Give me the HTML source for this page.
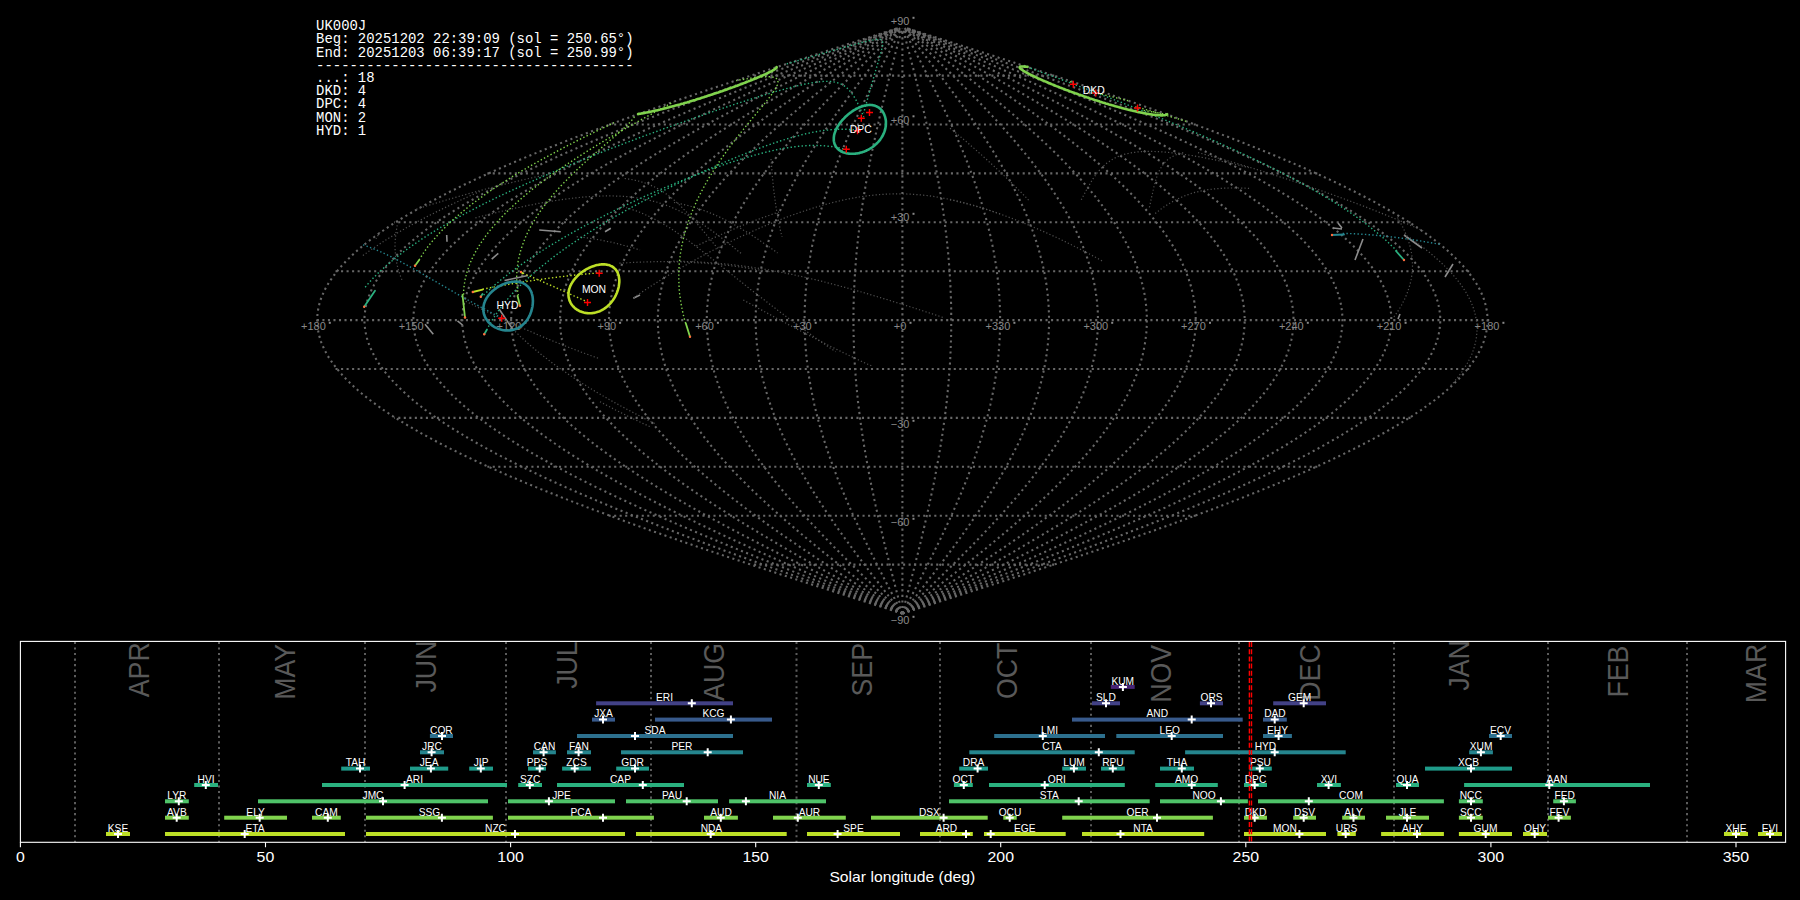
<!DOCTYPE html><html><head><meta charset="utf-8"><style>html,body{margin:0;padding:0;background:#000;overflow:hidden}svg{display:block}</style></head><body><svg width="1800" height="900" viewBox="0 0 1800 900"><g fill="none" stroke="#676767" stroke-width="2.08" stroke-dasharray="2.08 3.44"><path d="M902.4 613.5 L907 611.9 L911.7 610.2 L916.4 608.6 L921.1 607 L925.8 605.4 L930.5 603.7 L935.2 602.1 L939.9 600.5 L944.6 598.8 L949.2 597.2 L953.9 595.6 L958.6 593.9 L963.2 592.3 L967.9 590.7 L972.6 589 L977.2 587.4 L981.9 585.8 L986.5 584.2 L991.1 582.5 L995.8 580.9 L1000.4 579.3 L1005 577.6 L1009.6 576 L1014.2 574.4 L1018.8 572.8 L1023.4 571.1 L1027.9 569.5 L1032.5 567.9 L1037 566.2 L1041.6 564.6 L1046.1 563 L1050.6 561.3 L1055.1 559.7 L1059.6 558.1 L1064.1 556.5 L1068.6 554.8 L1073 553.2 L1077.5 551.6 L1081.9 549.9 L1086.3 548.3 L1090.7 546.7 L1095.1 545 L1099.5 543.4 L1103.9 541.8 L1108.2 540.1 L1112.5 538.5 L1116.8 536.9 L1121.1 535.3 L1125.4 533.6 L1129.7 532 L1133.9 530.4 L1138.1 528.7 L1142.4 527.1 L1146.6 525.5 L1150.7 523.9 L1154.9 522.2 L1159 520.6 L1163.1 519 L1167.2 517.3 L1171.3 515.7 L1175.4 514.1 L1179.4 512.4 L1183.4 510.8 L1187.4 509.2 L1191.4 507.6 L1195.3 505.9 L1199.2 504.3 L1203.1 502.7 L1207 501 L1210.9 499.4 L1214.7 497.8 L1218.5 496.1 L1222.3 494.5 L1226.1 492.9 L1229.8 491.2 L1233.5 489.6 L1237.2 488 L1240.9 486.4 L1244.5 484.7 L1248.1 483.1 L1251.7 481.5 L1255.2 479.8 L1258.8 478.2 L1262.3 476.6 L1265.7 475 L1269.2 473.3 L1272.6 471.7 L1276 470.1 L1279.4 468.4 L1282.7 466.8 L1286 465.2 L1289.3 463.5 L1292.5 461.9 L1295.7 460.3 L1298.9 458.6 L1302.1 457 L1305.2 455.4 L1308.3 453.8 L1311.4 452.1 L1314.4 450.5 L1317.4 448.9 L1320.4 447.2 L1323.3 445.6 L1326.2 444 L1329.1 442.4 L1331.9 440.7 L1334.7 439.1 L1337.5 437.5 L1340.3 435.8 L1343 434.2 L1345.6 432.6 L1348.3 430.9 L1350.9 429.3 L1353.5 427.7 L1356 426.1 L1358.5 424.4 L1361 422.8 L1363.4 421.2 L1365.8 419.5 L1368.2 417.9 L1370.5 416.3 L1372.8 414.6 L1375.1 413 L1377.3 411.4 L1379.5 409.8 L1381.6 408.1 L1383.7 406.5 L1385.8 404.9 L1387.9 403.2 L1389.9 401.6 L1391.8 400 L1393.7 398.3 L1395.6 396.7 L1397.5 395.1 L1399.3 393.5 L1401.1 391.8 L1402.8 390.2 L1404.5 388.6 L1406.2 386.9 L1407.8 385.3 L1409.4 383.7 L1410.9 382 L1412.5 380.4 L1413.9 378.8 L1415.4 377.2 L1416.7 375.5 L1418.1 373.9 L1419.4 372.3 L1420.7 370.6 L1421.9 369 L1423.1 367.4 L1424.3 365.7 L1425.4 364.1 L1426.5 362.5 L1427.5 360.9 L1428.5 359.2 L1429.5 357.6 L1430.4 356 L1431.2 354.3 L1432.1 352.7 L1432.9 351.1 L1433.6 349.4 L1434.3 347.8 L1435 346.2 L1435.6 344.6 L1436.2 342.9 L1436.8 341.3 L1437.3 339.7 L1437.8 338 L1438.2 336.4 L1438.6 334.8 L1438.9 333.1 L1439.2 331.5 L1439.5 329.9 L1439.7 328.2 L1439.9 326.6 L1440.1 325 L1440.2 323.4 L1440.2 321.7 L1440.2 320.1 L1440.2 318.5 L1440.2 316.8 L1440.1 315.2 L1439.9 313.6 L1439.7 312 L1439.5 310.3 L1439.2 308.7 L1438.9 307.1 L1438.6 305.4 L1438.2 303.8 L1437.8 302.2 L1437.3 300.5 L1436.8 298.9 L1436.2 297.3 L1435.6 295.7 L1435 294 L1434.3 292.4 L1433.6 290.8 L1432.9 289.1 L1432.1 287.5 L1431.2 285.9 L1430.4 284.2 L1429.5 282.6 L1428.5 281 L1427.5 279.4 L1426.5 277.7 L1425.4 276.1 L1424.3 274.5 L1423.1 272.8 L1421.9 271.2 L1420.7 269.6 L1419.4 267.9 L1418.1 266.3 L1416.7 264.7 L1415.4 263.1 L1413.9 261.4 L1412.5 259.8 L1410.9 258.2 L1409.4 256.5 L1407.8 254.9 L1406.2 253.3 L1404.5 251.6 L1402.8 250 L1401.1 248.4 L1399.3 246.8 L1397.5 245.1 L1395.6 243.5 L1393.7 241.9 L1391.8 240.2 L1389.9 238.6 L1387.9 237 L1385.8 235.3 L1383.7 233.7 L1381.6 232.1 L1379.5 230.5 L1377.3 228.8 L1375.1 227.2 L1372.8 225.6 L1370.5 223.9 L1368.2 222.3 L1365.8 220.7 L1363.4 219 L1361 217.4 L1358.5 215.8 L1356 214.2 L1353.5 212.5 L1350.9 210.9 L1348.3 209.3 L1345.6 207.6 L1343 206 L1340.3 204.4 L1337.5 202.7 L1334.7 201.1 L1331.9 199.5 L1329.1 197.9 L1326.2 196.2 L1323.3 194.6 L1320.4 193 L1317.4 191.3 L1314.4 189.7 L1311.4 188.1 L1308.3 186.4 L1305.2 184.8 L1302.1 183.2 L1298.9 181.6 L1295.7 179.9 L1292.5 178.3 L1289.3 176.7 L1286 175 L1282.7 173.4 L1279.4 171.8 L1276 170.1 L1272.6 168.5 L1269.2 166.9 L1265.7 165.3 L1262.3 163.6 L1258.8 162 L1255.2 160.4 L1251.7 158.7 L1248.1 157.1 L1244.5 155.5 L1240.9 153.8 L1237.2 152.2 L1233.5 150.6 L1229.8 149 L1226.1 147.3 L1222.3 145.7 L1218.5 144.1 L1214.7 142.4 L1210.9 140.8 L1207 139.2 L1203.1 137.5 L1199.2 135.9 L1195.3 134.3 L1191.4 132.7 L1187.4 131 L1183.4 129.4 L1179.4 127.8 L1175.4 126.1 L1171.3 124.5 L1167.2 122.9 L1163.1 121.2 L1159 119.6 L1154.9 118 L1150.7 116.4 L1146.6 114.7 L1142.4 113.1 L1138.1 111.5 L1133.9 109.8 L1129.7 108.2 L1125.4 106.6 L1121.1 104.9 L1116.8 103.3 L1112.5 101.7 L1108.2 100.1 L1103.9 98.4 L1099.5 96.8 L1095.1 95.2 L1090.7 93.5 L1086.3 91.9 L1081.9 90.3 L1077.5 88.6 L1073 87 L1068.6 85.4 L1064.1 83.8 L1059.6 82.1 L1055.1 80.5 L1050.6 78.9 L1046.1 77.2 L1041.6 75.6 L1037 74 L1032.5 72.3 L1027.9 70.7 L1023.4 69.1 L1018.8 67.5 L1014.2 65.8 L1009.6 64.2 L1005 62.6 L1000.4 60.9 L995.8 59.3 L991.1 57.7 L986.5 56 L981.9 54.4 L977.2 52.8 L972.6 51.2 L967.9 49.5 L963.2 47.9 L958.6 46.3 L953.9 44.6 L949.2 43 L944.6 41.4 L939.9 39.7 L935.2 38.1 L930.5 36.5 L925.8 34.9 L921.1 33.2 L916.4 31.6 L911.7 30 L907 28.3"/><path d="M902.4 613.5 L906.6 611.9 L910.9 610.2 L915.2 608.6 L919.4 607 L923.7 605.4 L927.9 603.7 L932.2 602.1 L936.5 600.5 L940.7 598.8 L945 597.2 L949.2 595.6 L953.5 593.9 L957.7 592.3 L961.9 590.7 L966.2 589 L970.4 587.4 L974.6 585.8 L978.8 584.2 L983.1 582.5 L987.3 580.9 L991.5 579.3 L995.7 577.6 L999.8 576 L1004 574.4 L1008.2 572.8 L1012.4 571.1 L1016.5 569.5 L1020.6 567.9 L1024.8 566.2 L1028.9 564.6 L1033 563 L1037.1 561.3 L1041.2 559.7 L1045.3 558.1 L1049.4 556.5 L1053.5 554.8 L1057.5 553.2 L1061.6 551.6 L1065.6 549.9 L1069.6 548.3 L1073.6 546.7 L1077.6 545 L1081.6 543.4 L1085.5 541.8 L1089.5 540.1 L1093.4 538.5 L1097.3 536.9 L1101.2 535.3 L1105.1 533.6 L1109 532 L1112.9 530.4 L1116.7 528.7 L1120.5 527.1 L1124.4 525.5 L1128.1 523.9 L1131.9 522.2 L1135.7 520.6 L1139.4 519 L1143.1 517.3 L1146.9 515.7 L1150.5 514.1 L1154.2 512.4 L1157.9 510.8 L1161.5 509.2 L1165.1 507.6 L1168.7 505.9 L1172.2 504.3 L1175.8 502.7 L1179.3 501 L1182.8 499.4 L1186.3 497.8 L1189.8 496.1 L1193.2 494.5 L1196.6 492.9 L1200 491.2 L1203.4 489.6 L1206.8 488 L1210.1 486.4 L1213.4 484.7 L1216.7 483.1 L1219.9 481.5 L1223.2 479.8 L1226.4 478.2 L1229.6 476.6 L1232.7 475 L1235.8 473.3 L1239 471.7 L1242 470.1 L1245.1 468.4 L1248.1 466.8 L1251.1 465.2 L1254.1 463.5 L1257.1 461.9 L1260 460.3 L1262.9 458.6 L1265.7 457 L1268.6 455.4 L1271.4 453.8 L1274.2 452.1 L1276.9 450.5 L1279.7 448.9 L1282.4 447.2 L1285 445.6 L1287.7 444 L1290.3 442.4 L1292.9 440.7 L1295.4 439.1 L1298 437.5 L1300.5 435.8 L1302.9 434.2 L1305.3 432.6 L1307.7 430.9 L1310.1 429.3 L1312.5 427.7 L1314.8 426.1 L1317 424.4 L1319.3 422.8 L1321.5 421.2 L1323.7 419.5 L1325.8 417.9 L1328 416.3 L1330 414.6 L1332.1 413 L1334.1 411.4 L1336.1 409.8 L1338.1 408.1 L1340 406.5 L1341.9 404.9 L1343.7 403.2 L1345.5 401.6 L1347.3 400 L1349.1 398.3 L1350.8 396.7 L1352.5 395.1 L1354.1 393.5 L1355.7 391.8 L1357.3 390.2 L1358.9 388.6 L1360.4 386.9 L1361.9 385.3 L1363.3 383.7 L1364.7 382 L1366.1 380.4 L1367.4 378.8 L1368.7 377.2 L1370 375.5 L1371.2 373.9 L1372.4 372.3 L1373.6 370.6 L1374.7 369 L1375.8 367.4 L1376.8 365.7 L1377.8 364.1 L1378.8 362.5 L1379.8 360.9 L1380.7 359.2 L1381.5 357.6 L1382.4 356 L1383.2 354.3 L1383.9 352.7 L1384.6 351.1 L1385.3 349.4 L1386 347.8 L1386.6 346.2 L1387.2 344.6 L1387.7 342.9 L1388.2 341.3 L1388.7 339.7 L1389.1 338 L1389.5 336.4 L1389.8 334.8 L1390.2 333.1 L1390.4 331.5 L1390.7 329.9 L1390.9 328.2 L1391.1 326.6 L1391.2 325 L1391.3 323.4 L1391.3 321.7 L1391.3 320.1 L1391.3 318.5 L1391.3 316.8 L1391.2 315.2 L1391.1 313.6 L1390.9 312 L1390.7 310.3 L1390.4 308.7 L1390.2 307.1 L1389.8 305.4 L1389.5 303.8 L1389.1 302.2 L1388.7 300.5 L1388.2 298.9 L1387.7 297.3 L1387.2 295.7 L1386.6 294 L1386 292.4 L1385.3 290.8 L1384.6 289.1 L1383.9 287.5 L1383.2 285.9 L1382.4 284.2 L1381.5 282.6 L1380.7 281 L1379.8 279.4 L1378.8 277.7 L1377.8 276.1 L1376.8 274.5 L1375.8 272.8 L1374.7 271.2 L1373.6 269.6 L1372.4 267.9 L1371.2 266.3 L1370 264.7 L1368.7 263.1 L1367.4 261.4 L1366.1 259.8 L1364.7 258.2 L1363.3 256.5 L1361.9 254.9 L1360.4 253.3 L1358.9 251.6 L1357.3 250 L1355.7 248.4 L1354.1 246.8 L1352.5 245.1 L1350.8 243.5 L1349.1 241.9 L1347.3 240.2 L1345.5 238.6 L1343.7 237 L1341.9 235.3 L1340 233.7 L1338.1 232.1 L1336.1 230.5 L1334.1 228.8 L1332.1 227.2 L1330 225.6 L1328 223.9 L1325.8 222.3 L1323.7 220.7 L1321.5 219 L1319.3 217.4 L1317 215.8 L1314.8 214.2 L1312.5 212.5 L1310.1 210.9 L1307.7 209.3 L1305.3 207.6 L1302.9 206 L1300.5 204.4 L1298 202.7 L1295.4 201.1 L1292.9 199.5 L1290.3 197.9 L1287.7 196.2 L1285 194.6 L1282.4 193 L1279.7 191.3 L1276.9 189.7 L1274.2 188.1 L1271.4 186.4 L1268.6 184.8 L1265.7 183.2 L1262.9 181.6 L1260 179.9 L1257.1 178.3 L1254.1 176.7 L1251.1 175 L1248.1 173.4 L1245.1 171.8 L1242 170.1 L1239 168.5 L1235.8 166.9 L1232.7 165.3 L1229.6 163.6 L1226.4 162 L1223.2 160.4 L1219.9 158.7 L1216.7 157.1 L1213.4 155.5 L1210.1 153.8 L1206.8 152.2 L1203.4 150.6 L1200 149 L1196.6 147.3 L1193.2 145.7 L1189.8 144.1 L1186.3 142.4 L1182.8 140.8 L1179.3 139.2 L1175.8 137.5 L1172.2 135.9 L1168.7 134.3 L1165.1 132.7 L1161.5 131 L1157.9 129.4 L1154.2 127.8 L1150.5 126.1 L1146.9 124.5 L1143.1 122.9 L1139.4 121.2 L1135.7 119.6 L1131.9 118 L1128.1 116.4 L1124.4 114.7 L1120.5 113.1 L1116.7 111.5 L1112.9 109.8 L1109 108.2 L1105.1 106.6 L1101.2 104.9 L1097.3 103.3 L1093.4 101.7 L1089.5 100.1 L1085.5 98.4 L1081.6 96.8 L1077.6 95.2 L1073.6 93.5 L1069.6 91.9 L1065.6 90.3 L1061.6 88.6 L1057.5 87 L1053.5 85.4 L1049.4 83.8 L1045.3 82.1 L1041.2 80.5 L1037.1 78.9 L1033 77.2 L1028.9 75.6 L1024.8 74 L1020.6 72.3 L1016.5 70.7 L1012.4 69.1 L1008.2 67.5 L1004 65.8 L999.8 64.2 L995.7 62.6 L991.5 60.9 L987.3 59.3 L983.1 57.7 L978.8 56 L974.6 54.4 L970.4 52.8 L966.2 51.2 L961.9 49.5 L957.7 47.9 L953.5 46.3 L949.2 44.6 L945 43 L940.7 41.4 L936.5 39.7 L932.2 38.1 L927.9 36.5 L923.7 34.9 L919.4 33.2 L915.2 31.6 L910.9 30 L906.6 28.3"/><path d="M902.4 613.5 L906.2 611.9 L910 610.2 L913.9 608.6 L917.7 607 L921.5 605.4 L925.4 603.7 L929.2 602.1 L933 600.5 L936.9 598.8 L940.7 597.2 L944.5 595.6 L948.4 593.9 L952.2 592.3 L956 590.7 L959.8 589 L963.6 587.4 L967.4 585.8 L971.2 584.2 L975 582.5 L978.8 580.9 L982.6 579.3 L986.3 577.6 L990.1 576 L993.9 574.4 L997.6 572.8 L1001.4 571.1 L1005.1 569.5 L1008.8 567.9 L1012.5 566.2 L1016.3 564.6 L1020 563 L1023.7 561.3 L1027.3 559.7 L1031 558.1 L1034.7 556.5 L1038.3 554.8 L1042 553.2 L1045.6 551.6 L1049.3 549.9 L1052.9 548.3 L1056.5 546.7 L1060.1 545 L1063.6 543.4 L1067.2 541.8 L1070.8 540.1 L1074.3 538.5 L1077.8 536.9 L1081.4 535.3 L1084.9 533.6 L1088.3 532 L1091.8 530.4 L1095.3 528.7 L1098.7 527.1 L1102.2 525.5 L1105.6 523.9 L1109 522.2 L1112.3 520.6 L1115.7 519 L1119.1 517.3 L1122.4 515.7 L1125.7 514.1 L1129 512.4 L1132.3 510.8 L1135.6 509.2 L1138.8 507.6 L1142 505.9 L1145.3 504.3 L1148.5 502.7 L1151.6 501 L1154.8 499.4 L1157.9 497.8 L1161 496.1 L1164.1 494.5 L1167.2 492.9 L1170.3 491.2 L1173.3 489.6 L1176.3 488 L1179.3 486.4 L1182.3 484.7 L1185.2 483.1 L1188.2 481.5 L1191.1 479.8 L1194 478.2 L1196.8 476.6 L1199.7 475 L1202.5 473.3 L1205.3 471.7 L1208.1 470.1 L1210.8 468.4 L1213.5 466.8 L1216.3 465.2 L1218.9 463.5 L1221.6 461.9 L1224.2 460.3 L1226.8 458.6 L1229.4 457 L1232 455.4 L1234.5 453.8 L1237 452.1 L1239.5 450.5 L1241.9 448.9 L1244.4 447.2 L1246.8 445.6 L1249.2 444 L1251.5 442.4 L1253.8 440.7 L1256.1 439.1 L1258.4 437.5 L1260.6 435.8 L1262.9 434.2 L1265 432.6 L1267.2 430.9 L1269.3 429.3 L1271.4 427.7 L1273.5 426.1 L1275.6 424.4 L1277.6 422.8 L1279.6 421.2 L1281.6 419.5 L1283.5 417.9 L1285.4 416.3 L1287.3 414.6 L1289.1 413 L1290.9 411.4 L1292.7 409.8 L1294.5 408.1 L1296.2 406.5 L1297.9 404.9 L1299.6 403.2 L1301.2 401.6 L1302.8 400 L1304.4 398.3 L1305.9 396.7 L1307.5 395.1 L1308.9 393.5 L1310.4 391.8 L1311.8 390.2 L1313.2 388.6 L1314.6 386.9 L1315.9 385.3 L1317.2 383.7 L1318.5 382 L1319.7 380.4 L1320.9 378.8 L1322.1 377.2 L1323.2 375.5 L1324.3 373.9 L1325.4 372.3 L1326.4 370.6 L1327.5 369 L1328.4 367.4 L1329.4 365.7 L1330.3 364.1 L1331.2 362.5 L1332 360.9 L1332.8 359.2 L1333.6 357.6 L1334.4 356 L1335.1 354.3 L1335.8 352.7 L1336.4 351.1 L1337 349.4 L1337.6 347.8 L1338.2 346.2 L1338.7 344.6 L1339.2 342.9 L1339.6 341.3 L1340 339.7 L1340.4 338 L1340.8 336.4 L1341.1 334.8 L1341.4 333.1 L1341.6 331.5 L1341.8 329.9 L1342 328.2 L1342.2 326.6 L1342.3 325 L1342.4 323.4 L1342.4 321.7 L1342.5 320.1 L1342.4 318.5 L1342.4 316.8 L1342.3 315.2 L1342.2 313.6 L1342 312 L1341.8 310.3 L1341.6 308.7 L1341.4 307.1 L1341.1 305.4 L1340.8 303.8 L1340.4 302.2 L1340 300.5 L1339.6 298.9 L1339.2 297.3 L1338.7 295.7 L1338.2 294 L1337.6 292.4 L1337 290.8 L1336.4 289.1 L1335.8 287.5 L1335.1 285.9 L1334.4 284.2 L1333.6 282.6 L1332.8 281 L1332 279.4 L1331.2 277.7 L1330.3 276.1 L1329.4 274.5 L1328.4 272.8 L1327.5 271.2 L1326.4 269.6 L1325.4 267.9 L1324.3 266.3 L1323.2 264.7 L1322.1 263.1 L1320.9 261.4 L1319.7 259.8 L1318.5 258.2 L1317.2 256.5 L1315.9 254.9 L1314.6 253.3 L1313.2 251.6 L1311.8 250 L1310.4 248.4 L1308.9 246.8 L1307.5 245.1 L1305.9 243.5 L1304.4 241.9 L1302.8 240.2 L1301.2 238.6 L1299.6 237 L1297.9 235.3 L1296.2 233.7 L1294.5 232.1 L1292.7 230.5 L1290.9 228.8 L1289.1 227.2 L1287.3 225.6 L1285.4 223.9 L1283.5 222.3 L1281.6 220.7 L1279.6 219 L1277.6 217.4 L1275.6 215.8 L1273.5 214.2 L1271.4 212.5 L1269.3 210.9 L1267.2 209.3 L1265 207.6 L1262.9 206 L1260.6 204.4 L1258.4 202.7 L1256.1 201.1 L1253.8 199.5 L1251.5 197.9 L1249.2 196.2 L1246.8 194.6 L1244.4 193 L1241.9 191.3 L1239.5 189.7 L1237 188.1 L1234.5 186.4 L1232 184.8 L1229.4 183.2 L1226.8 181.6 L1224.2 179.9 L1221.6 178.3 L1218.9 176.7 L1216.3 175 L1213.5 173.4 L1210.8 171.8 L1208.1 170.1 L1205.3 168.5 L1202.5 166.9 L1199.7 165.3 L1196.8 163.6 L1194 162 L1191.1 160.4 L1188.2 158.7 L1185.2 157.1 L1182.3 155.5 L1179.3 153.8 L1176.3 152.2 L1173.3 150.6 L1170.3 149 L1167.2 147.3 L1164.1 145.7 L1161 144.1 L1157.9 142.4 L1154.8 140.8 L1151.6 139.2 L1148.5 137.5 L1145.3 135.9 L1142 134.3 L1138.8 132.7 L1135.6 131 L1132.3 129.4 L1129 127.8 L1125.7 126.1 L1122.4 124.5 L1119.1 122.9 L1115.7 121.2 L1112.3 119.6 L1109 118 L1105.6 116.4 L1102.2 114.7 L1098.7 113.1 L1095.3 111.5 L1091.8 109.8 L1088.3 108.2 L1084.9 106.6 L1081.4 104.9 L1077.8 103.3 L1074.3 101.7 L1070.8 100.1 L1067.2 98.4 L1063.6 96.8 L1060.1 95.2 L1056.5 93.5 L1052.9 91.9 L1049.3 90.3 L1045.6 88.6 L1042 87 L1038.3 85.4 L1034.7 83.8 L1031 82.1 L1027.3 80.5 L1023.7 78.9 L1020 77.2 L1016.3 75.6 L1012.5 74 L1008.8 72.3 L1005.1 70.7 L1001.4 69.1 L997.6 67.5 L993.9 65.8 L990.1 64.2 L986.3 62.6 L982.6 60.9 L978.8 59.3 L975 57.7 L971.2 56 L967.4 54.4 L963.6 52.8 L959.8 51.2 L956 49.5 L952.2 47.9 L948.4 46.3 L944.5 44.6 L940.7 43 L936.9 41.4 L933 39.7 L929.2 38.1 L925.4 36.5 L921.5 34.9 L917.7 33.2 L913.9 31.6 L910 30 L906.2 28.3"/><path d="M902.4 613.5 L905.8 611.9 L909.2 610.2 L912.6 608.6 L916 607 L919.4 605.4 L922.8 603.7 L926.2 602.1 L929.6 600.5 L933 598.8 L936.4 597.2 L939.8 595.6 L943.2 593.9 L946.6 592.3 L950 590.7 L953.4 589 L956.8 587.4 L960.2 585.8 L963.5 584.2 L966.9 582.5 L970.3 580.9 L973.6 579.3 L977 577.6 L980.3 576 L983.7 574.4 L987 572.8 L990.4 571.1 L993.7 569.5 L997 567.9 L1000.3 566.2 L1003.6 564.6 L1006.9 563 L1010.2 561.3 L1013.5 559.7 L1016.7 558.1 L1020 556.5 L1023.2 554.8 L1026.5 553.2 L1029.7 551.6 L1032.9 549.9 L1036.1 548.3 L1039.4 546.7 L1042.5 545 L1045.7 543.4 L1048.9 541.8 L1052.1 540.1 L1055.2 538.5 L1058.3 536.9 L1061.5 535.3 L1064.6 533.6 L1067.7 532 L1070.8 530.4 L1073.8 528.7 L1076.9 527.1 L1080 525.5 L1083 523.9 L1086 522.2 L1089 520.6 L1092 519 L1095 517.3 L1098 515.7 L1100.9 514.1 L1103.8 512.4 L1106.8 510.8 L1109.7 509.2 L1112.5 507.6 L1115.4 505.9 L1118.3 504.3 L1121.1 502.7 L1123.9 501 L1126.7 499.4 L1129.5 497.8 L1132.3 496.1 L1135 494.5 L1137.8 492.9 L1140.5 491.2 L1143.2 489.6 L1145.9 488 L1148.5 486.4 L1151.2 484.7 L1153.8 483.1 L1156.4 481.5 L1159 479.8 L1161.6 478.2 L1164.1 476.6 L1166.6 475 L1169.1 473.3 L1171.6 471.7 L1174.1 470.1 L1176.5 468.4 L1179 466.8 L1181.4 465.2 L1183.8 463.5 L1186.1 461.9 L1188.5 460.3 L1190.8 458.6 L1193.1 457 L1195.3 455.4 L1197.6 453.8 L1199.8 452.1 L1202 450.5 L1204.2 448.9 L1206.4 447.2 L1208.5 445.6 L1210.6 444 L1212.7 442.4 L1214.8 440.7 L1216.8 439.1 L1218.8 437.5 L1220.8 435.8 L1222.8 434.2 L1224.7 432.6 L1226.7 430.9 L1228.6 429.3 L1230.4 427.7 L1232.3 426.1 L1234.1 424.4 L1235.9 422.8 L1237.7 421.2 L1239.4 419.5 L1241.1 417.9 L1242.8 416.3 L1244.5 414.6 L1246.1 413 L1247.8 411.4 L1249.3 409.8 L1250.9 408.1 L1252.4 406.5 L1254 404.9 L1255.4 403.2 L1256.9 401.6 L1258.3 400 L1259.7 398.3 L1261.1 396.7 L1262.5 395.1 L1263.8 393.5 L1265.1 391.8 L1266.3 390.2 L1267.6 388.6 L1268.8 386.9 L1270 385.3 L1271.1 383.7 L1272.2 382 L1273.3 380.4 L1274.4 378.8 L1275.4 377.2 L1276.5 375.5 L1277.4 373.9 L1278.4 372.3 L1279.3 370.6 L1280.2 369 L1281.1 367.4 L1281.9 365.7 L1282.7 364.1 L1283.5 362.5 L1284.3 360.9 L1285 359.2 L1285.7 357.6 L1286.4 356 L1287 354.3 L1287.6 352.7 L1288.2 351.1 L1288.7 349.4 L1289.3 347.8 L1289.7 346.2 L1290.2 344.6 L1290.6 342.9 L1291 341.3 L1291.4 339.7 L1291.7 338 L1292.1 336.4 L1292.3 334.8 L1292.6 333.1 L1292.8 331.5 L1293 329.9 L1293.2 328.2 L1293.3 326.6 L1293.4 325 L1293.5 323.4 L1293.5 321.7 L1293.5 320.1 L1293.5 318.5 L1293.5 316.8 L1293.4 315.2 L1293.3 313.6 L1293.2 312 L1293 310.3 L1292.8 308.7 L1292.6 307.1 L1292.3 305.4 L1292.1 303.8 L1291.7 302.2 L1291.4 300.5 L1291 298.9 L1290.6 297.3 L1290.2 295.7 L1289.7 294 L1289.3 292.4 L1288.7 290.8 L1288.2 289.1 L1287.6 287.5 L1287 285.9 L1286.4 284.2 L1285.7 282.6 L1285 281 L1284.3 279.4 L1283.5 277.7 L1282.7 276.1 L1281.9 274.5 L1281.1 272.8 L1280.2 271.2 L1279.3 269.6 L1278.4 267.9 L1277.4 266.3 L1276.5 264.7 L1275.4 263.1 L1274.4 261.4 L1273.3 259.8 L1272.2 258.2 L1271.1 256.5 L1270 254.9 L1268.8 253.3 L1267.6 251.6 L1266.3 250 L1265.1 248.4 L1263.8 246.8 L1262.5 245.1 L1261.1 243.5 L1259.7 241.9 L1258.3 240.2 L1256.9 238.6 L1255.4 237 L1254 235.3 L1252.4 233.7 L1250.9 232.1 L1249.3 230.5 L1247.8 228.8 L1246.1 227.2 L1244.5 225.6 L1242.8 223.9 L1241.1 222.3 L1239.4 220.7 L1237.7 219 L1235.9 217.4 L1234.1 215.8 L1232.3 214.2 L1230.4 212.5 L1228.6 210.9 L1226.7 209.3 L1224.7 207.6 L1222.8 206 L1220.8 204.4 L1218.8 202.7 L1216.8 201.1 L1214.8 199.5 L1212.7 197.9 L1210.6 196.2 L1208.5 194.6 L1206.4 193 L1204.2 191.3 L1202 189.7 L1199.8 188.1 L1197.6 186.4 L1195.3 184.8 L1193.1 183.2 L1190.8 181.6 L1188.5 179.9 L1186.1 178.3 L1183.8 176.7 L1181.4 175 L1179 173.4 L1176.5 171.8 L1174.1 170.1 L1171.6 168.5 L1169.1 166.9 L1166.6 165.3 L1164.1 163.6 L1161.6 162 L1159 160.4 L1156.4 158.7 L1153.8 157.1 L1151.2 155.5 L1148.5 153.8 L1145.9 152.2 L1143.2 150.6 L1140.5 149 L1137.8 147.3 L1135 145.7 L1132.3 144.1 L1129.5 142.4 L1126.7 140.8 L1123.9 139.2 L1121.1 137.5 L1118.3 135.9 L1115.4 134.3 L1112.5 132.7 L1109.7 131 L1106.8 129.4 L1103.8 127.8 L1100.9 126.1 L1098 124.5 L1095 122.9 L1092 121.2 L1089 119.6 L1086 118 L1083 116.4 L1080 114.7 L1076.9 113.1 L1073.8 111.5 L1070.8 109.8 L1067.7 108.2 L1064.6 106.6 L1061.5 104.9 L1058.3 103.3 L1055.2 101.7 L1052.1 100.1 L1048.9 98.4 L1045.7 96.8 L1042.5 95.2 L1039.4 93.5 L1036.1 91.9 L1032.9 90.3 L1029.7 88.6 L1026.5 87 L1023.2 85.4 L1020 83.8 L1016.7 82.1 L1013.5 80.5 L1010.2 78.9 L1006.9 77.2 L1003.6 75.6 L1000.3 74 L997 72.3 L993.7 70.7 L990.4 69.1 L987 67.5 L983.7 65.8 L980.3 64.2 L977 62.6 L973.6 60.9 L970.3 59.3 L966.9 57.7 L963.5 56 L960.2 54.4 L956.8 52.8 L953.4 51.2 L950 49.5 L946.6 47.9 L943.2 46.3 L939.8 44.6 L936.4 43 L933 41.4 L929.6 39.7 L926.2 38.1 L922.8 36.5 L919.4 34.9 L916 33.2 L912.6 31.6 L909.2 30 L905.8 28.3"/><path d="M902.4 613.5 L905.3 611.9 L908.3 610.2 L911.3 608.6 L914.3 607 L917.3 605.4 L920.3 603.7 L923.2 602.1 L926.2 600.5 L929.2 598.8 L932.2 597.2 L935.2 595.6 L938.1 593.9 L941.1 592.3 L944.1 590.7 L947 589 L950 587.4 L952.9 585.8 L955.9 584.2 L958.8 582.5 L961.8 580.9 L964.7 579.3 L967.7 577.6 L970.6 576 L973.5 574.4 L976.4 572.8 L979.4 571.1 L982.3 569.5 L985.2 567.9 L988.1 566.2 L990.9 564.6 L993.8 563 L996.7 561.3 L999.6 559.7 L1002.4 558.1 L1005.3 556.5 L1008.1 554.8 L1011 553.2 L1013.8 551.6 L1016.6 549.9 L1019.4 548.3 L1022.2 546.7 L1025 545 L1027.8 543.4 L1030.6 541.8 L1033.3 540.1 L1036.1 538.5 L1038.8 536.9 L1041.6 535.3 L1044.3 533.6 L1047 532 L1049.7 530.4 L1052.4 528.7 L1055.1 527.1 L1057.8 525.5 L1060.4 523.9 L1063.1 522.2 L1065.7 520.6 L1068.3 519 L1070.9 517.3 L1073.5 515.7 L1076.1 514.1 L1078.6 512.4 L1081.2 510.8 L1083.7 509.2 L1086.3 507.6 L1088.8 505.9 L1091.3 504.3 L1093.8 502.7 L1096.2 501 L1098.7 499.4 L1101.1 497.8 L1103.5 496.1 L1106 494.5 L1108.4 492.9 L1110.7 491.2 L1113.1 489.6 L1115.4 488 L1117.8 486.4 L1120.1 484.7 L1122.4 483.1 L1124.7 481.5 L1126.9 479.8 L1129.2 478.2 L1131.4 476.6 L1133.6 475 L1135.8 473.3 L1138 471.7 L1140.1 470.1 L1142.3 468.4 L1144.4 466.8 L1146.5 465.2 L1148.6 463.5 L1150.6 461.9 L1152.7 460.3 L1154.7 458.6 L1156.7 457 L1158.7 455.4 L1160.7 453.8 L1162.6 452.1 L1164.6 450.5 L1166.5 448.9 L1168.4 447.2 L1170.2 445.6 L1172.1 444 L1173.9 442.4 L1175.7 440.7 L1177.5 439.1 L1179.3 437.5 L1181 435.8 L1182.7 434.2 L1184.4 432.6 L1186.1 430.9 L1187.8 429.3 L1189.4 427.7 L1191 426.1 L1192.6 424.4 L1194.2 422.8 L1195.8 421.2 L1197.3 419.5 L1198.8 417.9 L1200.3 416.3 L1201.7 414.6 L1203.2 413 L1204.6 411.4 L1206 409.8 L1207.3 408.1 L1208.7 406.5 L1210 404.9 L1211.3 403.2 L1212.6 401.6 L1213.8 400 L1215.1 398.3 L1216.3 396.7 L1217.4 395.1 L1218.6 393.5 L1219.7 391.8 L1220.8 390.2 L1221.9 388.6 L1223 386.9 L1224 385.3 L1225 383.7 L1226 382 L1227 380.4 L1227.9 378.8 L1228.8 377.2 L1229.7 375.5 L1230.6 373.9 L1231.4 372.3 L1232.2 370.6 L1233 369 L1233.7 367.4 L1234.5 365.7 L1235.2 364.1 L1235.9 362.5 L1236.5 360.9 L1237.2 359.2 L1237.8 357.6 L1238.4 356 L1238.9 354.3 L1239.4 352.7 L1240 351.1 L1240.4 349.4 L1240.9 347.8 L1241.3 346.2 L1241.7 344.6 L1242.1 342.9 L1242.4 341.3 L1242.8 339.7 L1243.1 338 L1243.3 336.4 L1243.6 334.8 L1243.8 333.1 L1244 331.5 L1244.2 329.9 L1244.3 328.2 L1244.4 326.6 L1244.5 325 L1244.6 323.4 L1244.6 321.7 L1244.7 320.1 L1244.6 318.5 L1244.6 316.8 L1244.5 315.2 L1244.4 313.6 L1244.3 312 L1244.2 310.3 L1244 308.7 L1243.8 307.1 L1243.6 305.4 L1243.3 303.8 L1243.1 302.2 L1242.8 300.5 L1242.4 298.9 L1242.1 297.3 L1241.7 295.7 L1241.3 294 L1240.9 292.4 L1240.4 290.8 L1240 289.1 L1239.4 287.5 L1238.9 285.9 L1238.4 284.2 L1237.8 282.6 L1237.2 281 L1236.5 279.4 L1235.9 277.7 L1235.2 276.1 L1234.5 274.5 L1233.7 272.8 L1233 271.2 L1232.2 269.6 L1231.4 267.9 L1230.6 266.3 L1229.7 264.7 L1228.8 263.1 L1227.9 261.4 L1227 259.8 L1226 258.2 L1225 256.5 L1224 254.9 L1223 253.3 L1221.9 251.6 L1220.8 250 L1219.7 248.4 L1218.6 246.8 L1217.4 245.1 L1216.3 243.5 L1215.1 241.9 L1213.8 240.2 L1212.6 238.6 L1211.3 237 L1210 235.3 L1208.7 233.7 L1207.3 232.1 L1206 230.5 L1204.6 228.8 L1203.2 227.2 L1201.7 225.6 L1200.3 223.9 L1198.8 222.3 L1197.3 220.7 L1195.8 219 L1194.2 217.4 L1192.6 215.8 L1191 214.2 L1189.4 212.5 L1187.8 210.9 L1186.1 209.3 L1184.4 207.6 L1182.7 206 L1181 204.4 L1179.3 202.7 L1177.5 201.1 L1175.7 199.5 L1173.9 197.9 L1172.1 196.2 L1170.2 194.6 L1168.4 193 L1166.5 191.3 L1164.6 189.7 L1162.6 188.1 L1160.7 186.4 L1158.7 184.8 L1156.7 183.2 L1154.7 181.6 L1152.7 179.9 L1150.6 178.3 L1148.6 176.7 L1146.5 175 L1144.4 173.4 L1142.3 171.8 L1140.1 170.1 L1138 168.5 L1135.8 166.9 L1133.6 165.3 L1131.4 163.6 L1129.2 162 L1126.9 160.4 L1124.7 158.7 L1122.4 157.1 L1120.1 155.5 L1117.8 153.8 L1115.4 152.2 L1113.1 150.6 L1110.7 149 L1108.4 147.3 L1106 145.7 L1103.5 144.1 L1101.1 142.4 L1098.7 140.8 L1096.2 139.2 L1093.8 137.5 L1091.3 135.9 L1088.8 134.3 L1086.3 132.7 L1083.7 131 L1081.2 129.4 L1078.6 127.8 L1076.1 126.1 L1073.5 124.5 L1070.9 122.9 L1068.3 121.2 L1065.7 119.6 L1063.1 118 L1060.4 116.4 L1057.8 114.7 L1055.1 113.1 L1052.4 111.5 L1049.7 109.8 L1047 108.2 L1044.3 106.6 L1041.6 104.9 L1038.8 103.3 L1036.1 101.7 L1033.3 100.1 L1030.6 98.4 L1027.8 96.8 L1025 95.2 L1022.2 93.5 L1019.4 91.9 L1016.6 90.3 L1013.8 88.6 L1011 87 L1008.1 85.4 L1005.3 83.8 L1002.4 82.1 L999.6 80.5 L996.7 78.9 L993.8 77.2 L990.9 75.6 L988.1 74 L985.2 72.3 L982.3 70.7 L979.4 69.1 L976.4 67.5 L973.5 65.8 L970.6 64.2 L967.7 62.6 L964.7 60.9 L961.8 59.3 L958.8 57.7 L955.9 56 L952.9 54.4 L950 52.8 L947 51.2 L944.1 49.5 L941.1 47.9 L938.1 46.3 L935.2 44.6 L932.2 43 L929.2 41.4 L926.2 39.7 L923.2 38.1 L920.3 36.5 L917.3 34.9 L914.3 33.2 L911.3 31.6 L908.3 30 L905.3 28.3"/><path d="M902.4 613.5 L904.9 611.9 L907.5 610.2 L910 608.6 L912.6 607 L915.1 605.4 L917.7 603.7 L920.3 602.1 L922.8 600.5 L925.4 598.8 L927.9 597.2 L930.5 595.6 L933 593.9 L935.6 592.3 L938.1 590.7 L940.6 589 L943.2 587.4 L945.7 585.8 L948.2 584.2 L950.8 582.5 L953.3 580.9 L955.8 579.3 L958.3 577.6 L960.8 576 L963.4 574.4 L965.9 572.8 L968.4 571.1 L970.8 569.5 L973.3 567.9 L975.8 566.2 L978.3 564.6 L980.8 563 L983.2 561.3 L985.7 559.7 L988.1 558.1 L990.6 556.5 L993 554.8 L995.4 553.2 L997.9 551.6 L1000.3 549.9 L1002.7 548.3 L1005.1 546.7 L1007.5 545 L1009.9 543.4 L1012.3 541.8 L1014.6 540.1 L1017 538.5 L1019.3 536.9 L1021.7 535.3 L1024 533.6 L1026.3 532 L1028.7 530.4 L1031 528.7 L1033.3 527.1 L1035.6 525.5 L1037.8 523.9 L1040.1 522.2 L1042.3 520.6 L1044.6 519 L1046.8 517.3 L1049 515.7 L1051.3 514.1 L1053.5 512.4 L1055.7 510.8 L1057.8 509.2 L1060 507.6 L1062.1 505.9 L1064.3 504.3 L1066.4 502.7 L1068.5 501 L1070.6 499.4 L1072.7 497.8 L1074.8 496.1 L1076.9 494.5 L1078.9 492.9 L1081 491.2 L1083 489.6 L1085 488 L1087 486.4 L1089 484.7 L1090.9 483.1 L1092.9 481.5 L1094.8 479.8 L1096.8 478.2 L1098.7 476.6 L1100.6 475 L1102.4 473.3 L1104.3 471.7 L1106.2 470.1 L1108 468.4 L1109.8 466.8 L1111.6 465.2 L1113.4 463.5 L1115.2 461.9 L1116.9 460.3 L1118.7 458.6 L1120.4 457 L1122.1 455.4 L1123.8 453.8 L1125.5 452.1 L1127.1 450.5 L1128.7 448.9 L1130.4 447.2 L1132 445.6 L1133.6 444 L1135.1 442.4 L1136.7 440.7 L1138.2 439.1 L1139.7 437.5 L1141.2 435.8 L1142.7 434.2 L1144.1 432.6 L1145.6 430.9 L1147 429.3 L1148.4 427.7 L1149.8 426.1 L1151.2 424.4 L1152.5 422.8 L1153.8 421.2 L1155.2 419.5 L1156.4 417.9 L1157.7 416.3 L1159 414.6 L1160.2 413 L1161.4 411.4 L1162.6 409.8 L1163.8 408.1 L1164.9 406.5 L1166.1 404.9 L1167.2 403.2 L1168.3 401.6 L1169.3 400 L1170.4 398.3 L1171.4 396.7 L1172.4 395.1 L1173.4 393.5 L1174.4 391.8 L1175.3 390.2 L1176.3 388.6 L1177.2 386.9 L1178.1 385.3 L1178.9 383.7 L1179.8 382 L1180.6 380.4 L1181.4 378.8 L1182.2 377.2 L1182.9 375.5 L1183.7 373.9 L1184.4 372.3 L1185.1 370.6 L1185.8 369 L1186.4 367.4 L1187 365.7 L1187.6 364.1 L1188.2 362.5 L1188.8 360.9 L1189.3 359.2 L1189.9 357.6 L1190.4 356 L1190.8 354.3 L1191.3 352.7 L1191.7 351.1 L1192.1 349.4 L1192.5 347.8 L1192.9 346.2 L1193.2 344.6 L1193.6 342.9 L1193.9 341.3 L1194.1 339.7 L1194.4 338 L1194.6 336.4 L1194.8 334.8 L1195 333.1 L1195.2 331.5 L1195.3 329.9 L1195.5 328.2 L1195.6 326.6 L1195.6 325 L1195.7 323.4 L1195.7 321.7 L1195.8 320.1 L1195.7 318.5 L1195.7 316.8 L1195.6 315.2 L1195.6 313.6 L1195.5 312 L1195.3 310.3 L1195.2 308.7 L1195 307.1 L1194.8 305.4 L1194.6 303.8 L1194.4 302.2 L1194.1 300.5 L1193.9 298.9 L1193.6 297.3 L1193.2 295.7 L1192.9 294 L1192.5 292.4 L1192.1 290.8 L1191.7 289.1 L1191.3 287.5 L1190.8 285.9 L1190.4 284.2 L1189.9 282.6 L1189.3 281 L1188.8 279.4 L1188.2 277.7 L1187.6 276.1 L1187 274.5 L1186.4 272.8 L1185.8 271.2 L1185.1 269.6 L1184.4 267.9 L1183.7 266.3 L1182.9 264.7 L1182.2 263.1 L1181.4 261.4 L1180.6 259.8 L1179.8 258.2 L1178.9 256.5 L1178.1 254.9 L1177.2 253.3 L1176.3 251.6 L1175.3 250 L1174.4 248.4 L1173.4 246.8 L1172.4 245.1 L1171.4 243.5 L1170.4 241.9 L1169.3 240.2 L1168.3 238.6 L1167.2 237 L1166.1 235.3 L1164.9 233.7 L1163.8 232.1 L1162.6 230.5 L1161.4 228.8 L1160.2 227.2 L1159 225.6 L1157.7 223.9 L1156.4 222.3 L1155.2 220.7 L1153.8 219 L1152.5 217.4 L1151.2 215.8 L1149.8 214.2 L1148.4 212.5 L1147 210.9 L1145.6 209.3 L1144.1 207.6 L1142.7 206 L1141.2 204.4 L1139.7 202.7 L1138.2 201.1 L1136.7 199.5 L1135.1 197.9 L1133.6 196.2 L1132 194.6 L1130.4 193 L1128.7 191.3 L1127.1 189.7 L1125.5 188.1 L1123.8 186.4 L1122.1 184.8 L1120.4 183.2 L1118.7 181.6 L1116.9 179.9 L1115.2 178.3 L1113.4 176.7 L1111.6 175 L1109.8 173.4 L1108 171.8 L1106.2 170.1 L1104.3 168.5 L1102.4 166.9 L1100.6 165.3 L1098.7 163.6 L1096.8 162 L1094.8 160.4 L1092.9 158.7 L1090.9 157.1 L1089 155.5 L1087 153.8 L1085 152.2 L1083 150.6 L1081 149 L1078.9 147.3 L1076.9 145.7 L1074.8 144.1 L1072.7 142.4 L1070.6 140.8 L1068.5 139.2 L1066.4 137.5 L1064.3 135.9 L1062.1 134.3 L1060 132.7 L1057.8 131 L1055.7 129.4 L1053.5 127.8 L1051.3 126.1 L1049 124.5 L1046.8 122.9 L1044.6 121.2 L1042.3 119.6 L1040.1 118 L1037.8 116.4 L1035.6 114.7 L1033.3 113.1 L1031 111.5 L1028.7 109.8 L1026.3 108.2 L1024 106.6 L1021.7 104.9 L1019.3 103.3 L1017 101.7 L1014.6 100.1 L1012.3 98.4 L1009.9 96.8 L1007.5 95.2 L1005.1 93.5 L1002.7 91.9 L1000.3 90.3 L997.9 88.6 L995.4 87 L993 85.4 L990.6 83.8 L988.1 82.1 L985.7 80.5 L983.2 78.9 L980.8 77.2 L978.3 75.6 L975.8 74 L973.3 72.3 L970.8 70.7 L968.4 69.1 L965.9 67.5 L963.4 65.8 L960.8 64.2 L958.3 62.6 L955.8 60.9 L953.3 59.3 L950.8 57.7 L948.2 56 L945.7 54.4 L943.2 52.8 L940.6 51.2 L938.1 49.5 L935.6 47.9 L933 46.3 L930.5 44.6 L927.9 43 L925.4 41.4 L922.8 39.7 L920.3 38.1 L917.7 36.5 L915.1 34.9 L912.6 33.2 L910 31.6 L907.5 30 L904.9 28.3"/><path d="M902.4 613.5 L904.5 611.9 L906.6 610.2 L908.8 608.6 L910.9 607 L913 605.4 L915.1 603.7 L917.3 602.1 L919.4 600.5 L921.5 598.8 L923.7 597.2 L925.8 595.6 L927.9 593.9 L930 592.3 L932.1 590.7 L934.3 589 L936.4 587.4 L938.5 585.8 L940.6 584.2 L942.7 582.5 L944.8 580.9 L946.9 579.3 L949 577.6 L951.1 576 L953.2 574.4 L955.3 572.8 L957.4 571.1 L959.4 569.5 L961.5 567.9 L963.6 566.2 L965.6 564.6 L967.7 563 L969.7 561.3 L971.8 559.7 L973.8 558.1 L975.9 556.5 L977.9 554.8 L979.9 553.2 L982 551.6 L984 549.9 L986 548.3 L988 546.7 L990 545 L992 543.4 L993.9 541.8 L995.9 540.1 L997.9 538.5 L999.8 536.9 L1001.8 535.3 L1003.7 533.6 L1005.7 532 L1007.6 530.4 L1009.5 528.7 L1011.4 527.1 L1013.4 525.5 L1015.2 523.9 L1017.1 522.2 L1019 520.6 L1020.9 519 L1022.7 517.3 L1024.6 515.7 L1026.4 514.1 L1028.3 512.4 L1030.1 510.8 L1031.9 509.2 L1033.7 507.6 L1035.5 505.9 L1037.3 504.3 L1039.1 502.7 L1040.8 501 L1042.6 499.4 L1044.3 497.8 L1046.1 496.1 L1047.8 494.5 L1049.5 492.9 L1051.2 491.2 L1052.9 489.6 L1054.6 488 L1056.2 486.4 L1057.9 484.7 L1059.5 483.1 L1061.1 481.5 L1062.8 479.8 L1064.4 478.2 L1066 476.6 L1067.5 475 L1069.1 473.3 L1070.7 471.7 L1072.2 470.1 L1073.7 468.4 L1075.2 466.8 L1076.7 465.2 L1078.2 463.5 L1079.7 461.9 L1081.2 460.3 L1082.6 458.6 L1084 457 L1085.5 455.4 L1086.9 453.8 L1088.3 452.1 L1089.6 450.5 L1091 448.9 L1092.4 447.2 L1093.7 445.6 L1095 444 L1096.3 442.4 L1097.6 440.7 L1098.9 439.1 L1100.2 437.5 L1101.4 435.8 L1102.6 434.2 L1103.8 432.6 L1105 430.9 L1106.2 429.3 L1107.4 427.7 L1108.6 426.1 L1109.7 424.4 L1110.8 422.8 L1111.9 421.2 L1113 419.5 L1114.1 417.9 L1115.2 416.3 L1116.2 414.6 L1117.2 413 L1118.2 411.4 L1119.2 409.8 L1120.2 408.1 L1121.2 406.5 L1122.1 404.9 L1123 403.2 L1123.9 401.6 L1124.8 400 L1125.7 398.3 L1126.6 396.7 L1127.4 395.1 L1128.2 393.5 L1129 391.8 L1129.8 390.2 L1130.6 388.6 L1131.4 386.9 L1132.1 385.3 L1132.8 383.7 L1133.5 382 L1134.2 380.4 L1134.9 378.8 L1135.5 377.2 L1136.2 375.5 L1136.8 373.9 L1137.4 372.3 L1138 370.6 L1138.5 369 L1139.1 367.4 L1139.6 365.7 L1140.1 364.1 L1140.6 362.5 L1141.1 360.9 L1141.5 359.2 L1141.9 357.6 L1142.4 356 L1142.8 354.3 L1143.1 352.7 L1143.5 351.1 L1143.8 349.4 L1144.2 347.8 L1144.5 346.2 L1144.8 344.6 L1145 342.9 L1145.3 341.3 L1145.5 339.7 L1145.7 338 L1145.9 336.4 L1146.1 334.8 L1146.3 333.1 L1146.4 331.5 L1146.5 329.9 L1146.6 328.2 L1146.7 326.6 L1146.8 325 L1146.8 323.4 L1146.8 321.7 L1146.8 320.1 L1146.8 318.5 L1146.8 316.8 L1146.8 315.2 L1146.7 313.6 L1146.6 312 L1146.5 310.3 L1146.4 308.7 L1146.3 307.1 L1146.1 305.4 L1145.9 303.8 L1145.7 302.2 L1145.5 300.5 L1145.3 298.9 L1145 297.3 L1144.8 295.7 L1144.5 294 L1144.2 292.4 L1143.8 290.8 L1143.5 289.1 L1143.1 287.5 L1142.8 285.9 L1142.4 284.2 L1141.9 282.6 L1141.5 281 L1141.1 279.4 L1140.6 277.7 L1140.1 276.1 L1139.6 274.5 L1139.1 272.8 L1138.5 271.2 L1138 269.6 L1137.4 267.9 L1136.8 266.3 L1136.2 264.7 L1135.5 263.1 L1134.9 261.4 L1134.2 259.8 L1133.5 258.2 L1132.8 256.5 L1132.1 254.9 L1131.4 253.3 L1130.6 251.6 L1129.8 250 L1129 248.4 L1128.2 246.8 L1127.4 245.1 L1126.6 243.5 L1125.7 241.9 L1124.8 240.2 L1123.9 238.6 L1123 237 L1122.1 235.3 L1121.2 233.7 L1120.2 232.1 L1119.2 230.5 L1118.2 228.8 L1117.2 227.2 L1116.2 225.6 L1115.2 223.9 L1114.1 222.3 L1113 220.7 L1111.9 219 L1110.8 217.4 L1109.7 215.8 L1108.6 214.2 L1107.4 212.5 L1106.2 210.9 L1105 209.3 L1103.8 207.6 L1102.6 206 L1101.4 204.4 L1100.2 202.7 L1098.9 201.1 L1097.6 199.5 L1096.3 197.9 L1095 196.2 L1093.7 194.6 L1092.4 193 L1091 191.3 L1089.6 189.7 L1088.3 188.1 L1086.9 186.4 L1085.5 184.8 L1084 183.2 L1082.6 181.6 L1081.2 179.9 L1079.7 178.3 L1078.2 176.7 L1076.7 175 L1075.2 173.4 L1073.7 171.8 L1072.2 170.1 L1070.7 168.5 L1069.1 166.9 L1067.5 165.3 L1066 163.6 L1064.4 162 L1062.8 160.4 L1061.1 158.7 L1059.5 157.1 L1057.9 155.5 L1056.2 153.8 L1054.6 152.2 L1052.9 150.6 L1051.2 149 L1049.5 147.3 L1047.8 145.7 L1046.1 144.1 L1044.3 142.4 L1042.6 140.8 L1040.8 139.2 L1039.1 137.5 L1037.3 135.9 L1035.5 134.3 L1033.7 132.7 L1031.9 131 L1030.1 129.4 L1028.3 127.8 L1026.4 126.1 L1024.6 124.5 L1022.7 122.9 L1020.9 121.2 L1019 119.6 L1017.1 118 L1015.2 116.4 L1013.4 114.7 L1011.4 113.1 L1009.5 111.5 L1007.6 109.8 L1005.7 108.2 L1003.7 106.6 L1001.8 104.9 L999.8 103.3 L997.9 101.7 L995.9 100.1 L993.9 98.4 L992 96.8 L990 95.2 L988 93.5 L986 91.9 L984 90.3 L982 88.6 L979.9 87 L977.9 85.4 L975.9 83.8 L973.8 82.1 L971.8 80.5 L969.7 78.9 L967.7 77.2 L965.6 75.6 L963.6 74 L961.5 72.3 L959.4 70.7 L957.4 69.1 L955.3 67.5 L953.2 65.8 L951.1 64.2 L949 62.6 L946.9 60.9 L944.8 59.3 L942.7 57.7 L940.6 56 L938.5 54.4 L936.4 52.8 L934.3 51.2 L932.1 49.5 L930 47.9 L927.9 46.3 L925.8 44.6 L923.7 43 L921.5 41.4 L919.4 39.7 L917.3 38.1 L915.1 36.5 L913 34.9 L910.9 33.2 L908.8 31.6 L906.6 30 L904.5 28.3"/><path d="M902.4 613.5 L904.1 611.9 L905.8 610.2 L907.5 608.6 L909.2 607 L910.9 605.4 L912.6 603.7 L914.3 602.1 L916 600.5 L917.7 598.8 L919.4 597.2 L921.1 595.6 L922.8 593.9 L924.5 592.3 L926.2 590.7 L927.9 589 L929.6 587.4 L931.3 585.8 L932.9 584.2 L934.6 582.5 L936.3 580.9 L938 579.3 L939.7 577.6 L941.3 576 L943 574.4 L944.7 572.8 L946.4 571.1 L948 569.5 L949.7 567.9 L951.3 566.2 L953 564.6 L954.6 563 L956.3 561.3 L957.9 559.7 L959.5 558.1 L961.2 556.5 L962.8 554.8 L964.4 553.2 L966 551.6 L967.6 549.9 L969.2 548.3 L970.9 546.7 L972.4 545 L974 543.4 L975.6 541.8 L977.2 540.1 L978.8 538.5 L980.3 536.9 L981.9 535.3 L983.5 533.6 L985 532 L986.6 530.4 L988.1 528.7 L989.6 527.1 L991.2 525.5 L992.7 523.9 L994.2 522.2 L995.7 520.6 L997.2 519 L998.7 517.3 L1000.2 515.7 L1001.6 514.1 L1003.1 512.4 L1004.6 510.8 L1006 509.2 L1007.4 507.6 L1008.9 505.9 L1010.3 504.3 L1011.7 502.7 L1013.1 501 L1014.5 499.4 L1015.9 497.8 L1017.3 496.1 L1018.7 494.5 L1020.1 492.9 L1021.4 491.2 L1022.8 489.6 L1024.1 488 L1025.4 486.4 L1026.8 484.7 L1028.1 483.1 L1029.4 481.5 L1030.7 479.8 L1032 478.2 L1033.2 476.6 L1034.5 475 L1035.7 473.3 L1037 471.7 L1038.2 470.1 L1039.4 468.4 L1040.7 466.8 L1041.9 465.2 L1043.1 463.5 L1044.2 461.9 L1045.4 460.3 L1046.6 458.6 L1047.7 457 L1048.8 455.4 L1050 453.8 L1051.1 452.1 L1052.2 450.5 L1053.3 448.9 L1054.4 447.2 L1055.4 445.6 L1056.5 444 L1057.5 442.4 L1058.6 440.7 L1059.6 439.1 L1060.6 437.5 L1061.6 435.8 L1062.6 434.2 L1063.5 432.6 L1064.5 430.9 L1065.5 429.3 L1066.4 427.7 L1067.3 426.1 L1068.2 424.4 L1069.1 422.8 L1070 421.2 L1070.9 419.5 L1071.7 417.9 L1072.6 416.3 L1073.4 414.6 L1074.2 413 L1075.1 411.4 L1075.8 409.8 L1076.6 408.1 L1077.4 406.5 L1078.2 404.9 L1078.9 403.2 L1079.6 401.6 L1080.3 400 L1081 398.3 L1081.7 396.7 L1082.4 395.1 L1083.1 393.5 L1083.7 391.8 L1084.3 390.2 L1085 388.6 L1085.6 386.9 L1086.2 385.3 L1086.7 383.7 L1087.3 382 L1087.8 380.4 L1088.4 378.8 L1088.9 377.2 L1089.4 375.5 L1089.9 373.9 L1090.4 372.3 L1090.8 370.6 L1091.3 369 L1091.7 367.4 L1092.1 365.7 L1092.5 364.1 L1092.9 362.5 L1093.3 360.9 L1093.7 359.2 L1094 357.6 L1094.4 356 L1094.7 354.3 L1095 352.7 L1095.3 351.1 L1095.5 349.4 L1095.8 347.8 L1096 346.2 L1096.3 344.6 L1096.5 342.9 L1096.7 341.3 L1096.9 339.7 L1097 338 L1097.2 336.4 L1097.3 334.8 L1097.5 333.1 L1097.6 331.5 L1097.7 329.9 L1097.8 328.2 L1097.8 326.6 L1097.9 325 L1097.9 323.4 L1097.9 321.7 L1098 320.1 L1097.9 318.5 L1097.9 316.8 L1097.9 315.2 L1097.8 313.6 L1097.8 312 L1097.7 310.3 L1097.6 308.7 L1097.5 307.1 L1097.3 305.4 L1097.2 303.8 L1097 302.2 L1096.9 300.5 L1096.7 298.9 L1096.5 297.3 L1096.3 295.7 L1096 294 L1095.8 292.4 L1095.5 290.8 L1095.3 289.1 L1095 287.5 L1094.7 285.9 L1094.4 284.2 L1094 282.6 L1093.7 281 L1093.3 279.4 L1092.9 277.7 L1092.5 276.1 L1092.1 274.5 L1091.7 272.8 L1091.3 271.2 L1090.8 269.6 L1090.4 267.9 L1089.9 266.3 L1089.4 264.7 L1088.9 263.1 L1088.4 261.4 L1087.8 259.8 L1087.3 258.2 L1086.7 256.5 L1086.2 254.9 L1085.6 253.3 L1085 251.6 L1084.3 250 L1083.7 248.4 L1083.1 246.8 L1082.4 245.1 L1081.7 243.5 L1081 241.9 L1080.3 240.2 L1079.6 238.6 L1078.9 237 L1078.2 235.3 L1077.4 233.7 L1076.6 232.1 L1075.8 230.5 L1075.1 228.8 L1074.2 227.2 L1073.4 225.6 L1072.6 223.9 L1071.7 222.3 L1070.9 220.7 L1070 219 L1069.1 217.4 L1068.2 215.8 L1067.3 214.2 L1066.4 212.5 L1065.5 210.9 L1064.5 209.3 L1063.5 207.6 L1062.6 206 L1061.6 204.4 L1060.6 202.7 L1059.6 201.1 L1058.6 199.5 L1057.5 197.9 L1056.5 196.2 L1055.4 194.6 L1054.4 193 L1053.3 191.3 L1052.2 189.7 L1051.1 188.1 L1050 186.4 L1048.8 184.8 L1047.7 183.2 L1046.6 181.6 L1045.4 179.9 L1044.2 178.3 L1043.1 176.7 L1041.9 175 L1040.7 173.4 L1039.4 171.8 L1038.2 170.1 L1037 168.5 L1035.7 166.9 L1034.5 165.3 L1033.2 163.6 L1032 162 L1030.7 160.4 L1029.4 158.7 L1028.1 157.1 L1026.8 155.5 L1025.4 153.8 L1024.1 152.2 L1022.8 150.6 L1021.4 149 L1020.1 147.3 L1018.7 145.7 L1017.3 144.1 L1015.9 142.4 L1014.5 140.8 L1013.1 139.2 L1011.7 137.5 L1010.3 135.9 L1008.9 134.3 L1007.4 132.7 L1006 131 L1004.6 129.4 L1003.1 127.8 L1001.6 126.1 L1000.2 124.5 L998.7 122.9 L997.2 121.2 L995.7 119.6 L994.2 118 L992.7 116.4 L991.2 114.7 L989.6 113.1 L988.1 111.5 L986.6 109.8 L985 108.2 L983.5 106.6 L981.9 104.9 L980.3 103.3 L978.8 101.7 L977.2 100.1 L975.6 98.4 L974 96.8 L972.4 95.2 L970.9 93.5 L969.2 91.9 L967.6 90.3 L966 88.6 L964.4 87 L962.8 85.4 L961.2 83.8 L959.5 82.1 L957.9 80.5 L956.3 78.9 L954.6 77.2 L953 75.6 L951.3 74 L949.7 72.3 L948 70.7 L946.4 69.1 L944.7 67.5 L943 65.8 L941.3 64.2 L939.7 62.6 L938 60.9 L936.3 59.3 L934.6 57.7 L932.9 56 L931.3 54.4 L929.6 52.8 L927.9 51.2 L926.2 49.5 L924.5 47.9 L922.8 46.3 L921.1 44.6 L919.4 43 L917.7 41.4 L916 39.7 L914.3 38.1 L912.6 36.5 L910.9 34.9 L909.2 33.2 L907.5 31.6 L905.8 30 L904.1 28.3"/><path d="M902.4 613.5 L903.6 611.9 L904.9 610.2 L906.2 608.6 L907.5 607 L908.7 605.4 L910 603.7 L911.3 602.1 L912.6 600.5 L913.9 598.8 L915.1 597.2 L916.4 595.6 L917.7 593.9 L919 592.3 L920.2 590.7 L921.5 589 L922.8 587.4 L924 585.8 L925.3 584.2 L926.6 582.5 L927.8 580.9 L929.1 579.3 L930.3 577.6 L931.6 576 L932.9 574.4 L934.1 572.8 L935.4 571.1 L936.6 569.5 L937.8 567.9 L939.1 566.2 L940.3 564.6 L941.6 563 L942.8 561.3 L944 559.7 L945.2 558.1 L946.5 556.5 L947.7 554.8 L948.9 553.2 L950.1 551.6 L951.3 549.9 L952.5 548.3 L953.7 546.7 L954.9 545 L956.1 543.4 L957.3 541.8 L958.5 540.1 L959.7 538.5 L960.8 536.9 L962 535.3 L963.2 533.6 L964.3 532 L965.5 530.4 L966.7 528.7 L967.8 527.1 L969 525.5 L970.1 523.9 L971.2 522.2 L972.3 520.6 L973.5 519 L974.6 517.3 L975.7 515.7 L976.8 514.1 L977.9 512.4 L979 510.8 L980.1 509.2 L981.2 507.6 L982.2 505.9 L983.3 504.3 L984.4 502.7 L985.4 501 L986.5 499.4 L987.5 497.8 L988.6 496.1 L989.6 494.5 L990.6 492.9 L991.7 491.2 L992.7 489.6 L993.7 488 L994.7 486.4 L995.7 484.7 L996.6 483.1 L997.6 481.5 L998.6 479.8 L999.6 478.2 L1000.5 476.6 L1001.5 475 L1002.4 473.3 L1003.3 471.7 L1004.3 470.1 L1005.2 468.4 L1006.1 466.8 L1007 465.2 L1007.9 463.5 L1008.8 461.9 L1009.6 460.3 L1010.5 458.6 L1011.4 457 L1012.2 455.4 L1013.1 453.8 L1013.9 452.1 L1014.7 450.5 L1015.5 448.9 L1016.4 447.2 L1017.2 445.6 L1018 444 L1018.7 442.4 L1019.5 440.7 L1020.3 439.1 L1021 437.5 L1021.8 435.8 L1022.5 434.2 L1023.2 432.6 L1024 430.9 L1024.7 429.3 L1025.4 427.7 L1026.1 426.1 L1026.8 424.4 L1027.4 422.8 L1028.1 421.2 L1028.8 419.5 L1029.4 417.9 L1030 416.3 L1030.7 414.6 L1031.3 413 L1031.9 411.4 L1032.5 409.8 L1033.1 408.1 L1033.6 406.5 L1034.2 404.9 L1034.8 403.2 L1035.3 401.6 L1035.8 400 L1036.4 398.3 L1036.9 396.7 L1037.4 395.1 L1037.9 393.5 L1038.4 391.8 L1038.8 390.2 L1039.3 388.6 L1039.8 386.9 L1040.2 385.3 L1040.6 383.7 L1041.1 382 L1041.5 380.4 L1041.9 378.8 L1042.3 377.2 L1042.6 375.5 L1043 373.9 L1043.4 372.3 L1043.7 370.6 L1044.1 369 L1044.4 367.4 L1044.7 365.7 L1045 364.1 L1045.3 362.5 L1045.6 360.9 L1045.8 359.2 L1046.1 357.6 L1046.4 356 L1046.6 354.3 L1046.8 352.7 L1047 351.1 L1047.2 349.4 L1047.4 347.8 L1047.6 346.2 L1047.8 344.6 L1048 342.9 L1048.1 341.3 L1048.2 339.7 L1048.4 338 L1048.5 336.4 L1048.6 334.8 L1048.7 333.1 L1048.8 331.5 L1048.8 329.9 L1048.9 328.2 L1049 326.6 L1049 325 L1049 323.4 L1049 321.7 L1049 320.1 L1049 318.5 L1049 316.8 L1049 315.2 L1049 313.6 L1048.9 312 L1048.8 310.3 L1048.8 308.7 L1048.7 307.1 L1048.6 305.4 L1048.5 303.8 L1048.4 302.2 L1048.2 300.5 L1048.1 298.9 L1048 297.3 L1047.8 295.7 L1047.6 294 L1047.4 292.4 L1047.2 290.8 L1047 289.1 L1046.8 287.5 L1046.6 285.9 L1046.4 284.2 L1046.1 282.6 L1045.8 281 L1045.6 279.4 L1045.3 277.7 L1045 276.1 L1044.7 274.5 L1044.4 272.8 L1044.1 271.2 L1043.7 269.6 L1043.4 267.9 L1043 266.3 L1042.6 264.7 L1042.3 263.1 L1041.9 261.4 L1041.5 259.8 L1041.1 258.2 L1040.6 256.5 L1040.2 254.9 L1039.8 253.3 L1039.3 251.6 L1038.8 250 L1038.4 248.4 L1037.9 246.8 L1037.4 245.1 L1036.9 243.5 L1036.4 241.9 L1035.8 240.2 L1035.3 238.6 L1034.8 237 L1034.2 235.3 L1033.6 233.7 L1033.1 232.1 L1032.5 230.5 L1031.9 228.8 L1031.3 227.2 L1030.7 225.6 L1030 223.9 L1029.4 222.3 L1028.8 220.7 L1028.1 219 L1027.4 217.4 L1026.8 215.8 L1026.1 214.2 L1025.4 212.5 L1024.7 210.9 L1024 209.3 L1023.2 207.6 L1022.5 206 L1021.8 204.4 L1021 202.7 L1020.3 201.1 L1019.5 199.5 L1018.7 197.9 L1018 196.2 L1017.2 194.6 L1016.4 193 L1015.5 191.3 L1014.7 189.7 L1013.9 188.1 L1013.1 186.4 L1012.2 184.8 L1011.4 183.2 L1010.5 181.6 L1009.6 179.9 L1008.8 178.3 L1007.9 176.7 L1007 175 L1006.1 173.4 L1005.2 171.8 L1004.3 170.1 L1003.3 168.5 L1002.4 166.9 L1001.5 165.3 L1000.5 163.6 L999.6 162 L998.6 160.4 L997.6 158.7 L996.6 157.1 L995.7 155.5 L994.7 153.8 L993.7 152.2 L992.7 150.6 L991.7 149 L990.6 147.3 L989.6 145.7 L988.6 144.1 L987.5 142.4 L986.5 140.8 L985.4 139.2 L984.4 137.5 L983.3 135.9 L982.2 134.3 L981.2 132.7 L980.1 131 L979 129.4 L977.9 127.8 L976.8 126.1 L975.7 124.5 L974.6 122.9 L973.5 121.2 L972.3 119.6 L971.2 118 L970.1 116.4 L969 114.7 L967.8 113.1 L966.7 111.5 L965.5 109.8 L964.3 108.2 L963.2 106.6 L962 104.9 L960.8 103.3 L959.7 101.7 L958.5 100.1 L957.3 98.4 L956.1 96.8 L954.9 95.2 L953.7 93.5 L952.5 91.9 L951.3 90.3 L950.1 88.6 L948.9 87 L947.7 85.4 L946.5 83.8 L945.2 82.1 L944 80.5 L942.8 78.9 L941.6 77.2 L940.3 75.6 L939.1 74 L937.8 72.3 L936.6 70.7 L935.4 69.1 L934.1 67.5 L932.9 65.8 L931.6 64.2 L930.3 62.6 L929.1 60.9 L927.8 59.3 L926.6 57.7 L925.3 56 L924 54.4 L922.8 52.8 L921.5 51.2 L920.2 49.5 L919 47.9 L917.7 46.3 L916.4 44.6 L915.1 43 L913.9 41.4 L912.6 39.7 L911.3 38.1 L910 36.5 L908.7 34.9 L907.5 33.2 L906.2 31.6 L904.9 30 L903.6 28.3"/><path d="M902.4 613.5 L903.2 611.9 L904.1 610.2 L904.9 608.6 L905.8 607 L906.6 605.4 L907.5 603.7 L908.3 602.1 L909.2 600.5 L910 598.8 L910.9 597.2 L911.7 595.6 L912.6 593.9 L913.4 592.3 L914.3 590.7 L915.1 589 L916 587.4 L916.8 585.8 L917.6 584.2 L918.5 582.5 L919.3 580.9 L920.2 579.3 L921 577.6 L921.8 576 L922.7 574.4 L923.5 572.8 L924.4 571.1 L925.2 569.5 L926 567.9 L926.8 566.2 L927.7 564.6 L928.5 563 L929.3 561.3 L930.1 559.7 L930.9 558.1 L931.8 556.5 L932.6 554.8 L933.4 553.2 L934.2 551.6 L935 549.9 L935.8 548.3 L936.6 546.7 L937.4 545 L938.2 543.4 L939 541.8 L939.8 540.1 L940.6 538.5 L941.3 536.9 L942.1 535.3 L942.9 533.6 L943.7 532 L944.5 530.4 L945.2 528.7 L946 527.1 L946.8 525.5 L947.5 523.9 L948.3 522.2 L949 520.6 L949.8 519 L950.5 517.3 L951.2 515.7 L952 514.1 L952.7 512.4 L953.5 510.8 L954.2 509.2 L954.9 507.6 L955.6 505.9 L956.3 504.3 L957 502.7 L957.7 501 L958.4 499.4 L959.1 497.8 L959.8 496.1 L960.5 494.5 L961.2 492.9 L961.9 491.2 L962.6 489.6 L963.2 488 L963.9 486.4 L964.6 484.7 L965.2 483.1 L965.9 481.5 L966.5 479.8 L967.2 478.2 L967.8 476.6 L968.4 475 L969 473.3 L969.7 471.7 L970.3 470.1 L970.9 468.4 L971.5 466.8 L972.1 465.2 L972.7 463.5 L973.3 461.9 L973.9 460.3 L974.5 458.6 L975 457 L975.6 455.4 L976.2 453.8 L976.7 452.1 L977.3 450.5 L977.8 448.9 L978.4 447.2 L978.9 445.6 L979.4 444 L979.9 442.4 L980.5 440.7 L981 439.1 L981.5 437.5 L982 435.8 L982.5 434.2 L982.9 432.6 L983.4 430.9 L983.9 429.3 L984.4 427.7 L984.8 426.1 L985.3 424.4 L985.7 422.8 L986.2 421.2 L986.6 419.5 L987 417.9 L987.5 416.3 L987.9 414.6 L988.3 413 L988.7 411.4 L989.1 409.8 L989.5 408.1 L989.9 406.5 L990.3 404.9 L990.6 403.2 L991 401.6 L991.3 400 L991.7 398.3 L992 396.7 L992.4 395.1 L992.7 393.5 L993 391.8 L993.3 390.2 L993.7 388.6 L994 386.9 L994.3 385.3 L994.5 383.7 L994.8 382 L995.1 380.4 L995.4 378.8 L995.6 377.2 L995.9 375.5 L996.1 373.9 L996.4 372.3 L996.6 370.6 L996.8 369 L997 367.4 L997.2 365.7 L997.4 364.1 L997.6 362.5 L997.8 360.9 L998 359.2 L998.2 357.6 L998.4 356 L998.5 354.3 L998.7 352.7 L998.8 351.1 L998.9 349.4 L999.1 347.8 L999.2 346.2 L999.3 344.6 L999.4 342.9 L999.5 341.3 L999.6 339.7 L999.7 338 L999.8 336.4 L999.8 334.8 L999.9 333.1 L1000 331.5 L1000 329.9 L1000.1 328.2 L1000.1 326.6 L1000.1 325 L1000.1 323.4 L1000.1 321.7 L1000.1 320.1 L1000.1 318.5 L1000.1 316.8 L1000.1 315.2 L1000.1 313.6 L1000.1 312 L1000 310.3 L1000 308.7 L999.9 307.1 L999.8 305.4 L999.8 303.8 L999.7 302.2 L999.6 300.5 L999.5 298.9 L999.4 297.3 L999.3 295.7 L999.2 294 L999.1 292.4 L998.9 290.8 L998.8 289.1 L998.7 287.5 L998.5 285.9 L998.4 284.2 L998.2 282.6 L998 281 L997.8 279.4 L997.6 277.7 L997.4 276.1 L997.2 274.5 L997 272.8 L996.8 271.2 L996.6 269.6 L996.4 267.9 L996.1 266.3 L995.9 264.7 L995.6 263.1 L995.4 261.4 L995.1 259.8 L994.8 258.2 L994.5 256.5 L994.3 254.9 L994 253.3 L993.7 251.6 L993.3 250 L993 248.4 L992.7 246.8 L992.4 245.1 L992 243.5 L991.7 241.9 L991.3 240.2 L991 238.6 L990.6 237 L990.3 235.3 L989.9 233.7 L989.5 232.1 L989.1 230.5 L988.7 228.8 L988.3 227.2 L987.9 225.6 L987.5 223.9 L987 222.3 L986.6 220.7 L986.2 219 L985.7 217.4 L985.3 215.8 L984.8 214.2 L984.4 212.5 L983.9 210.9 L983.4 209.3 L982.9 207.6 L982.5 206 L982 204.4 L981.5 202.7 L981 201.1 L980.5 199.5 L979.9 197.9 L979.4 196.2 L978.9 194.6 L978.4 193 L977.8 191.3 L977.3 189.7 L976.7 188.1 L976.2 186.4 L975.6 184.8 L975 183.2 L974.5 181.6 L973.9 179.9 L973.3 178.3 L972.7 176.7 L972.1 175 L971.5 173.4 L970.9 171.8 L970.3 170.1 L969.7 168.5 L969 166.9 L968.4 165.3 L967.8 163.6 L967.2 162 L966.5 160.4 L965.9 158.7 L965.2 157.1 L964.6 155.5 L963.9 153.8 L963.2 152.2 L962.6 150.6 L961.9 149 L961.2 147.3 L960.5 145.7 L959.8 144.1 L959.1 142.4 L958.4 140.8 L957.7 139.2 L957 137.5 L956.3 135.9 L955.6 134.3 L954.9 132.7 L954.2 131 L953.5 129.4 L952.7 127.8 L952 126.1 L951.2 124.5 L950.5 122.9 L949.8 121.2 L949 119.6 L948.3 118 L947.5 116.4 L946.8 114.7 L946 113.1 L945.2 111.5 L944.5 109.8 L943.7 108.2 L942.9 106.6 L942.1 104.9 L941.3 103.3 L940.6 101.7 L939.8 100.1 L939 98.4 L938.2 96.8 L937.4 95.2 L936.6 93.5 L935.8 91.9 L935 90.3 L934.2 88.6 L933.4 87 L932.6 85.4 L931.8 83.8 L930.9 82.1 L930.1 80.5 L929.3 78.9 L928.5 77.2 L927.7 75.6 L926.8 74 L926 72.3 L925.2 70.7 L924.4 69.1 L923.5 67.5 L922.7 65.8 L921.8 64.2 L921 62.6 L920.2 60.9 L919.3 59.3 L918.5 57.7 L917.6 56 L916.8 54.4 L916 52.8 L915.1 51.2 L914.3 49.5 L913.4 47.9 L912.6 46.3 L911.7 44.6 L910.9 43 L910 41.4 L909.2 39.7 L908.3 38.1 L907.5 36.5 L906.6 34.9 L905.8 33.2 L904.9 31.6 L904.1 30 L903.2 28.3"/><path d="M902.4 613.5 L902.8 611.9 L903.2 610.2 L903.6 608.6 L904.1 607 L904.5 605.4 L904.9 603.7 L905.3 602.1 L905.8 600.5 L906.2 598.8 L906.6 597.2 L907 595.6 L907.5 593.9 L907.9 592.3 L908.3 590.7 L908.7 589 L909.2 587.4 L909.6 585.8 L910 584.2 L910.4 582.5 L910.8 580.9 L911.3 579.3 L911.7 577.6 L912.1 576 L912.5 574.4 L912.9 572.8 L913.4 571.1 L913.8 569.5 L914.2 567.9 L914.6 566.2 L915 564.6 L915.4 563 L915.8 561.3 L916.2 559.7 L916.6 558.1 L917.1 556.5 L917.5 554.8 L917.9 553.2 L918.3 551.6 L918.7 549.9 L919.1 548.3 L919.5 546.7 L919.9 545 L920.3 543.4 L920.7 541.8 L921.1 540.1 L921.5 538.5 L921.8 536.9 L922.2 535.3 L922.6 533.6 L923 532 L923.4 530.4 L923.8 528.7 L924.2 527.1 L924.6 525.5 L924.9 523.9 L925.3 522.2 L925.7 520.6 L926.1 519 L926.4 517.3 L926.8 515.7 L927.2 514.1 L927.5 512.4 L927.9 510.8 L928.3 509.2 L928.6 507.6 L929 505.9 L929.3 504.3 L929.7 502.7 L930 501 L930.4 499.4 L930.7 497.8 L931.1 496.1 L931.4 494.5 L931.8 492.9 L932.1 491.2 L932.5 489.6 L932.8 488 L933.1 486.4 L933.5 484.7 L933.8 483.1 L934.1 481.5 L934.4 479.8 L934.8 478.2 L935.1 476.6 L935.4 475 L935.7 473.3 L936 471.7 L936.3 470.1 L936.6 468.4 L936.9 466.8 L937.2 465.2 L937.5 463.5 L937.8 461.9 L938.1 460.3 L938.4 458.6 L938.7 457 L939 455.4 L939.3 453.8 L939.5 452.1 L939.8 450.5 L940.1 448.9 L940.4 447.2 L940.6 445.6 L940.9 444 L941.1 442.4 L941.4 440.7 L941.7 439.1 L941.9 437.5 L942.2 435.8 L942.4 434.2 L942.6 432.6 L942.9 430.9 L943.1 429.3 L943.4 427.7 L943.6 426.1 L943.8 424.4 L944 422.8 L944.3 421.2 L944.5 419.5 L944.7 417.9 L944.9 416.3 L945.1 414.6 L945.3 413 L945.5 411.4 L945.7 409.8 L945.9 408.1 L946.1 406.5 L946.3 404.9 L946.5 403.2 L946.7 401.6 L946.8 400 L947 398.3 L947.2 396.7 L947.4 395.1 L947.5 393.5 L947.7 391.8 L947.8 390.2 L948 388.6 L948.2 386.9 L948.3 385.3 L948.4 383.7 L948.6 382 L948.7 380.4 L948.9 378.8 L949 377.2 L949.1 375.5 L949.2 373.9 L949.4 372.3 L949.5 370.6 L949.6 369 L949.7 367.4 L949.8 365.7 L949.9 364.1 L950 362.5 L950.1 360.9 L950.2 359.2 L950.3 357.6 L950.4 356 L950.4 354.3 L950.5 352.7 L950.6 351.1 L950.6 349.4 L950.7 347.8 L950.8 346.2 L950.8 344.6 L950.9 342.9 L950.9 341.3 L951 339.7 L951 338 L951.1 336.4 L951.1 334.8 L951.1 333.1 L951.2 331.5 L951.2 329.9 L951.2 328.2 L951.2 326.6 L951.2 325 L951.2 323.4 L951.2 321.7 L951.2 320.1 L951.2 318.5 L951.2 316.8 L951.2 315.2 L951.2 313.6 L951.2 312 L951.2 310.3 L951.2 308.7 L951.1 307.1 L951.1 305.4 L951.1 303.8 L951 302.2 L951 300.5 L950.9 298.9 L950.9 297.3 L950.8 295.7 L950.8 294 L950.7 292.4 L950.6 290.8 L950.6 289.1 L950.5 287.5 L950.4 285.9 L950.4 284.2 L950.3 282.6 L950.2 281 L950.1 279.4 L950 277.7 L949.9 276.1 L949.8 274.5 L949.7 272.8 L949.6 271.2 L949.5 269.6 L949.4 267.9 L949.2 266.3 L949.1 264.7 L949 263.1 L948.9 261.4 L948.7 259.8 L948.6 258.2 L948.4 256.5 L948.3 254.9 L948.2 253.3 L948 251.6 L947.8 250 L947.7 248.4 L947.5 246.8 L947.4 245.1 L947.2 243.5 L947 241.9 L946.8 240.2 L946.7 238.6 L946.5 237 L946.3 235.3 L946.1 233.7 L945.9 232.1 L945.7 230.5 L945.5 228.8 L945.3 227.2 L945.1 225.6 L944.9 223.9 L944.7 222.3 L944.5 220.7 L944.3 219 L944 217.4 L943.8 215.8 L943.6 214.2 L943.4 212.5 L943.1 210.9 L942.9 209.3 L942.6 207.6 L942.4 206 L942.2 204.4 L941.9 202.7 L941.7 201.1 L941.4 199.5 L941.1 197.9 L940.9 196.2 L940.6 194.6 L940.4 193 L940.1 191.3 L939.8 189.7 L939.5 188.1 L939.3 186.4 L939 184.8 L938.7 183.2 L938.4 181.6 L938.1 179.9 L937.8 178.3 L937.5 176.7 L937.2 175 L936.9 173.4 L936.6 171.8 L936.3 170.1 L936 168.5 L935.7 166.9 L935.4 165.3 L935.1 163.6 L934.8 162 L934.4 160.4 L934.1 158.7 L933.8 157.1 L933.5 155.5 L933.1 153.8 L932.8 152.2 L932.5 150.6 L932.1 149 L931.8 147.3 L931.4 145.7 L931.1 144.1 L930.7 142.4 L930.4 140.8 L930 139.2 L929.7 137.5 L929.3 135.9 L929 134.3 L928.6 132.7 L928.3 131 L927.9 129.4 L927.5 127.8 L927.2 126.1 L926.8 124.5 L926.4 122.9 L926.1 121.2 L925.7 119.6 L925.3 118 L924.9 116.4 L924.6 114.7 L924.2 113.1 L923.8 111.5 L923.4 109.8 L923 108.2 L922.6 106.6 L922.2 104.9 L921.8 103.3 L921.5 101.7 L921.1 100.1 L920.7 98.4 L920.3 96.8 L919.9 95.2 L919.5 93.5 L919.1 91.9 L918.7 90.3 L918.3 88.6 L917.9 87 L917.5 85.4 L917.1 83.8 L916.6 82.1 L916.2 80.5 L915.8 78.9 L915.4 77.2 L915 75.6 L914.6 74 L914.2 72.3 L913.8 70.7 L913.4 69.1 L912.9 67.5 L912.5 65.8 L912.1 64.2 L911.7 62.6 L911.3 60.9 L910.8 59.3 L910.4 57.7 L910 56 L909.6 54.4 L909.2 52.8 L908.7 51.2 L908.3 49.5 L907.9 47.9 L907.5 46.3 L907 44.6 L906.6 43 L906.2 41.4 L905.8 39.7 L905.3 38.1 L904.9 36.5 L904.5 34.9 L904.1 33.2 L903.6 31.6 L903.2 30 L902.8 28.3"/><path d="M902.4 613.5 L902.4 611.9 L902.4 610.2 L902.4 608.6 L902.4 607 L902.4 605.4 L902.4 603.7 L902.4 602.1 L902.4 600.5 L902.4 598.8 L902.4 597.2 L902.4 595.6 L902.4 593.9 L902.4 592.3 L902.4 590.7 L902.4 589 L902.4 587.4 L902.4 585.8 L902.4 584.2 L902.4 582.5 L902.4 580.9 L902.4 579.3 L902.4 577.6 L902.4 576 L902.4 574.4 L902.4 572.8 L902.4 571.1 L902.4 569.5 L902.4 567.9 L902.4 566.2 L902.4 564.6 L902.4 563 L902.4 561.3 L902.4 559.7 L902.4 558.1 L902.4 556.5 L902.4 554.8 L902.4 553.2 L902.4 551.6 L902.4 549.9 L902.4 548.3 L902.4 546.7 L902.4 545 L902.4 543.4 L902.4 541.8 L902.4 540.1 L902.4 538.5 L902.4 536.9 L902.4 535.3 L902.4 533.6 L902.4 532 L902.4 530.4 L902.4 528.7 L902.4 527.1 L902.4 525.5 L902.4 523.9 L902.4 522.2 L902.4 520.6 L902.4 519 L902.4 517.3 L902.4 515.7 L902.4 514.1 L902.4 512.4 L902.4 510.8 L902.4 509.2 L902.4 507.6 L902.4 505.9 L902.4 504.3 L902.4 502.7 L902.4 501 L902.4 499.4 L902.4 497.8 L902.4 496.1 L902.4 494.5 L902.4 492.9 L902.4 491.2 L902.4 489.6 L902.4 488 L902.4 486.4 L902.4 484.7 L902.4 483.1 L902.4 481.5 L902.4 479.8 L902.4 478.2 L902.4 476.6 L902.4 475 L902.4 473.3 L902.4 471.7 L902.4 470.1 L902.4 468.4 L902.4 466.8 L902.4 465.2 L902.4 463.5 L902.4 461.9 L902.4 460.3 L902.4 458.6 L902.4 457 L902.4 455.4 L902.4 453.8 L902.4 452.1 L902.4 450.5 L902.4 448.9 L902.4 447.2 L902.4 445.6 L902.4 444 L902.4 442.4 L902.4 440.7 L902.4 439.1 L902.4 437.5 L902.4 435.8 L902.4 434.2 L902.4 432.6 L902.4 430.9 L902.4 429.3 L902.4 427.7 L902.4 426.1 L902.4 424.4 L902.4 422.8 L902.4 421.2 L902.4 419.5 L902.4 417.9 L902.4 416.3 L902.4 414.6 L902.4 413 L902.4 411.4 L902.4 409.8 L902.4 408.1 L902.4 406.5 L902.4 404.9 L902.4 403.2 L902.4 401.6 L902.4 400 L902.4 398.3 L902.4 396.7 L902.4 395.1 L902.4 393.5 L902.4 391.8 L902.4 390.2 L902.4 388.6 L902.4 386.9 L902.4 385.3 L902.4 383.7 L902.4 382 L902.4 380.4 L902.4 378.8 L902.4 377.2 L902.4 375.5 L902.4 373.9 L902.4 372.3 L902.4 370.6 L902.4 369 L902.4 367.4 L902.4 365.7 L902.4 364.1 L902.4 362.5 L902.4 360.9 L902.4 359.2 L902.4 357.6 L902.4 356 L902.4 354.3 L902.4 352.7 L902.4 351.1 L902.4 349.4 L902.4 347.8 L902.4 346.2 L902.4 344.6 L902.4 342.9 L902.4 341.3 L902.4 339.7 L902.4 338 L902.4 336.4 L902.4 334.8 L902.4 333.1 L902.4 331.5 L902.4 329.9 L902.4 328.2 L902.4 326.6 L902.4 325 L902.4 323.4 L902.4 321.7 L902.4 320.1 L902.4 318.5 L902.4 316.8 L902.4 315.2 L902.4 313.6 L902.4 312 L902.4 310.3 L902.4 308.7 L902.4 307.1 L902.4 305.4 L902.4 303.8 L902.4 302.2 L902.4 300.5 L902.4 298.9 L902.4 297.3 L902.4 295.7 L902.4 294 L902.4 292.4 L902.4 290.8 L902.4 289.1 L902.4 287.5 L902.4 285.9 L902.4 284.2 L902.4 282.6 L902.4 281 L902.4 279.4 L902.4 277.7 L902.4 276.1 L902.4 274.5 L902.4 272.8 L902.4 271.2 L902.4 269.6 L902.4 267.9 L902.4 266.3 L902.4 264.7 L902.4 263.1 L902.4 261.4 L902.4 259.8 L902.4 258.2 L902.4 256.5 L902.4 254.9 L902.4 253.3 L902.4 251.6 L902.4 250 L902.4 248.4 L902.4 246.8 L902.4 245.1 L902.4 243.5 L902.4 241.9 L902.4 240.2 L902.4 238.6 L902.4 237 L902.4 235.3 L902.4 233.7 L902.4 232.1 L902.4 230.5 L902.4 228.8 L902.4 227.2 L902.4 225.6 L902.4 223.9 L902.4 222.3 L902.4 220.7 L902.4 219 L902.4 217.4 L902.4 215.8 L902.4 214.2 L902.4 212.5 L902.4 210.9 L902.4 209.3 L902.4 207.6 L902.4 206 L902.4 204.4 L902.4 202.7 L902.4 201.1 L902.4 199.5 L902.4 197.9 L902.4 196.2 L902.4 194.6 L902.4 193 L902.4 191.3 L902.4 189.7 L902.4 188.1 L902.4 186.4 L902.4 184.8 L902.4 183.2 L902.4 181.6 L902.4 179.9 L902.4 178.3 L902.4 176.7 L902.4 175 L902.4 173.4 L902.4 171.8 L902.4 170.1 L902.4 168.5 L902.4 166.9 L902.4 165.3 L902.4 163.6 L902.4 162 L902.4 160.4 L902.4 158.7 L902.4 157.1 L902.4 155.5 L902.4 153.8 L902.4 152.2 L902.4 150.6 L902.4 149 L902.4 147.3 L902.4 145.7 L902.4 144.1 L902.4 142.4 L902.4 140.8 L902.4 139.2 L902.4 137.5 L902.4 135.9 L902.4 134.3 L902.4 132.7 L902.4 131 L902.4 129.4 L902.4 127.8 L902.4 126.1 L902.4 124.5 L902.4 122.9 L902.4 121.2 L902.4 119.6 L902.4 118 L902.4 116.4 L902.4 114.7 L902.4 113.1 L902.4 111.5 L902.4 109.8 L902.4 108.2 L902.4 106.6 L902.4 104.9 L902.4 103.3 L902.4 101.7 L902.4 100.1 L902.4 98.4 L902.4 96.8 L902.4 95.2 L902.4 93.5 L902.4 91.9 L902.4 90.3 L902.4 88.6 L902.4 87 L902.4 85.4 L902.4 83.8 L902.4 82.1 L902.4 80.5 L902.4 78.9 L902.4 77.2 L902.4 75.6 L902.4 74 L902.4 72.3 L902.4 70.7 L902.4 69.1 L902.4 67.5 L902.4 65.8 L902.4 64.2 L902.4 62.6 L902.4 60.9 L902.4 59.3 L902.4 57.7 L902.4 56 L902.4 54.4 L902.4 52.8 L902.4 51.2 L902.4 49.5 L902.4 47.9 L902.4 46.3 L902.4 44.6 L902.4 43 L902.4 41.4 L902.4 39.7 L902.4 38.1 L902.4 36.5 L902.4 34.9 L902.4 33.2 L902.4 31.6 L902.4 30 L902.4 28.3"/><path d="M902.4 613.5 L901.9 611.9 L901.5 610.2 L901.1 608.6 L900.6 607 L900.2 605.4 L899.8 603.7 L899.4 602.1 L898.9 600.5 L898.5 598.8 L898.1 597.2 L897.7 595.6 L897.2 593.9 L896.8 592.3 L896.4 590.7 L896 589 L895.5 587.4 L895.1 585.8 L894.7 584.2 L894.3 582.5 L893.9 580.9 L893.4 579.3 L893 577.6 L892.6 576 L892.2 574.4 L891.8 572.8 L891.3 571.1 L890.9 569.5 L890.5 567.9 L890.1 566.2 L889.7 564.6 L889.3 563 L888.9 561.3 L888.5 559.7 L888.1 558.1 L887.6 556.5 L887.2 554.8 L886.8 553.2 L886.4 551.6 L886 549.9 L885.6 548.3 L885.2 546.7 L884.8 545 L884.4 543.4 L884 541.8 L883.6 540.1 L883.2 538.5 L882.9 536.9 L882.5 535.3 L882.1 533.6 L881.7 532 L881.3 530.4 L880.9 528.7 L880.5 527.1 L880.1 525.5 L879.8 523.9 L879.4 522.2 L879 520.6 L878.6 519 L878.3 517.3 L877.9 515.7 L877.5 514.1 L877.2 512.4 L876.8 510.8 L876.4 509.2 L876.1 507.6 L875.7 505.9 L875.4 504.3 L875 502.7 L874.7 501 L874.3 499.4 L874 497.8 L873.6 496.1 L873.3 494.5 L872.9 492.9 L872.6 491.2 L872.2 489.6 L871.9 488 L871.6 486.4 L871.2 484.7 L870.9 483.1 L870.6 481.5 L870.3 479.8 L869.9 478.2 L869.6 476.6 L869.3 475 L869 473.3 L868.7 471.7 L868.4 470.1 L868.1 468.4 L867.8 466.8 L867.5 465.2 L867.2 463.5 L866.9 461.9 L866.6 460.3 L866.3 458.6 L866 457 L865.7 455.4 L865.4 453.8 L865.2 452.1 L864.9 450.5 L864.6 448.9 L864.3 447.2 L864.1 445.6 L863.8 444 L863.6 442.4 L863.3 440.7 L863 439.1 L862.8 437.5 L862.5 435.8 L862.3 434.2 L862.1 432.6 L861.8 430.9 L861.6 429.3 L861.3 427.7 L861.1 426.1 L860.9 424.4 L860.7 422.8 L860.4 421.2 L860.2 419.5 L860 417.9 L859.8 416.3 L859.6 414.6 L859.4 413 L859.2 411.4 L859 409.8 L858.8 408.1 L858.6 406.5 L858.4 404.9 L858.2 403.2 L858 401.6 L857.9 400 L857.7 398.3 L857.5 396.7 L857.3 395.1 L857.2 393.5 L857 391.8 L856.9 390.2 L856.7 388.6 L856.5 386.9 L856.4 385.3 L856.3 383.7 L856.1 382 L856 380.4 L855.8 378.8 L855.7 377.2 L855.6 375.5 L855.5 373.9 L855.3 372.3 L855.2 370.6 L855.1 369 L855 367.4 L854.9 365.7 L854.8 364.1 L854.7 362.5 L854.6 360.9 L854.5 359.2 L854.4 357.6 L854.3 356 L854.3 354.3 L854.2 352.7 L854.1 351.1 L854.1 349.4 L854 347.8 L853.9 346.2 L853.9 344.6 L853.8 342.9 L853.8 341.3 L853.7 339.7 L853.7 338 L853.6 336.4 L853.6 334.8 L853.6 333.1 L853.5 331.5 L853.5 329.9 L853.5 328.2 L853.5 326.6 L853.5 325 L853.5 323.4 L853.5 321.7 L853.5 320.1 L853.5 318.5 L853.5 316.8 L853.5 315.2 L853.5 313.6 L853.5 312 L853.5 310.3 L853.5 308.7 L853.6 307.1 L853.6 305.4 L853.6 303.8 L853.7 302.2 L853.7 300.5 L853.8 298.9 L853.8 297.3 L853.9 295.7 L853.9 294 L854 292.4 L854.1 290.8 L854.1 289.1 L854.2 287.5 L854.3 285.9 L854.3 284.2 L854.4 282.6 L854.5 281 L854.6 279.4 L854.7 277.7 L854.8 276.1 L854.9 274.5 L855 272.8 L855.1 271.2 L855.2 269.6 L855.3 267.9 L855.5 266.3 L855.6 264.7 L855.7 263.1 L855.8 261.4 L856 259.8 L856.1 258.2 L856.3 256.5 L856.4 254.9 L856.5 253.3 L856.7 251.6 L856.9 250 L857 248.4 L857.2 246.8 L857.3 245.1 L857.5 243.5 L857.7 241.9 L857.9 240.2 L858 238.6 L858.2 237 L858.4 235.3 L858.6 233.7 L858.8 232.1 L859 230.5 L859.2 228.8 L859.4 227.2 L859.6 225.6 L859.8 223.9 L860 222.3 L860.2 220.7 L860.4 219 L860.7 217.4 L860.9 215.8 L861.1 214.2 L861.3 212.5 L861.6 210.9 L861.8 209.3 L862.1 207.6 L862.3 206 L862.5 204.4 L862.8 202.7 L863 201.1 L863.3 199.5 L863.6 197.9 L863.8 196.2 L864.1 194.6 L864.3 193 L864.6 191.3 L864.9 189.7 L865.2 188.1 L865.4 186.4 L865.7 184.8 L866 183.2 L866.3 181.6 L866.6 179.9 L866.9 178.3 L867.2 176.7 L867.5 175 L867.8 173.4 L868.1 171.8 L868.4 170.1 L868.7 168.5 L869 166.9 L869.3 165.3 L869.6 163.6 L869.9 162 L870.3 160.4 L870.6 158.7 L870.9 157.1 L871.2 155.5 L871.6 153.8 L871.9 152.2 L872.2 150.6 L872.6 149 L872.9 147.3 L873.3 145.7 L873.6 144.1 L874 142.4 L874.3 140.8 L874.7 139.2 L875 137.5 L875.4 135.9 L875.7 134.3 L876.1 132.7 L876.4 131 L876.8 129.4 L877.2 127.8 L877.5 126.1 L877.9 124.5 L878.3 122.9 L878.6 121.2 L879 119.6 L879.4 118 L879.8 116.4 L880.1 114.7 L880.5 113.1 L880.9 111.5 L881.3 109.8 L881.7 108.2 L882.1 106.6 L882.5 104.9 L882.9 103.3 L883.2 101.7 L883.6 100.1 L884 98.4 L884.4 96.8 L884.8 95.2 L885.2 93.5 L885.6 91.9 L886 90.3 L886.4 88.6 L886.8 87 L887.2 85.4 L887.6 83.8 L888.1 82.1 L888.5 80.5 L888.9 78.9 L889.3 77.2 L889.7 75.6 L890.1 74 L890.5 72.3 L890.9 70.7 L891.3 69.1 L891.8 67.5 L892.2 65.8 L892.6 64.2 L893 62.6 L893.4 60.9 L893.9 59.3 L894.3 57.7 L894.7 56 L895.1 54.4 L895.5 52.8 L896 51.2 L896.4 49.5 L896.8 47.9 L897.2 46.3 L897.7 44.6 L898.1 43 L898.5 41.4 L898.9 39.7 L899.4 38.1 L899.8 36.5 L900.2 34.9 L900.6 33.2 L901.1 31.6 L901.5 30 L901.9 28.3"/><path d="M902.4 613.5 L901.5 611.9 L900.6 610.2 L899.8 608.6 L898.9 607 L898.1 605.4 L897.2 603.7 L896.4 602.1 L895.5 600.5 L894.7 598.8 L893.8 597.2 L893 595.6 L892.1 593.9 L891.3 592.3 L890.4 590.7 L889.6 589 L888.7 587.4 L887.9 585.8 L887.1 584.2 L886.2 582.5 L885.4 580.9 L884.5 579.3 L883.7 577.6 L882.9 576 L882 574.4 L881.2 572.8 L880.3 571.1 L879.5 569.5 L878.7 567.9 L877.9 566.2 L877 564.6 L876.2 563 L875.4 561.3 L874.6 559.7 L873.8 558.1 L872.9 556.5 L872.1 554.8 L871.3 553.2 L870.5 551.6 L869.7 549.9 L868.9 548.3 L868.1 546.7 L867.3 545 L866.5 543.4 L865.7 541.8 L864.9 540.1 L864.1 538.5 L863.4 536.9 L862.6 535.3 L861.8 533.6 L861 532 L860.2 530.4 L859.5 528.7 L858.7 527.1 L857.9 525.5 L857.2 523.9 L856.4 522.2 L855.7 520.6 L854.9 519 L854.2 517.3 L853.5 515.7 L852.7 514.1 L852 512.4 L851.2 510.8 L850.5 509.2 L849.8 507.6 L849.1 505.9 L848.4 504.3 L847.7 502.7 L847 501 L846.3 499.4 L845.6 497.8 L844.9 496.1 L844.2 494.5 L843.5 492.9 L842.8 491.2 L842.1 489.6 L841.5 488 L840.8 486.4 L840.1 484.7 L839.5 483.1 L838.8 481.5 L838.2 479.8 L837.5 478.2 L836.9 476.6 L836.3 475 L835.7 473.3 L835 471.7 L834.4 470.1 L833.8 468.4 L833.2 466.8 L832.6 465.2 L832 463.5 L831.4 461.9 L830.8 460.3 L830.2 458.6 L829.7 457 L829.1 455.4 L828.5 453.8 L828 452.1 L827.4 450.5 L826.9 448.9 L826.3 447.2 L825.8 445.6 L825.3 444 L824.8 442.4 L824.2 440.7 L823.7 439.1 L823.2 437.5 L822.7 435.8 L822.2 434.2 L821.8 432.6 L821.3 430.9 L820.8 429.3 L820.3 427.7 L819.9 426.1 L819.4 424.4 L819 422.8 L818.5 421.2 L818.1 419.5 L817.7 417.9 L817.2 416.3 L816.8 414.6 L816.4 413 L816 411.4 L815.6 409.8 L815.2 408.1 L814.8 406.5 L814.4 404.9 L814.1 403.2 L813.7 401.6 L813.4 400 L813 398.3 L812.7 396.7 L812.3 395.1 L812 393.5 L811.7 391.8 L811.4 390.2 L811 388.6 L810.7 386.9 L810.4 385.3 L810.2 383.7 L809.9 382 L809.6 380.4 L809.3 378.8 L809.1 377.2 L808.8 375.5 L808.6 373.9 L808.3 372.3 L808.1 370.6 L807.9 369 L807.7 367.4 L807.5 365.7 L807.3 364.1 L807.1 362.5 L806.9 360.9 L806.7 359.2 L806.5 357.6 L806.3 356 L806.2 354.3 L806 352.7 L805.9 351.1 L805.8 349.4 L805.6 347.8 L805.5 346.2 L805.4 344.6 L805.3 342.9 L805.2 341.3 L805.1 339.7 L805 338 L804.9 336.4 L804.9 334.8 L804.8 333.1 L804.7 331.5 L804.7 329.9 L804.6 328.2 L804.6 326.6 L804.6 325 L804.6 323.4 L804.6 321.7 L804.6 320.1 L804.6 318.5 L804.6 316.8 L804.6 315.2 L804.6 313.6 L804.6 312 L804.7 310.3 L804.7 308.7 L804.8 307.1 L804.9 305.4 L804.9 303.8 L805 302.2 L805.1 300.5 L805.2 298.9 L805.3 297.3 L805.4 295.7 L805.5 294 L805.6 292.4 L805.8 290.8 L805.9 289.1 L806 287.5 L806.2 285.9 L806.3 284.2 L806.5 282.6 L806.7 281 L806.9 279.4 L807.1 277.7 L807.3 276.1 L807.5 274.5 L807.7 272.8 L807.9 271.2 L808.1 269.6 L808.3 267.9 L808.6 266.3 L808.8 264.7 L809.1 263.1 L809.3 261.4 L809.6 259.8 L809.9 258.2 L810.2 256.5 L810.4 254.9 L810.7 253.3 L811 251.6 L811.4 250 L811.7 248.4 L812 246.8 L812.3 245.1 L812.7 243.5 L813 241.9 L813.4 240.2 L813.7 238.6 L814.1 237 L814.4 235.3 L814.8 233.7 L815.2 232.1 L815.6 230.5 L816 228.8 L816.4 227.2 L816.8 225.6 L817.2 223.9 L817.7 222.3 L818.1 220.7 L818.5 219 L819 217.4 L819.4 215.8 L819.9 214.2 L820.3 212.5 L820.8 210.9 L821.3 209.3 L821.8 207.6 L822.2 206 L822.7 204.4 L823.2 202.7 L823.7 201.1 L824.2 199.5 L824.8 197.9 L825.3 196.2 L825.8 194.6 L826.3 193 L826.9 191.3 L827.4 189.7 L828 188.1 L828.5 186.4 L829.1 184.8 L829.7 183.2 L830.2 181.6 L830.8 179.9 L831.4 178.3 L832 176.7 L832.6 175 L833.2 173.4 L833.8 171.8 L834.4 170.1 L835 168.5 L835.7 166.9 L836.3 165.3 L836.9 163.6 L837.5 162 L838.2 160.4 L838.8 158.7 L839.5 157.1 L840.1 155.5 L840.8 153.8 L841.5 152.2 L842.1 150.6 L842.8 149 L843.5 147.3 L844.2 145.7 L844.9 144.1 L845.6 142.4 L846.3 140.8 L847 139.2 L847.7 137.5 L848.4 135.9 L849.1 134.3 L849.8 132.7 L850.5 131 L851.2 129.4 L852 127.8 L852.7 126.1 L853.5 124.5 L854.2 122.9 L854.9 121.2 L855.7 119.6 L856.4 118 L857.2 116.4 L857.9 114.7 L858.7 113.1 L859.5 111.5 L860.2 109.8 L861 108.2 L861.8 106.6 L862.6 104.9 L863.4 103.3 L864.1 101.7 L864.9 100.1 L865.7 98.4 L866.5 96.8 L867.3 95.2 L868.1 93.5 L868.9 91.9 L869.7 90.3 L870.5 88.6 L871.3 87 L872.1 85.4 L872.9 83.8 L873.8 82.1 L874.6 80.5 L875.4 78.9 L876.2 77.2 L877 75.6 L877.9 74 L878.7 72.3 L879.5 70.7 L880.3 69.1 L881.2 67.5 L882 65.8 L882.9 64.2 L883.7 62.6 L884.5 60.9 L885.4 59.3 L886.2 57.7 L887.1 56 L887.9 54.4 L888.7 52.8 L889.6 51.2 L890.4 49.5 L891.3 47.9 L892.1 46.3 L893 44.6 L893.8 43 L894.7 41.4 L895.5 39.7 L896.4 38.1 L897.2 36.5 L898.1 34.9 L898.9 33.2 L899.8 31.6 L900.6 30 L901.5 28.3"/><path d="M902.4 613.5 L901.1 611.9 L899.8 610.2 L898.5 608.6 L897.2 607 L896 605.4 L894.7 603.7 L893.4 602.1 L892.1 600.5 L890.8 598.8 L889.6 597.2 L888.3 595.6 L887 593.9 L885.7 592.3 L884.5 590.7 L883.2 589 L881.9 587.4 L880.7 585.8 L879.4 584.2 L878.1 582.5 L876.9 580.9 L875.6 579.3 L874.4 577.6 L873.1 576 L871.8 574.4 L870.6 572.8 L869.3 571.1 L868.1 569.5 L866.9 567.9 L865.6 566.2 L864.4 564.6 L863.1 563 L861.9 561.3 L860.7 559.7 L859.5 558.1 L858.2 556.5 L857 554.8 L855.8 553.2 L854.6 551.6 L853.4 549.9 L852.2 548.3 L851 546.7 L849.8 545 L848.6 543.4 L847.4 541.8 L846.2 540.1 L845 538.5 L843.9 536.9 L842.7 535.3 L841.5 533.6 L840.4 532 L839.2 530.4 L838 528.7 L836.9 527.1 L835.7 525.5 L834.6 523.9 L833.5 522.2 L832.4 520.6 L831.2 519 L830.1 517.3 L829 515.7 L827.9 514.1 L826.8 512.4 L825.7 510.8 L824.6 509.2 L823.5 507.6 L822.5 505.9 L821.4 504.3 L820.3 502.7 L819.3 501 L818.2 499.4 L817.2 497.8 L816.1 496.1 L815.1 494.5 L814.1 492.9 L813 491.2 L812 489.6 L811 488 L810 486.4 L809 484.7 L808.1 483.1 L807.1 481.5 L806.1 479.8 L805.1 478.2 L804.2 476.6 L803.2 475 L802.3 473.3 L801.4 471.7 L800.4 470.1 L799.5 468.4 L798.6 466.8 L797.7 465.2 L796.8 463.5 L795.9 461.9 L795.1 460.3 L794.2 458.6 L793.3 457 L792.5 455.4 L791.6 453.8 L790.8 452.1 L790 450.5 L789.2 448.9 L788.3 447.2 L787.5 445.6 L786.7 444 L786 442.4 L785.2 440.7 L784.4 439.1 L783.7 437.5 L782.9 435.8 L782.2 434.2 L781.5 432.6 L780.7 430.9 L780 429.3 L779.3 427.7 L778.6 426.1 L777.9 424.4 L777.3 422.8 L776.6 421.2 L775.9 419.5 L775.3 417.9 L774.7 416.3 L774 414.6 L773.4 413 L772.8 411.4 L772.2 409.8 L771.6 408.1 L771.1 406.5 L770.5 404.9 L769.9 403.2 L769.4 401.6 L768.9 400 L768.3 398.3 L767.8 396.7 L767.3 395.1 L766.8 393.5 L766.3 391.8 L765.9 390.2 L765.4 388.6 L764.9 386.9 L764.5 385.3 L764.1 383.7 L763.6 382 L763.2 380.4 L762.8 378.8 L762.4 377.2 L762.1 375.5 L761.7 373.9 L761.3 372.3 L761 370.6 L760.6 369 L760.3 367.4 L760 365.7 L759.7 364.1 L759.4 362.5 L759.1 360.9 L758.9 359.2 L758.6 357.6 L758.3 356 L758.1 354.3 L757.9 352.7 L757.7 351.1 L757.5 349.4 L757.3 347.8 L757.1 346.2 L756.9 344.6 L756.7 342.9 L756.6 341.3 L756.5 339.7 L756.3 338 L756.2 336.4 L756.1 334.8 L756 333.1 L755.9 331.5 L755.9 329.9 L755.8 328.2 L755.7 326.6 L755.7 325 L755.7 323.4 L755.7 321.7 L755.7 320.1 L755.7 318.5 L755.7 316.8 L755.7 315.2 L755.7 313.6 L755.8 312 L755.9 310.3 L755.9 308.7 L756 307.1 L756.1 305.4 L756.2 303.8 L756.3 302.2 L756.5 300.5 L756.6 298.9 L756.7 297.3 L756.9 295.7 L757.1 294 L757.3 292.4 L757.5 290.8 L757.7 289.1 L757.9 287.5 L758.1 285.9 L758.3 284.2 L758.6 282.6 L758.9 281 L759.1 279.4 L759.4 277.7 L759.7 276.1 L760 274.5 L760.3 272.8 L760.6 271.2 L761 269.6 L761.3 267.9 L761.7 266.3 L762.1 264.7 L762.4 263.1 L762.8 261.4 L763.2 259.8 L763.6 258.2 L764.1 256.5 L764.5 254.9 L764.9 253.3 L765.4 251.6 L765.9 250 L766.3 248.4 L766.8 246.8 L767.3 245.1 L767.8 243.5 L768.3 241.9 L768.9 240.2 L769.4 238.6 L769.9 237 L770.5 235.3 L771.1 233.7 L771.6 232.1 L772.2 230.5 L772.8 228.8 L773.4 227.2 L774 225.6 L774.7 223.9 L775.3 222.3 L775.9 220.7 L776.6 219 L777.3 217.4 L777.9 215.8 L778.6 214.2 L779.3 212.5 L780 210.9 L780.7 209.3 L781.5 207.6 L782.2 206 L782.9 204.4 L783.7 202.7 L784.4 201.1 L785.2 199.5 L786 197.9 L786.7 196.2 L787.5 194.6 L788.3 193 L789.2 191.3 L790 189.7 L790.8 188.1 L791.6 186.4 L792.5 184.8 L793.3 183.2 L794.2 181.6 L795.1 179.9 L795.9 178.3 L796.8 176.7 L797.7 175 L798.6 173.4 L799.5 171.8 L800.4 170.1 L801.4 168.5 L802.3 166.9 L803.2 165.3 L804.2 163.6 L805.1 162 L806.1 160.4 L807.1 158.7 L808.1 157.1 L809 155.5 L810 153.8 L811 152.2 L812 150.6 L813 149 L814.1 147.3 L815.1 145.7 L816.1 144.1 L817.2 142.4 L818.2 140.8 L819.3 139.2 L820.3 137.5 L821.4 135.9 L822.5 134.3 L823.5 132.7 L824.6 131 L825.7 129.4 L826.8 127.8 L827.9 126.1 L829 124.5 L830.1 122.9 L831.2 121.2 L832.4 119.6 L833.5 118 L834.6 116.4 L835.7 114.7 L836.9 113.1 L838 111.5 L839.2 109.8 L840.4 108.2 L841.5 106.6 L842.7 104.9 L843.9 103.3 L845 101.7 L846.2 100.1 L847.4 98.4 L848.6 96.8 L849.8 95.2 L851 93.5 L852.2 91.9 L853.4 90.3 L854.6 88.6 L855.8 87 L857 85.4 L858.2 83.8 L859.5 82.1 L860.7 80.5 L861.9 78.9 L863.1 77.2 L864.4 75.6 L865.6 74 L866.9 72.3 L868.1 70.7 L869.3 69.1 L870.6 67.5 L871.8 65.8 L873.1 64.2 L874.4 62.6 L875.6 60.9 L876.9 59.3 L878.1 57.7 L879.4 56 L880.7 54.4 L881.9 52.8 L883.2 51.2 L884.5 49.5 L885.7 47.9 L887 46.3 L888.3 44.6 L889.6 43 L890.8 41.4 L892.1 39.7 L893.4 38.1 L894.7 36.5 L896 34.9 L897.2 33.2 L898.5 31.6 L899.8 30 L901.1 28.3"/><path d="M902.4 613.5 L900.6 611.9 L898.9 610.2 L897.2 608.6 L895.5 607 L893.8 605.4 L892.1 603.7 L890.4 602.1 L888.7 600.5 L887 598.8 L885.3 597.2 L883.6 595.6 L881.9 593.9 L880.2 592.3 L878.5 590.7 L876.8 589 L875.1 587.4 L873.4 585.8 L871.8 584.2 L870.1 582.5 L868.4 580.9 L866.7 579.3 L865 577.6 L863.4 576 L861.7 574.4 L860 572.8 L858.3 571.1 L856.7 569.5 L855 567.9 L853.4 566.2 L851.7 564.6 L850.1 563 L848.4 561.3 L846.8 559.7 L845.2 558.1 L843.5 556.5 L841.9 554.8 L840.3 553.2 L838.7 551.6 L837.1 549.9 L835.5 548.3 L833.8 546.7 L832.3 545 L830.7 543.4 L829.1 541.8 L827.5 540.1 L825.9 538.5 L824.4 536.9 L822.8 535.3 L821.2 533.6 L819.7 532 L818.1 530.4 L816.6 528.7 L815.1 527.1 L813.5 525.5 L812 523.9 L810.5 522.2 L809 520.6 L807.5 519 L806 517.3 L804.5 515.7 L803.1 514.1 L801.6 512.4 L800.1 510.8 L798.7 509.2 L797.3 507.6 L795.8 505.9 L794.4 504.3 L793 502.7 L791.6 501 L790.2 499.4 L788.8 497.8 L787.4 496.1 L786 494.5 L784.6 492.9 L783.3 491.2 L781.9 489.6 L780.6 488 L779.3 486.4 L777.9 484.7 L776.6 483.1 L775.3 481.5 L774 479.8 L772.7 478.2 L771.5 476.6 L770.2 475 L769 473.3 L767.7 471.7 L766.5 470.1 L765.3 468.4 L764 466.8 L762.8 465.2 L761.6 463.5 L760.5 461.9 L759.3 460.3 L758.1 458.6 L757 457 L755.9 455.4 L754.7 453.8 L753.6 452.1 L752.5 450.5 L751.4 448.9 L750.3 447.2 L749.3 445.6 L748.2 444 L747.2 442.4 L746.1 440.7 L745.1 439.1 L744.1 437.5 L743.1 435.8 L742.1 434.2 L741.2 432.6 L740.2 430.9 L739.2 429.3 L738.3 427.7 L737.4 426.1 L736.5 424.4 L735.6 422.8 L734.7 421.2 L733.8 419.5 L733 417.9 L732.1 416.3 L731.3 414.6 L730.5 413 L729.6 411.4 L728.9 409.8 L728.1 408.1 L727.3 406.5 L726.5 404.9 L725.8 403.2 L725.1 401.6 L724.4 400 L723.7 398.3 L723 396.7 L722.3 395.1 L721.6 393.5 L721 391.8 L720.4 390.2 L719.7 388.6 L719.1 386.9 L718.5 385.3 L718 383.7 L717.4 382 L716.9 380.4 L716.3 378.8 L715.8 377.2 L715.3 375.5 L714.8 373.9 L714.3 372.3 L713.9 370.6 L713.4 369 L713 367.4 L712.6 365.7 L712.2 364.1 L711.8 362.5 L711.4 360.9 L711 359.2 L710.7 357.6 L710.3 356 L710 354.3 L709.7 352.7 L709.4 351.1 L709.2 349.4 L708.9 347.8 L708.7 346.2 L708.4 344.6 L708.2 342.9 L708 341.3 L707.8 339.7 L707.7 338 L707.5 336.4 L707.4 334.8 L707.2 333.1 L707.1 331.5 L707 329.9 L706.9 328.2 L706.9 326.6 L706.8 325 L706.8 323.4 L706.8 321.7 L706.8 320.1 L706.8 318.5 L706.8 316.8 L706.8 315.2 L706.9 313.6 L706.9 312 L707 310.3 L707.1 308.7 L707.2 307.1 L707.4 305.4 L707.5 303.8 L707.7 302.2 L707.8 300.5 L708 298.9 L708.2 297.3 L708.4 295.7 L708.7 294 L708.9 292.4 L709.2 290.8 L709.4 289.1 L709.7 287.5 L710 285.9 L710.3 284.2 L710.7 282.6 L711 281 L711.4 279.4 L711.8 277.7 L712.2 276.1 L712.6 274.5 L713 272.8 L713.4 271.2 L713.9 269.6 L714.3 267.9 L714.8 266.3 L715.3 264.7 L715.8 263.1 L716.3 261.4 L716.9 259.8 L717.4 258.2 L718 256.5 L718.5 254.9 L719.1 253.3 L719.7 251.6 L720.4 250 L721 248.4 L721.6 246.8 L722.3 245.1 L723 243.5 L723.7 241.9 L724.4 240.2 L725.1 238.6 L725.8 237 L726.5 235.3 L727.3 233.7 L728.1 232.1 L728.9 230.5 L729.6 228.8 L730.5 227.2 L731.3 225.6 L732.1 223.9 L733 222.3 L733.8 220.7 L734.7 219 L735.6 217.4 L736.5 215.8 L737.4 214.2 L738.3 212.5 L739.2 210.9 L740.2 209.3 L741.2 207.6 L742.1 206 L743.1 204.4 L744.1 202.7 L745.1 201.1 L746.1 199.5 L747.2 197.9 L748.2 196.2 L749.3 194.6 L750.3 193 L751.4 191.3 L752.5 189.7 L753.6 188.1 L754.7 186.4 L755.9 184.8 L757 183.2 L758.1 181.6 L759.3 179.9 L760.5 178.3 L761.6 176.7 L762.8 175 L764 173.4 L765.3 171.8 L766.5 170.1 L767.7 168.5 L769 166.9 L770.2 165.3 L771.5 163.6 L772.7 162 L774 160.4 L775.3 158.7 L776.6 157.1 L777.9 155.5 L779.3 153.8 L780.6 152.2 L781.9 150.6 L783.3 149 L784.6 147.3 L786 145.7 L787.4 144.1 L788.8 142.4 L790.2 140.8 L791.6 139.2 L793 137.5 L794.4 135.9 L795.8 134.3 L797.3 132.7 L798.7 131 L800.1 129.4 L801.6 127.8 L803.1 126.1 L804.5 124.5 L806 122.9 L807.5 121.2 L809 119.6 L810.5 118 L812 116.4 L813.5 114.7 L815.1 113.1 L816.6 111.5 L818.1 109.8 L819.7 108.2 L821.2 106.6 L822.8 104.9 L824.4 103.3 L825.9 101.7 L827.5 100.1 L829.1 98.4 L830.7 96.8 L832.3 95.2 L833.8 93.5 L835.5 91.9 L837.1 90.3 L838.7 88.6 L840.3 87 L841.9 85.4 L843.5 83.8 L845.2 82.1 L846.8 80.5 L848.4 78.9 L850.1 77.2 L851.7 75.6 L853.4 74 L855 72.3 L856.7 70.7 L858.3 69.1 L860 67.5 L861.7 65.8 L863.4 64.2 L865 62.6 L866.7 60.9 L868.4 59.3 L870.1 57.7 L871.8 56 L873.4 54.4 L875.1 52.8 L876.8 51.2 L878.5 49.5 L880.2 47.9 L881.9 46.3 L883.6 44.6 L885.3 43 L887 41.4 L888.7 39.7 L890.4 38.1 L892.1 36.5 L893.8 34.9 L895.5 33.2 L897.2 31.6 L898.9 30 L900.6 28.3"/><path d="M902.4 613.5 L900.2 611.9 L898.1 610.2 L895.9 608.6 L893.8 607 L891.7 605.4 L889.6 603.7 L887.4 602.1 L885.3 600.5 L883.2 598.8 L881 597.2 L878.9 595.6 L876.8 593.9 L874.7 592.3 L872.6 590.7 L870.4 589 L868.3 587.4 L866.2 585.8 L864.1 584.2 L862 582.5 L859.9 580.9 L857.8 579.3 L855.7 577.6 L853.6 576 L851.5 574.4 L849.4 572.8 L847.3 571.1 L845.3 569.5 L843.2 567.9 L841.1 566.2 L839.1 564.6 L837 563 L835 561.3 L832.9 559.7 L830.9 558.1 L828.8 556.5 L826.8 554.8 L824.8 553.2 L822.7 551.6 L820.7 549.9 L818.7 548.3 L816.7 546.7 L814.7 545 L812.7 543.4 L810.8 541.8 L808.8 540.1 L806.8 538.5 L804.9 536.9 L802.9 535.3 L801 533.6 L799 532 L797.1 530.4 L795.2 528.7 L793.3 527.1 L791.3 525.5 L789.5 523.9 L787.6 522.2 L785.7 520.6 L783.8 519 L782 517.3 L780.1 515.7 L778.3 514.1 L776.4 512.4 L774.6 510.8 L772.8 509.2 L771 507.6 L769.2 505.9 L767.4 504.3 L765.6 502.7 L763.9 501 L762.1 499.4 L760.4 497.8 L758.6 496.1 L756.9 494.5 L755.2 492.9 L753.5 491.2 L751.8 489.6 L750.1 488 L748.5 486.4 L746.8 484.7 L745.2 483.1 L743.6 481.5 L741.9 479.8 L740.3 478.2 L738.7 476.6 L737.2 475 L735.6 473.3 L734 471.7 L732.5 470.1 L731 468.4 L729.5 466.8 L728 465.2 L726.5 463.5 L725 461.9 L723.5 460.3 L722.1 458.6 L720.7 457 L719.2 455.4 L717.8 453.8 L716.4 452.1 L715.1 450.5 L713.7 448.9 L712.3 447.2 L711 445.6 L709.7 444 L708.4 442.4 L707.1 440.7 L705.8 439.1 L704.5 437.5 L703.3 435.8 L702.1 434.2 L700.9 432.6 L699.7 430.9 L698.5 429.3 L697.3 427.7 L696.1 426.1 L695 424.4 L693.9 422.8 L692.8 421.2 L691.7 419.5 L690.6 417.9 L689.5 416.3 L688.5 414.6 L687.5 413 L686.5 411.4 L685.5 409.8 L684.5 408.1 L683.5 406.5 L682.6 404.9 L681.7 403.2 L680.8 401.6 L679.9 400 L679 398.3 L678.1 396.7 L677.3 395.1 L676.5 393.5 L675.7 391.8 L674.9 390.2 L674.1 388.6 L673.3 386.9 L672.6 385.3 L671.9 383.7 L671.2 382 L670.5 380.4 L669.8 378.8 L669.2 377.2 L668.5 375.5 L667.9 373.9 L667.3 372.3 L666.7 370.6 L666.2 369 L665.6 367.4 L665.1 365.7 L664.6 364.1 L664.1 362.5 L663.6 360.9 L663.2 359.2 L662.8 357.6 L662.3 356 L661.9 354.3 L661.6 352.7 L661.2 351.1 L660.9 349.4 L660.5 347.8 L660.2 346.2 L659.9 344.6 L659.7 342.9 L659.4 341.3 L659.2 339.7 L659 338 L658.8 336.4 L658.6 334.8 L658.4 333.1 L658.3 331.5 L658.2 329.9 L658.1 328.2 L658 326.6 L657.9 325 L657.9 323.4 L657.9 321.7 L657.9 320.1 L657.9 318.5 L657.9 316.8 L657.9 315.2 L658 313.6 L658.1 312 L658.2 310.3 L658.3 308.7 L658.4 307.1 L658.6 305.4 L658.8 303.8 L659 302.2 L659.2 300.5 L659.4 298.9 L659.7 297.3 L659.9 295.7 L660.2 294 L660.5 292.4 L660.9 290.8 L661.2 289.1 L661.6 287.5 L661.9 285.9 L662.3 284.2 L662.8 282.6 L663.2 281 L663.6 279.4 L664.1 277.7 L664.6 276.1 L665.1 274.5 L665.6 272.8 L666.2 271.2 L666.7 269.6 L667.3 267.9 L667.9 266.3 L668.5 264.7 L669.2 263.1 L669.8 261.4 L670.5 259.8 L671.2 258.2 L671.9 256.5 L672.6 254.9 L673.3 253.3 L674.1 251.6 L674.9 250 L675.7 248.4 L676.5 246.8 L677.3 245.1 L678.1 243.5 L679 241.9 L679.9 240.2 L680.8 238.6 L681.7 237 L682.6 235.3 L683.5 233.7 L684.5 232.1 L685.5 230.5 L686.5 228.8 L687.5 227.2 L688.5 225.6 L689.5 223.9 L690.6 222.3 L691.7 220.7 L692.8 219 L693.9 217.4 L695 215.8 L696.1 214.2 L697.3 212.5 L698.5 210.9 L699.7 209.3 L700.9 207.6 L702.1 206 L703.3 204.4 L704.5 202.7 L705.8 201.1 L707.1 199.5 L708.4 197.9 L709.7 196.2 L711 194.6 L712.3 193 L713.7 191.3 L715.1 189.7 L716.4 188.1 L717.8 186.4 L719.2 184.8 L720.7 183.2 L722.1 181.6 L723.5 179.9 L725 178.3 L726.5 176.7 L728 175 L729.5 173.4 L731 171.8 L732.5 170.1 L734 168.5 L735.6 166.9 L737.2 165.3 L738.7 163.6 L740.3 162 L741.9 160.4 L743.6 158.7 L745.2 157.1 L746.8 155.5 L748.5 153.8 L750.1 152.2 L751.8 150.6 L753.5 149 L755.2 147.3 L756.9 145.7 L758.6 144.1 L760.4 142.4 L762.1 140.8 L763.9 139.2 L765.6 137.5 L767.4 135.9 L769.2 134.3 L771 132.7 L772.8 131 L774.6 129.4 L776.4 127.8 L778.3 126.1 L780.1 124.5 L782 122.9 L783.8 121.2 L785.7 119.6 L787.6 118 L789.5 116.4 L791.3 114.7 L793.3 113.1 L795.2 111.5 L797.1 109.8 L799 108.2 L801 106.6 L802.9 104.9 L804.9 103.3 L806.8 101.7 L808.8 100.1 L810.8 98.4 L812.7 96.8 L814.7 95.2 L816.7 93.5 L818.7 91.9 L820.7 90.3 L822.7 88.6 L824.8 87 L826.8 85.4 L828.8 83.8 L830.9 82.1 L832.9 80.5 L835 78.9 L837 77.2 L839.1 75.6 L841.1 74 L843.2 72.3 L845.3 70.7 L847.3 69.1 L849.4 67.5 L851.5 65.8 L853.6 64.2 L855.7 62.6 L857.8 60.9 L859.9 59.3 L862 57.7 L864.1 56 L866.2 54.4 L868.3 52.8 L870.4 51.2 L872.6 49.5 L874.7 47.9 L876.8 46.3 L878.9 44.6 L881 43 L883.2 41.4 L885.3 39.7 L887.4 38.1 L889.6 36.5 L891.7 34.9 L893.8 33.2 L895.9 31.6 L898.1 30 L900.2 28.3"/><path d="M902.4 613.5 L899.8 611.9 L897.2 610.2 L894.7 608.6 L892.1 607 L889.6 605.4 L887 603.7 L884.4 602.1 L881.9 600.5 L879.3 598.8 L876.8 597.2 L874.2 595.6 L871.7 593.9 L869.1 592.3 L866.6 590.7 L864.1 589 L861.5 587.4 L859 585.8 L856.5 584.2 L853.9 582.5 L851.4 580.9 L848.9 579.3 L846.4 577.6 L843.9 576 L841.3 574.4 L838.8 572.8 L836.3 571.1 L833.9 569.5 L831.4 567.9 L828.9 566.2 L826.4 564.6 L823.9 563 L821.5 561.3 L819 559.7 L816.6 558.1 L814.1 556.5 L811.7 554.8 L809.3 553.2 L806.8 551.6 L804.4 549.9 L802 548.3 L799.6 546.7 L797.2 545 L794.8 543.4 L792.4 541.8 L790.1 540.1 L787.7 538.5 L785.4 536.9 L783 535.3 L780.7 533.6 L778.4 532 L776 530.4 L773.7 528.7 L771.4 527.1 L769.1 525.5 L766.9 523.9 L764.6 522.2 L762.4 520.6 L760.1 519 L757.9 517.3 L755.6 515.7 L753.4 514.1 L751.2 512.4 L749 510.8 L746.9 509.2 L744.7 507.6 L742.6 505.9 L740.4 504.3 L738.3 502.7 L736.2 501 L734.1 499.4 L732 497.8 L729.9 496.1 L727.8 494.5 L725.8 492.9 L723.7 491.2 L721.7 489.6 L719.7 488 L717.7 486.4 L715.7 484.7 L713.8 483.1 L711.8 481.5 L709.9 479.8 L707.9 478.2 L706 476.6 L704.1 475 L702.3 473.3 L700.4 471.7 L698.5 470.1 L696.7 468.4 L694.9 466.8 L693.1 465.2 L691.3 463.5 L689.5 461.9 L687.8 460.3 L686 458.6 L684.3 457 L682.6 455.4 L680.9 453.8 L679.2 452.1 L677.6 450.5 L676 448.9 L674.3 447.2 L672.7 445.6 L671.1 444 L669.6 442.4 L668 440.7 L666.5 439.1 L665 437.5 L663.5 435.8 L662 434.2 L660.6 432.6 L659.1 430.9 L657.7 429.3 L656.3 427.7 L654.9 426.1 L653.5 424.4 L652.2 422.8 L650.9 421.2 L649.5 419.5 L648.3 417.9 L647 416.3 L645.7 414.6 L644.5 413 L643.3 411.4 L642.1 409.8 L640.9 408.1 L639.8 406.5 L638.6 404.9 L637.5 403.2 L636.4 401.6 L635.4 400 L634.3 398.3 L633.3 396.7 L632.3 395.1 L631.3 393.5 L630.3 391.8 L629.4 390.2 L628.4 388.6 L627.5 386.9 L626.6 385.3 L625.8 383.7 L624.9 382 L624.1 380.4 L623.3 378.8 L622.5 377.2 L621.8 375.5 L621 373.9 L620.3 372.3 L619.6 370.6 L618.9 369 L618.3 367.4 L617.7 365.7 L617.1 364.1 L616.5 362.5 L615.9 360.9 L615.4 359.2 L614.8 357.6 L614.3 356 L613.9 354.3 L613.4 352.7 L613 351.1 L612.6 349.4 L612.2 347.8 L611.8 346.2 L611.5 344.6 L611.1 342.9 L610.8 341.3 L610.6 339.7 L610.3 338 L610.1 336.4 L609.9 334.8 L609.7 333.1 L609.5 331.5 L609.4 329.9 L609.2 328.2 L609.1 326.6 L609.1 325 L609 323.4 L609 321.7 L609 320.1 L609 318.5 L609 316.8 L609.1 315.2 L609.1 313.6 L609.2 312 L609.4 310.3 L609.5 308.7 L609.7 307.1 L609.9 305.4 L610.1 303.8 L610.3 302.2 L610.6 300.5 L610.8 298.9 L611.1 297.3 L611.5 295.7 L611.8 294 L612.2 292.4 L612.6 290.8 L613 289.1 L613.4 287.5 L613.9 285.9 L614.3 284.2 L614.8 282.6 L615.4 281 L615.9 279.4 L616.5 277.7 L617.1 276.1 L617.7 274.5 L618.3 272.8 L618.9 271.2 L619.6 269.6 L620.3 267.9 L621 266.3 L621.8 264.7 L622.5 263.1 L623.3 261.4 L624.1 259.8 L624.9 258.2 L625.8 256.5 L626.6 254.9 L627.5 253.3 L628.4 251.6 L629.4 250 L630.3 248.4 L631.3 246.8 L632.3 245.1 L633.3 243.5 L634.3 241.9 L635.4 240.2 L636.4 238.6 L637.5 237 L638.6 235.3 L639.8 233.7 L640.9 232.1 L642.1 230.5 L643.3 228.8 L644.5 227.2 L645.7 225.6 L647 223.9 L648.3 222.3 L649.5 220.7 L650.9 219 L652.2 217.4 L653.5 215.8 L654.9 214.2 L656.3 212.5 L657.7 210.9 L659.1 209.3 L660.6 207.6 L662 206 L663.5 204.4 L665 202.7 L666.5 201.1 L668 199.5 L669.6 197.9 L671.1 196.2 L672.7 194.6 L674.3 193 L676 191.3 L677.6 189.7 L679.2 188.1 L680.9 186.4 L682.6 184.8 L684.3 183.2 L686 181.6 L687.8 179.9 L689.5 178.3 L691.3 176.7 L693.1 175 L694.9 173.4 L696.7 171.8 L698.5 170.1 L700.4 168.5 L702.3 166.9 L704.1 165.3 L706 163.6 L707.9 162 L709.9 160.4 L711.8 158.7 L713.8 157.1 L715.7 155.5 L717.7 153.8 L719.7 152.2 L721.7 150.6 L723.7 149 L725.8 147.3 L727.8 145.7 L729.9 144.1 L732 142.4 L734.1 140.8 L736.2 139.2 L738.3 137.5 L740.4 135.9 L742.6 134.3 L744.7 132.7 L746.9 131 L749 129.4 L751.2 127.8 L753.4 126.1 L755.6 124.5 L757.9 122.9 L760.1 121.2 L762.4 119.6 L764.6 118 L766.9 116.4 L769.1 114.7 L771.4 113.1 L773.7 111.5 L776 109.8 L778.4 108.2 L780.7 106.6 L783 104.9 L785.4 103.3 L787.7 101.7 L790.1 100.1 L792.4 98.4 L794.8 96.8 L797.2 95.2 L799.6 93.5 L802 91.9 L804.4 90.3 L806.8 88.6 L809.3 87 L811.7 85.4 L814.1 83.8 L816.6 82.1 L819 80.5 L821.5 78.9 L823.9 77.2 L826.4 75.6 L828.9 74 L831.4 72.3 L833.9 70.7 L836.3 69.1 L838.8 67.5 L841.3 65.8 L843.9 64.2 L846.4 62.6 L848.9 60.9 L851.4 59.3 L853.9 57.7 L856.5 56 L859 54.4 L861.5 52.8 L864.1 51.2 L866.6 49.5 L869.1 47.9 L871.7 46.3 L874.2 44.6 L876.8 43 L879.3 41.4 L881.9 39.7 L884.4 38.1 L887 36.5 L889.6 34.9 L892.1 33.2 L894.7 31.6 L897.2 30 L899.8 28.3"/><path d="M902.4 613.5 L899.4 611.9 L896.4 610.2 L893.4 608.6 L890.4 607 L887.4 605.4 L884.4 603.7 L881.5 602.1 L878.5 600.5 L875.5 598.8 L872.5 597.2 L869.5 595.6 L866.6 593.9 L863.6 592.3 L860.6 590.7 L857.7 589 L854.7 587.4 L851.8 585.8 L848.8 584.2 L845.9 582.5 L842.9 580.9 L840 579.3 L837 577.6 L834.1 576 L831.2 574.4 L828.3 572.8 L825.3 571.1 L822.4 569.5 L819.5 567.9 L816.6 566.2 L813.8 564.6 L810.9 563 L808 561.3 L805.1 559.7 L802.3 558.1 L799.4 556.5 L796.6 554.8 L793.7 553.2 L790.9 551.6 L788.1 549.9 L785.3 548.3 L782.5 546.7 L779.7 545 L776.9 543.4 L774.1 541.8 L771.4 540.1 L768.6 538.5 L765.9 536.9 L763.1 535.3 L760.4 533.6 L757.7 532 L755 530.4 L752.3 528.7 L749.6 527.1 L746.9 525.5 L744.3 523.9 L741.6 522.2 L739 520.6 L736.4 519 L733.8 517.3 L731.2 515.7 L728.6 514.1 L726.1 512.4 L723.5 510.8 L721 509.2 L718.4 507.6 L715.9 505.9 L713.4 504.3 L710.9 502.7 L708.5 501 L706 499.4 L703.6 497.8 L701.2 496.1 L698.7 494.5 L696.3 492.9 L694 491.2 L691.6 489.6 L689.3 488 L686.9 486.4 L684.6 484.7 L682.3 483.1 L680 481.5 L677.8 479.8 L675.5 478.2 L673.3 476.6 L671.1 475 L668.9 473.3 L666.7 471.7 L664.6 470.1 L662.4 468.4 L660.3 466.8 L658.2 465.2 L656.1 463.5 L654.1 461.9 L652 460.3 L650 458.6 L648 457 L646 455.4 L644 453.8 L642.1 452.1 L640.1 450.5 L638.2 448.9 L636.3 447.2 L634.5 445.6 L632.6 444 L630.8 442.4 L629 440.7 L627.2 439.1 L625.4 437.5 L623.7 435.8 L622 434.2 L620.3 432.6 L618.6 430.9 L616.9 429.3 L615.3 427.7 L613.7 426.1 L612.1 424.4 L610.5 422.8 L608.9 421.2 L607.4 419.5 L605.9 417.9 L604.4 416.3 L603 414.6 L601.5 413 L600.1 411.4 L598.7 409.8 L597.4 408.1 L596 406.5 L594.7 404.9 L593.4 403.2 L592.1 401.6 L590.9 400 L589.6 398.3 L588.4 396.7 L587.3 395.1 L586.1 393.5 L585 391.8 L583.9 390.2 L582.8 388.6 L581.7 386.9 L580.7 385.3 L579.7 383.7 L578.7 382 L577.7 380.4 L576.8 378.8 L575.9 377.2 L575 375.5 L574.1 373.9 L573.3 372.3 L572.5 370.6 L571.7 369 L571 367.4 L570.2 365.7 L569.5 364.1 L568.8 362.5 L568.2 360.9 L567.5 359.2 L566.9 357.6 L566.3 356 L565.8 354.3 L565.3 352.7 L564.7 351.1 L564.3 349.4 L563.8 347.8 L563.4 346.2 L563 344.6 L562.6 342.9 L562.3 341.3 L561.9 339.7 L561.6 338 L561.4 336.4 L561.1 334.8 L560.9 333.1 L560.7 331.5 L560.5 329.9 L560.4 328.2 L560.3 326.6 L560.2 325 L560.1 323.4 L560.1 321.7 L560.1 320.1 L560.1 318.5 L560.1 316.8 L560.2 315.2 L560.3 313.6 L560.4 312 L560.5 310.3 L560.7 308.7 L560.9 307.1 L561.1 305.4 L561.4 303.8 L561.6 302.2 L561.9 300.5 L562.3 298.9 L562.6 297.3 L563 295.7 L563.4 294 L563.8 292.4 L564.3 290.8 L564.7 289.1 L565.3 287.5 L565.8 285.9 L566.3 284.2 L566.9 282.6 L567.5 281 L568.2 279.4 L568.8 277.7 L569.5 276.1 L570.2 274.5 L571 272.8 L571.7 271.2 L572.5 269.6 L573.3 267.9 L574.1 266.3 L575 264.7 L575.9 263.1 L576.8 261.4 L577.7 259.8 L578.7 258.2 L579.7 256.5 L580.7 254.9 L581.7 253.3 L582.8 251.6 L583.9 250 L585 248.4 L586.1 246.8 L587.3 245.1 L588.4 243.5 L589.6 241.9 L590.9 240.2 L592.1 238.6 L593.4 237 L594.7 235.3 L596 233.7 L597.4 232.1 L598.7 230.5 L600.1 228.8 L601.5 227.2 L603 225.6 L604.4 223.9 L605.9 222.3 L607.4 220.7 L608.9 219 L610.5 217.4 L612.1 215.8 L613.7 214.2 L615.3 212.5 L616.9 210.9 L618.6 209.3 L620.3 207.6 L622 206 L623.7 204.4 L625.4 202.7 L627.2 201.1 L629 199.5 L630.8 197.9 L632.6 196.2 L634.5 194.6 L636.3 193 L638.2 191.3 L640.1 189.7 L642.1 188.1 L644 186.4 L646 184.8 L648 183.2 L650 181.6 L652 179.9 L654.1 178.3 L656.1 176.7 L658.2 175 L660.3 173.4 L662.4 171.8 L664.6 170.1 L666.7 168.5 L668.9 166.9 L671.1 165.3 L673.3 163.6 L675.5 162 L677.8 160.4 L680 158.7 L682.3 157.1 L684.6 155.5 L686.9 153.8 L689.3 152.2 L691.6 150.6 L694 149 L696.3 147.3 L698.7 145.7 L701.2 144.1 L703.6 142.4 L706 140.8 L708.5 139.2 L710.9 137.5 L713.4 135.9 L715.9 134.3 L718.4 132.7 L721 131 L723.5 129.4 L726.1 127.8 L728.6 126.1 L731.2 124.5 L733.8 122.9 L736.4 121.2 L739 119.6 L741.6 118 L744.3 116.4 L746.9 114.7 L749.6 113.1 L752.3 111.5 L755 109.8 L757.7 108.2 L760.4 106.6 L763.1 104.9 L765.9 103.3 L768.6 101.7 L771.4 100.1 L774.1 98.4 L776.9 96.8 L779.7 95.2 L782.5 93.5 L785.3 91.9 L788.1 90.3 L790.9 88.6 L793.7 87 L796.6 85.4 L799.4 83.8 L802.3 82.1 L805.1 80.5 L808 78.9 L810.9 77.2 L813.8 75.6 L816.6 74 L819.5 72.3 L822.4 70.7 L825.3 69.1 L828.3 67.5 L831.2 65.8 L834.1 64.2 L837 62.6 L840 60.9 L842.9 59.3 L845.9 57.7 L848.8 56 L851.8 54.4 L854.7 52.8 L857.7 51.2 L860.6 49.5 L863.6 47.9 L866.6 46.3 L869.5 44.6 L872.5 43 L875.5 41.4 L878.5 39.7 L881.5 38.1 L884.4 36.5 L887.4 34.9 L890.4 33.2 L893.4 31.6 L896.4 30 L899.4 28.3"/><path d="M902.4 613.5 L898.9 611.9 L895.5 610.2 L892.1 608.6 L888.7 607 L885.3 605.4 L881.9 603.7 L878.5 602.1 L875.1 600.5 L871.7 598.8 L868.3 597.2 L864.9 595.6 L861.5 593.9 L858.1 592.3 L854.7 590.7 L851.3 589 L847.9 587.4 L844.5 585.8 L841.2 584.2 L837.8 582.5 L834.4 580.9 L831.1 579.3 L827.7 577.6 L824.4 576 L821 574.4 L817.7 572.8 L814.3 571.1 L811 569.5 L807.7 567.9 L804.4 566.2 L801.1 564.6 L797.8 563 L794.5 561.3 L791.2 559.7 L788 558.1 L784.7 556.5 L781.5 554.8 L778.2 553.2 L775 551.6 L771.8 549.9 L768.6 548.3 L765.3 546.7 L762.2 545 L759 543.4 L755.8 541.8 L752.6 540.1 L749.5 538.5 L746.4 536.9 L743.2 535.3 L740.1 533.6 L737 532 L733.9 530.4 L730.9 528.7 L727.8 527.1 L724.7 525.5 L721.7 523.9 L718.7 522.2 L715.7 520.6 L712.7 519 L709.7 517.3 L706.8 515.7 L703.8 514.1 L700.9 512.4 L697.9 510.8 L695 509.2 L692.2 507.6 L689.3 505.9 L686.4 504.3 L683.6 502.7 L680.8 501 L678 499.4 L675.2 497.8 L672.4 496.1 L669.7 494.5 L666.9 492.9 L664.2 491.2 L661.5 489.6 L658.8 488 L656.2 486.4 L653.5 484.7 L650.9 483.1 L648.3 481.5 L645.7 479.8 L643.1 478.2 L640.6 476.6 L638.1 475 L635.6 473.3 L633.1 471.7 L630.6 470.1 L628.2 468.4 L625.7 466.8 L623.3 465.2 L620.9 463.5 L618.6 461.9 L616.2 460.3 L613.9 458.6 L611.6 457 L609.4 455.4 L607.1 453.8 L604.9 452.1 L602.7 450.5 L600.5 448.9 L598.3 447.2 L596.2 445.6 L594.1 444 L592 442.4 L589.9 440.7 L587.9 439.1 L585.9 437.5 L583.9 435.8 L581.9 434.2 L580 432.6 L578 430.9 L576.1 429.3 L574.3 427.7 L572.4 426.1 L570.6 424.4 L568.8 422.8 L567 421.2 L565.3 419.5 L563.6 417.9 L561.9 416.3 L560.2 414.6 L558.6 413 L556.9 411.4 L555.4 409.8 L553.8 408.1 L552.3 406.5 L550.7 404.9 L549.3 403.2 L547.8 401.6 L546.4 400 L545 398.3 L543.6 396.7 L542.2 395.1 L540.9 393.5 L539.6 391.8 L538.4 390.2 L537.1 388.6 L535.9 386.9 L534.7 385.3 L533.6 383.7 L532.5 382 L531.4 380.4 L530.3 378.8 L529.3 377.2 L528.2 375.5 L527.3 373.9 L526.3 372.3 L525.4 370.6 L524.5 369 L523.6 367.4 L522.8 365.7 L522 364.1 L521.2 362.5 L520.4 360.9 L519.7 359.2 L519 357.6 L518.3 356 L517.7 354.3 L517.1 352.7 L516.5 351.1 L516 349.4 L515.4 347.8 L515 346.2 L514.5 344.6 L514.1 342.9 L513.7 341.3 L513.3 339.7 L513 338 L512.6 336.4 L512.4 334.8 L512.1 333.1 L511.9 331.5 L511.7 329.9 L511.5 328.2 L511.4 326.6 L511.3 325 L511.2 323.4 L511.2 321.7 L511.2 320.1 L511.2 318.5 L511.2 316.8 L511.3 315.2 L511.4 313.6 L511.5 312 L511.7 310.3 L511.9 308.7 L512.1 307.1 L512.4 305.4 L512.6 303.8 L513 302.2 L513.3 300.5 L513.7 298.9 L514.1 297.3 L514.5 295.7 L515 294 L515.4 292.4 L516 290.8 L516.5 289.1 L517.1 287.5 L517.7 285.9 L518.3 284.2 L519 282.6 L519.7 281 L520.4 279.4 L521.2 277.7 L522 276.1 L522.8 274.5 L523.6 272.8 L524.5 271.2 L525.4 269.6 L526.3 267.9 L527.3 266.3 L528.2 264.7 L529.3 263.1 L530.3 261.4 L531.4 259.8 L532.5 258.2 L533.6 256.5 L534.7 254.9 L535.9 253.3 L537.1 251.6 L538.4 250 L539.6 248.4 L540.9 246.8 L542.2 245.1 L543.6 243.5 L545 241.9 L546.4 240.2 L547.8 238.6 L549.3 237 L550.7 235.3 L552.3 233.7 L553.8 232.1 L555.4 230.5 L556.9 228.8 L558.6 227.2 L560.2 225.6 L561.9 223.9 L563.6 222.3 L565.3 220.7 L567 219 L568.8 217.4 L570.6 215.8 L572.4 214.2 L574.3 212.5 L576.1 210.9 L578 209.3 L580 207.6 L581.9 206 L583.9 204.4 L585.9 202.7 L587.9 201.1 L589.9 199.5 L592 197.9 L594.1 196.2 L596.2 194.6 L598.3 193 L600.5 191.3 L602.7 189.7 L604.9 188.1 L607.1 186.4 L609.4 184.8 L611.6 183.2 L613.9 181.6 L616.2 179.9 L618.6 178.3 L620.9 176.7 L623.3 175 L625.7 173.4 L628.2 171.8 L630.6 170.1 L633.1 168.5 L635.6 166.9 L638.1 165.3 L640.6 163.6 L643.1 162 L645.7 160.4 L648.3 158.7 L650.9 157.1 L653.5 155.5 L656.2 153.8 L658.8 152.2 L661.5 150.6 L664.2 149 L666.9 147.3 L669.7 145.7 L672.4 144.1 L675.2 142.4 L678 140.8 L680.8 139.2 L683.6 137.5 L686.4 135.9 L689.3 134.3 L692.2 132.7 L695 131 L697.9 129.4 L700.9 127.8 L703.8 126.1 L706.8 124.5 L709.7 122.9 L712.7 121.2 L715.7 119.6 L718.7 118 L721.7 116.4 L724.7 114.7 L727.8 113.1 L730.9 111.5 L733.9 109.8 L737 108.2 L740.1 106.6 L743.2 104.9 L746.4 103.3 L749.5 101.7 L752.6 100.1 L755.8 98.4 L759 96.8 L762.2 95.2 L765.3 93.5 L768.6 91.9 L771.8 90.3 L775 88.6 L778.2 87 L781.5 85.4 L784.7 83.8 L788 82.1 L791.2 80.5 L794.5 78.9 L797.8 77.2 L801.1 75.6 L804.4 74 L807.7 72.3 L811 70.7 L814.3 69.1 L817.7 67.5 L821 65.8 L824.4 64.2 L827.7 62.6 L831.1 60.9 L834.4 59.3 L837.8 57.7 L841.2 56 L844.5 54.4 L847.9 52.8 L851.3 51.2 L854.7 49.5 L858.1 47.9 L861.5 46.3 L864.9 44.6 L868.3 43 L871.7 41.4 L875.1 39.7 L878.5 38.1 L881.9 36.5 L885.3 34.9 L888.7 33.2 L892.1 31.6 L895.5 30 L898.9 28.3"/><path d="M902.4 613.5 L898.5 611.9 L894.7 610.2 L890.8 608.6 L887 607 L883.2 605.4 L879.3 603.7 L875.5 602.1 L871.7 600.5 L867.8 598.8 L864 597.2 L860.2 595.6 L856.3 593.9 L852.5 592.3 L848.7 590.7 L844.9 589 L841.1 587.4 L837.3 585.8 L833.5 584.2 L829.7 582.5 L825.9 580.9 L822.1 579.3 L818.4 577.6 L814.6 576 L810.8 574.4 L807.1 572.8 L803.3 571.1 L799.6 569.5 L795.9 567.9 L792.2 566.2 L788.4 564.6 L784.7 563 L781 561.3 L777.4 559.7 L773.7 558.1 L770 556.5 L766.4 554.8 L762.7 553.2 L759.1 551.6 L755.4 549.9 L751.8 548.3 L748.2 546.7 L744.6 545 L741.1 543.4 L737.5 541.8 L733.9 540.1 L730.4 538.5 L726.9 536.9 L723.3 535.3 L719.8 533.6 L716.4 532 L712.9 530.4 L709.4 528.7 L706 527.1 L702.5 525.5 L699.1 523.9 L695.7 522.2 L692.4 520.6 L689 519 L685.6 517.3 L682.3 515.7 L679 514.1 L675.7 512.4 L672.4 510.8 L669.1 509.2 L665.9 507.6 L662.7 505.9 L659.4 504.3 L656.2 502.7 L653.1 501 L649.9 499.4 L646.8 497.8 L643.7 496.1 L640.6 494.5 L637.5 492.9 L634.4 491.2 L631.4 489.6 L628.4 488 L625.4 486.4 L622.4 484.7 L619.5 483.1 L616.5 481.5 L613.6 479.8 L610.7 478.2 L607.9 476.6 L605 475 L602.2 473.3 L599.4 471.7 L596.6 470.1 L593.9 468.4 L591.2 466.8 L588.4 465.2 L585.8 463.5 L583.1 461.9 L580.5 460.3 L577.9 458.6 L575.3 457 L572.7 455.4 L570.2 453.8 L567.7 452.1 L565.2 450.5 L562.8 448.9 L560.3 447.2 L557.9 445.6 L555.5 444 L553.2 442.4 L550.9 440.7 L548.6 439.1 L546.3 437.5 L544.1 435.8 L541.8 434.2 L539.7 432.6 L537.5 430.9 L535.4 429.3 L533.3 427.7 L531.2 426.1 L529.1 424.4 L527.1 422.8 L525.1 421.2 L523.1 419.5 L521.2 417.9 L519.3 416.3 L517.4 414.6 L515.6 413 L513.8 411.4 L512 409.8 L510.2 408.1 L508.5 406.5 L506.8 404.9 L505.1 403.2 L503.5 401.6 L501.9 400 L500.3 398.3 L498.8 396.7 L497.2 395.1 L495.8 393.5 L494.3 391.8 L492.9 390.2 L491.5 388.6 L490.1 386.9 L488.8 385.3 L487.5 383.7 L486.2 382 L485 380.4 L483.8 378.8 L482.6 377.2 L481.5 375.5 L480.4 373.9 L479.3 372.3 L478.3 370.6 L477.2 369 L476.3 367.4 L475.3 365.7 L474.4 364.1 L473.5 362.5 L472.7 360.9 L471.9 359.2 L471.1 357.6 L470.3 356 L469.6 354.3 L468.9 352.7 L468.3 351.1 L467.7 349.4 L467.1 347.8 L466.5 346.2 L466 344.6 L465.5 342.9 L465.1 341.3 L464.7 339.7 L464.3 338 L463.9 336.4 L463.6 334.8 L463.3 333.1 L463.1 331.5 L462.9 329.9 L462.7 328.2 L462.5 326.6 L462.4 325 L462.3 323.4 L462.3 321.7 L462.3 320.1 L462.3 318.5 L462.3 316.8 L462.4 315.2 L462.5 313.6 L462.7 312 L462.9 310.3 L463.1 308.7 L463.3 307.1 L463.6 305.4 L463.9 303.8 L464.3 302.2 L464.7 300.5 L465.1 298.9 L465.5 297.3 L466 295.7 L466.5 294 L467.1 292.4 L467.7 290.8 L468.3 289.1 L468.9 287.5 L469.6 285.9 L470.3 284.2 L471.1 282.6 L471.9 281 L472.7 279.4 L473.5 277.7 L474.4 276.1 L475.3 274.5 L476.3 272.8 L477.2 271.2 L478.3 269.6 L479.3 267.9 L480.4 266.3 L481.5 264.7 L482.6 263.1 L483.8 261.4 L485 259.8 L486.2 258.2 L487.5 256.5 L488.8 254.9 L490.1 253.3 L491.5 251.6 L492.9 250 L494.3 248.4 L495.8 246.8 L497.2 245.1 L498.8 243.5 L500.3 241.9 L501.9 240.2 L503.5 238.6 L505.1 237 L506.8 235.3 L508.5 233.7 L510.2 232.1 L512 230.5 L513.8 228.8 L515.6 227.2 L517.4 225.6 L519.3 223.9 L521.2 222.3 L523.1 220.7 L525.1 219 L527.1 217.4 L529.1 215.8 L531.2 214.2 L533.3 212.5 L535.4 210.9 L537.5 209.3 L539.7 207.6 L541.8 206 L544.1 204.4 L546.3 202.7 L548.6 201.1 L550.9 199.5 L553.2 197.9 L555.5 196.2 L557.9 194.6 L560.3 193 L562.8 191.3 L565.2 189.7 L567.7 188.1 L570.2 186.4 L572.7 184.8 L575.3 183.2 L577.9 181.6 L580.5 179.9 L583.1 178.3 L585.8 176.7 L588.4 175 L591.2 173.4 L593.9 171.8 L596.6 170.1 L599.4 168.5 L602.2 166.9 L605 165.3 L607.9 163.6 L610.7 162 L613.6 160.4 L616.5 158.7 L619.5 157.1 L622.4 155.5 L625.4 153.8 L628.4 152.2 L631.4 150.6 L634.4 149 L637.5 147.3 L640.6 145.7 L643.7 144.1 L646.8 142.4 L649.9 140.8 L653.1 139.2 L656.2 137.5 L659.4 135.9 L662.7 134.3 L665.9 132.7 L669.1 131 L672.4 129.4 L675.7 127.8 L679 126.1 L682.3 124.5 L685.6 122.9 L689 121.2 L692.4 119.6 L695.7 118 L699.1 116.4 L702.5 114.7 L706 113.1 L709.4 111.5 L712.9 109.8 L716.4 108.2 L719.8 106.6 L723.3 104.9 L726.9 103.3 L730.4 101.7 L733.9 100.1 L737.5 98.4 L741.1 96.8 L744.6 95.2 L748.2 93.5 L751.8 91.9 L755.4 90.3 L759.1 88.6 L762.7 87 L766.4 85.4 L770 83.8 L773.7 82.1 L777.4 80.5 L781 78.9 L784.7 77.2 L788.4 75.6 L792.2 74 L795.9 72.3 L799.6 70.7 L803.3 69.1 L807.1 67.5 L810.8 65.8 L814.6 64.2 L818.4 62.6 L822.1 60.9 L825.9 59.3 L829.7 57.7 L833.5 56 L837.3 54.4 L841.1 52.8 L844.9 51.2 L848.7 49.5 L852.5 47.9 L856.3 46.3 L860.2 44.6 L864 43 L867.8 41.4 L871.7 39.7 L875.5 38.1 L879.3 36.5 L883.2 34.9 L887 33.2 L890.8 31.6 L894.7 30 L898.5 28.3"/><path d="M902.4 613.5 L898.1 611.9 L893.8 610.2 L889.5 608.6 L885.3 607 L881 605.4 L876.8 603.7 L872.5 602.1 L868.2 600.5 L864 598.8 L859.7 597.2 L855.5 595.6 L851.2 593.9 L847 592.3 L842.8 590.7 L838.5 589 L834.3 587.4 L830.1 585.8 L825.9 584.2 L821.6 582.5 L817.4 580.9 L813.2 579.3 L809 577.6 L804.9 576 L800.7 574.4 L796.5 572.8 L792.3 571.1 L788.2 569.5 L784.1 567.9 L779.9 566.2 L775.8 564.6 L771.7 563 L767.6 561.3 L763.5 559.7 L759.4 558.1 L755.3 556.5 L751.2 554.8 L747.2 553.2 L743.1 551.6 L739.1 549.9 L735.1 548.3 L731.1 546.7 L727.1 545 L723.1 543.4 L719.2 541.8 L715.2 540.1 L711.3 538.5 L707.4 536.9 L703.5 535.3 L699.6 533.6 L695.7 532 L691.8 530.4 L688 528.7 L684.2 527.1 L680.3 525.5 L676.6 523.9 L672.8 522.2 L669 520.6 L665.3 519 L661.6 517.3 L657.9 515.7 L654.2 514.1 L650.5 512.4 L646.8 510.8 L643.2 509.2 L639.6 507.6 L636 505.9 L632.5 504.3 L628.9 502.7 L625.4 501 L621.9 499.4 L618.4 497.8 L614.9 496.1 L611.5 494.5 L608.1 492.9 L604.7 491.2 L601.3 489.6 L597.9 488 L594.6 486.4 L591.3 484.7 L588 483.1 L584.8 481.5 L581.5 479.8 L578.3 478.2 L575.1 476.6 L572 475 L568.9 473.3 L565.7 471.7 L562.7 470.1 L559.6 468.4 L556.6 466.8 L553.6 465.2 L550.6 463.5 L547.6 461.9 L544.7 460.3 L541.8 458.6 L539 457 L536.1 455.4 L533.3 453.8 L530.5 452.1 L527.8 450.5 L525 448.9 L522.3 447.2 L519.7 445.6 L517 444 L514.4 442.4 L511.8 440.7 L509.3 439.1 L506.7 437.5 L504.2 435.8 L501.8 434.2 L499.4 432.6 L497 430.9 L494.6 429.3 L492.2 427.7 L489.9 426.1 L487.7 424.4 L485.4 422.8 L483.2 421.2 L481 419.5 L478.9 417.9 L476.7 416.3 L474.7 414.6 L472.6 413 L470.6 411.4 L468.6 409.8 L466.6 408.1 L464.7 406.5 L462.8 404.9 L461 403.2 L459.2 401.6 L457.4 400 L455.6 398.3 L453.9 396.7 L452.2 395.1 L450.6 393.5 L449 391.8 L447.4 390.2 L445.8 388.6 L444.3 386.9 L442.8 385.3 L441.4 383.7 L440 382 L438.6 380.4 L437.3 378.8 L436 377.2 L434.7 375.5 L433.5 373.9 L432.3 372.3 L431.1 370.6 L430 369 L428.9 367.4 L427.9 365.7 L426.9 364.1 L425.9 362.5 L424.9 360.9 L424 359.2 L423.2 357.6 L422.3 356 L421.5 354.3 L420.8 352.7 L420.1 351.1 L419.4 349.4 L418.7 347.8 L418.1 346.2 L417.5 344.6 L417 342.9 L416.5 341.3 L416 339.7 L415.6 338 L415.2 336.4 L414.9 334.8 L414.5 333.1 L414.3 331.5 L414 329.9 L413.8 328.2 L413.6 326.6 L413.5 325 L413.4 323.4 L413.4 321.7 L413.4 320.1 L413.4 318.5 L413.4 316.8 L413.5 315.2 L413.6 313.6 L413.8 312 L414 310.3 L414.3 308.7 L414.5 307.1 L414.9 305.4 L415.2 303.8 L415.6 302.2 L416 300.5 L416.5 298.9 L417 297.3 L417.5 295.7 L418.1 294 L418.7 292.4 L419.4 290.8 L420.1 289.1 L420.8 287.5 L421.5 285.9 L422.3 284.2 L423.2 282.6 L424 281 L424.9 279.4 L425.9 277.7 L426.9 276.1 L427.9 274.5 L428.9 272.8 L430 271.2 L431.1 269.6 L432.3 267.9 L433.5 266.3 L434.7 264.7 L436 263.1 L437.3 261.4 L438.6 259.8 L440 258.2 L441.4 256.5 L442.8 254.9 L444.3 253.3 L445.8 251.6 L447.4 250 L449 248.4 L450.6 246.8 L452.2 245.1 L453.9 243.5 L455.6 241.9 L457.4 240.2 L459.2 238.6 L461 237 L462.8 235.3 L464.7 233.7 L466.6 232.1 L468.6 230.5 L470.6 228.8 L472.6 227.2 L474.7 225.6 L476.7 223.9 L478.9 222.3 L481 220.7 L483.2 219 L485.4 217.4 L487.7 215.8 L489.9 214.2 L492.2 212.5 L494.6 210.9 L497 209.3 L499.4 207.6 L501.8 206 L504.2 204.4 L506.7 202.7 L509.3 201.1 L511.8 199.5 L514.4 197.9 L517 196.2 L519.7 194.6 L522.3 193 L525 191.3 L527.8 189.7 L530.5 188.1 L533.3 186.4 L536.1 184.8 L539 183.2 L541.8 181.6 L544.7 179.9 L547.6 178.3 L550.6 176.7 L553.6 175 L556.6 173.4 L559.6 171.8 L562.7 170.1 L565.7 168.5 L568.9 166.9 L572 165.3 L575.1 163.6 L578.3 162 L581.5 160.4 L584.8 158.7 L588 157.1 L591.3 155.5 L594.6 153.8 L597.9 152.2 L601.3 150.6 L604.7 149 L608.1 147.3 L611.5 145.7 L614.9 144.1 L618.4 142.4 L621.9 140.8 L625.4 139.2 L628.9 137.5 L632.5 135.9 L636 134.3 L639.6 132.7 L643.2 131 L646.8 129.4 L650.5 127.8 L654.2 126.1 L657.9 124.5 L661.6 122.9 L665.3 121.2 L669 119.6 L672.8 118 L676.6 116.4 L680.3 114.7 L684.2 113.1 L688 111.5 L691.8 109.8 L695.7 108.2 L699.6 106.6 L703.5 104.9 L707.4 103.3 L711.3 101.7 L715.2 100.1 L719.2 98.4 L723.1 96.8 L727.1 95.2 L731.1 93.5 L735.1 91.9 L739.1 90.3 L743.1 88.6 L747.2 87 L751.2 85.4 L755.3 83.8 L759.4 82.1 L763.5 80.5 L767.6 78.9 L771.7 77.2 L775.8 75.6 L779.9 74 L784.1 72.3 L788.2 70.7 L792.3 69.1 L796.5 67.5 L800.7 65.8 L804.9 64.2 L809 62.6 L813.2 60.9 L817.4 59.3 L821.6 57.7 L825.9 56 L830.1 54.4 L834.3 52.8 L838.5 51.2 L842.8 49.5 L847 47.9 L851.2 46.3 L855.5 44.6 L859.7 43 L864 41.4 L868.2 39.7 L872.5 38.1 L876.8 36.5 L881 34.9 L885.3 33.2 L889.5 31.6 L893.8 30 L898.1 28.3"/><path d="M902.4 613.5 L897.7 611.9 L893 610.2 L888.3 608.6 L883.6 607 L878.9 605.4 L874.2 603.7 L869.5 602.1 L864.8 600.5 L860.1 598.8 L855.5 597.2 L850.8 595.6 L846.1 593.9 L841.5 592.3 L836.8 590.7 L832.1 589 L827.5 587.4 L822.8 585.8 L818.2 584.2 L813.6 582.5 L808.9 580.9 L804.3 579.3 L799.7 577.6 L795.1 576 L790.5 574.4 L785.9 572.8 L781.3 571.1 L776.8 569.5 L772.2 567.9 L767.7 566.2 L763.1 564.6 L758.6 563 L754.1 561.3 L749.6 559.7 L745.1 558.1 L740.6 556.5 L736.1 554.8 L731.7 553.2 L727.2 551.6 L722.8 549.9 L718.4 548.3 L714 546.7 L709.6 545 L705.2 543.4 L700.8 541.8 L696.5 540.1 L692.2 538.5 L687.9 536.9 L683.6 535.3 L679.3 533.6 L675 532 L670.8 530.4 L666.6 528.7 L662.3 527.1 L658.1 525.5 L654 523.9 L649.8 522.2 L645.7 520.6 L641.6 519 L637.5 517.3 L633.4 515.7 L629.3 514.1 L625.3 512.4 L621.3 510.8 L617.3 509.2 L613.3 507.6 L609.4 505.9 L605.5 504.3 L601.6 502.7 L597.7 501 L593.8 499.4 L590 497.8 L586.2 496.1 L582.4 494.5 L578.6 492.9 L574.9 491.2 L571.2 489.6 L567.5 488 L563.8 486.4 L560.2 484.7 L556.6 483.1 L553 481.5 L549.5 479.8 L545.9 478.2 L542.4 476.6 L539 475 L535.5 473.3 L532.1 471.7 L528.7 470.1 L525.3 468.4 L522 466.8 L518.7 465.2 L515.4 463.5 L512.2 461.9 L509 460.3 L505.8 458.6 L502.6 457 L499.5 455.4 L496.4 453.8 L493.3 452.1 L490.3 450.5 L487.3 448.9 L484.3 447.2 L481.4 445.6 L478.5 444 L475.6 442.4 L472.8 440.7 L470 439.1 L467.2 437.5 L464.4 435.8 L461.7 434.2 L459.1 432.6 L456.4 430.9 L453.8 429.3 L451.2 427.7 L448.7 426.1 L446.2 424.4 L443.7 422.8 L441.3 421.2 L438.9 419.5 L436.5 417.9 L434.2 416.3 L431.9 414.6 L429.6 413 L427.4 411.4 L425.2 409.8 L423.1 408.1 L421 406.5 L418.9 404.9 L416.8 403.2 L414.8 401.6 L412.9 400 L411 398.3 L409.1 396.7 L407.2 395.1 L405.4 393.5 L403.6 391.8 L401.9 390.2 L400.2 388.6 L398.5 386.9 L396.9 385.3 L395.3 383.7 L393.8 382 L392.2 380.4 L390.8 378.8 L389.3 377.2 L388 375.5 L386.6 373.9 L385.3 372.3 L384 370.6 L382.8 369 L381.6 367.4 L380.4 365.7 L379.3 364.1 L378.2 362.5 L377.2 360.9 L376.2 359.2 L375.2 357.6 L374.3 356 L373.5 354.3 L372.6 352.7 L371.8 351.1 L371.1 349.4 L370.4 347.8 L369.7 346.2 L369.1 344.6 L368.5 342.9 L367.9 341.3 L367.4 339.7 L366.9 338 L366.5 336.4 L366.1 334.8 L365.8 333.1 L365.5 331.5 L365.2 329.9 L365 328.2 L364.8 326.6 L364.6 325 L364.5 323.4 L364.5 321.7 L364.5 320.1 L364.5 318.5 L364.5 316.8 L364.6 315.2 L364.8 313.6 L365 312 L365.2 310.3 L365.5 308.7 L365.8 307.1 L366.1 305.4 L366.5 303.8 L366.9 302.2 L367.4 300.5 L367.9 298.9 L368.5 297.3 L369.1 295.7 L369.7 294 L370.4 292.4 L371.1 290.8 L371.8 289.1 L372.6 287.5 L373.5 285.9 L374.3 284.2 L375.2 282.6 L376.2 281 L377.2 279.4 L378.2 277.7 L379.3 276.1 L380.4 274.5 L381.6 272.8 L382.8 271.2 L384 269.6 L385.3 267.9 L386.6 266.3 L388 264.7 L389.3 263.1 L390.8 261.4 L392.2 259.8 L393.8 258.2 L395.3 256.5 L396.9 254.9 L398.5 253.3 L400.2 251.6 L401.9 250 L403.6 248.4 L405.4 246.8 L407.2 245.1 L409.1 243.5 L411 241.9 L412.9 240.2 L414.8 238.6 L416.8 237 L418.9 235.3 L421 233.7 L423.1 232.1 L425.2 230.5 L427.4 228.8 L429.6 227.2 L431.9 225.6 L434.2 223.9 L436.5 222.3 L438.9 220.7 L441.3 219 L443.7 217.4 L446.2 215.8 L448.7 214.2 L451.2 212.5 L453.8 210.9 L456.4 209.3 L459.1 207.6 L461.7 206 L464.4 204.4 L467.2 202.7 L470 201.1 L472.8 199.5 L475.6 197.9 L478.5 196.2 L481.4 194.6 L484.3 193 L487.3 191.3 L490.3 189.7 L493.3 188.1 L496.4 186.4 L499.5 184.8 L502.6 183.2 L505.8 181.6 L509 179.9 L512.2 178.3 L515.4 176.7 L518.7 175 L522 173.4 L525.3 171.8 L528.7 170.1 L532.1 168.5 L535.5 166.9 L539 165.3 L542.4 163.6 L545.9 162 L549.5 160.4 L553 158.7 L556.6 157.1 L560.2 155.5 L563.8 153.8 L567.5 152.2 L571.2 150.6 L574.9 149 L578.6 147.3 L582.4 145.7 L586.2 144.1 L590 142.4 L593.8 140.8 L597.7 139.2 L601.6 137.5 L605.5 135.9 L609.4 134.3 L613.3 132.7 L617.3 131 L621.3 129.4 L625.3 127.8 L629.3 126.1 L633.4 124.5 L637.5 122.9 L641.6 121.2 L645.7 119.6 L649.8 118 L654 116.4 L658.1 114.7 L662.3 113.1 L666.6 111.5 L670.8 109.8 L675 108.2 L679.3 106.6 L683.6 104.9 L687.9 103.3 L692.2 101.7 L696.5 100.1 L700.8 98.4 L705.2 96.8 L709.6 95.2 L714 93.5 L718.4 91.9 L722.8 90.3 L727.2 88.6 L731.7 87 L736.1 85.4 L740.6 83.8 L745.1 82.1 L749.6 80.5 L754.1 78.9 L758.6 77.2 L763.1 75.6 L767.7 74 L772.2 72.3 L776.8 70.7 L781.3 69.1 L785.9 67.5 L790.5 65.8 L795.1 64.2 L799.7 62.6 L804.3 60.9 L808.9 59.3 L813.6 57.7 L818.2 56 L822.8 54.4 L827.5 52.8 L832.1 51.2 L836.8 49.5 L841.5 47.9 L846.1 46.3 L850.8 44.6 L855.5 43 L860.1 41.4 L864.8 39.7 L869.5 38.1 L874.2 36.5 L878.9 34.9 L883.6 33.2 L888.3 31.6 L893 30 L897.7 28.3"/><path d="M902.4 613.5 L907.5 611.9 L912.6 610.2 L917.7 608.6 L922.8 607 L927.9 605.4 L933 603.7 L938.1 602.1 L943.2 600.5 L948.3 598.8 L953.4 597.2 L958.4 595.6 L963.5 593.9 L968.6 592.3 L973.7 590.7 L978.7 589 L983.8 587.4 L988.8 585.8 L993.9 584.2 L998.9 582.5 L1004 580.9 L1009 579.3 L1014 577.6 L1019 576 L1024 574.4 L1029 572.8 L1034 571.1 L1039 569.5 L1043.9 567.9 L1048.9 566.2 L1053.8 564.6 L1058.7 563 L1063.6 561.3 L1068.5 559.7 L1073.4 558.1 L1078.3 556.5 L1083.2 554.8 L1088 553.2 L1092.9 551.6 L1097.7 549.9 L1102.5 548.3 L1107.3 546.7 L1112.1 545 L1116.8 543.4 L1121.6 541.8 L1126.3 540.1 L1131 538.5 L1135.7 536.9 L1140.4 535.3 L1145 533.6 L1149.7 532 L1154.3 530.4 L1158.9 528.7 L1163.5 527.1 L1168 525.5 L1172.6 523.9 L1177.1 522.2 L1181.6 520.6 L1186 519 L1190.5 517.3 L1194.9 515.7 L1199.3 514.1 L1203.7 512.4 L1208.1 510.8 L1212.4 509.2 L1216.8 507.6 L1221.1 505.9 L1225.3 504.3 L1229.6 502.7 L1233.8 501 L1238 499.4 L1242.2 497.8 L1246.3 496.1 L1250.4 494.5 L1254.5 492.9 L1258.6 491.2 L1262.6 489.6 L1266.6 488 L1270.6 486.4 L1274.6 484.7 L1278.5 483.1 L1282.4 481.5 L1286.3 479.8 L1290.1 478.2 L1293.9 476.6 L1297.7 475 L1301.4 473.3 L1305.2 471.7 L1308.8 470.1 L1312.5 468.4 L1316.1 466.8 L1319.7 465.2 L1323.3 463.5 L1326.8 461.9 L1330.3 460.3 L1333.8 458.6 L1337.2 457 L1340.6 455.4 L1344 453.8 L1347.3 452.1 L1350.6 450.5 L1353.9 448.9 L1357.1 447.2 L1360.3 445.6 L1363.5 444 L1366.6 442.4 L1369.7 440.7 L1372.7 439.1 L1375.8 437.5 L1378.7 435.8 L1381.7 434.2 L1384.6 432.6 L1387.5 430.9 L1390.3 429.3 L1393.1 427.7 L1395.9 426.1 L1398.6 424.4 L1401.3 422.8 L1403.9 421.2 L1406.5 419.5 L1409.1 417.9 L1411.7 416.3 L1414.2 414.6 L1416.6 413 L1419 411.4 L1421.4 409.8 L1423.7 408.1 L1426 406.5 L1428.3 404.9 L1430.5 403.2 L1432.7 401.6 L1434.8 400 L1436.9 398.3 L1439 396.7 L1441 395.1 L1443 393.5 L1444.9 391.8 L1446.8 390.2 L1448.7 388.6 L1450.5 386.9 L1452.2 385.3 L1454 383.7 L1455.6 382 L1457.3 380.4 L1458.9 378.8 L1460.4 377.2 L1462 375.5 L1463.4 373.9 L1464.9 372.3 L1466.2 370.6 L1467.6 369 L1468.9 367.4 L1470.1 365.7 L1471.4 364.1 L1472.5 362.5 L1473.6 360.9 L1474.7 359.2 L1475.8 357.6 L1476.8 356 L1477.7 354.3 L1478.6 352.7 L1479.5 351.1 L1480.3 349.4 L1481.1 347.8 L1481.8 346.2 L1482.5 344.6 L1483.2 342.9 L1483.8 341.3 L1484.3 339.7 L1484.8 338 L1485.3 336.4 L1485.7 334.8 L1486.1 333.1 L1486.4 331.5 L1486.7 329.9 L1487 328.2 L1487.2 326.6 L1487.3 325 L1487.4 323.4 L1487.5 321.7 L1487.5 320.1 L1487.5 318.5 L1487.4 316.8 L1487.3 315.2 L1487.2 313.6 L1487 312 L1486.7 310.3 L1486.4 308.7 L1486.1 307.1 L1485.7 305.4 L1485.3 303.8 L1484.8 302.2 L1484.3 300.5 L1483.8 298.9 L1483.2 297.3 L1482.5 295.7 L1481.8 294 L1481.1 292.4 L1480.3 290.8 L1479.5 289.1 L1478.6 287.5 L1477.7 285.9 L1476.8 284.2 L1475.8 282.6 L1474.7 281 L1473.6 279.4 L1472.5 277.7 L1471.4 276.1 L1470.1 274.5 L1468.9 272.8 L1467.6 271.2 L1466.2 269.6 L1464.9 267.9 L1463.4 266.3 L1462 264.7 L1460.4 263.1 L1458.9 261.4 L1457.3 259.8 L1455.6 258.2 L1454 256.5 L1452.2 254.9 L1450.5 253.3 L1448.7 251.6 L1446.8 250 L1444.9 248.4 L1443 246.8 L1441 245.1 L1439 243.5 L1436.9 241.9 L1434.8 240.2 L1432.7 238.6 L1430.5 237 L1428.3 235.3 L1426 233.7 L1423.7 232.1 L1421.4 230.5 L1419 228.8 L1416.6 227.2 L1414.2 225.6 L1411.7 223.9 L1409.1 222.3 L1406.5 220.7 L1403.9 219 L1401.3 217.4 L1398.6 215.8 L1395.9 214.2 L1393.1 212.5 L1390.3 210.9 L1387.5 209.3 L1384.6 207.6 L1381.7 206 L1378.7 204.4 L1375.8 202.7 L1372.7 201.1 L1369.7 199.5 L1366.6 197.9 L1363.5 196.2 L1360.3 194.6 L1357.1 193 L1353.9 191.3 L1350.6 189.7 L1347.3 188.1 L1344 186.4 L1340.6 184.8 L1337.2 183.2 L1333.8 181.6 L1330.3 179.9 L1326.8 178.3 L1323.3 176.7 L1319.7 175 L1316.1 173.4 L1312.5 171.8 L1308.8 170.1 L1305.2 168.5 L1301.4 166.9 L1297.7 165.3 L1293.9 163.6 L1290.1 162 L1286.3 160.4 L1282.4 158.7 L1278.5 157.1 L1274.6 155.5 L1270.6 153.8 L1266.6 152.2 L1262.6 150.6 L1258.6 149 L1254.5 147.3 L1250.4 145.7 L1246.3 144.1 L1242.2 142.4 L1238 140.8 L1233.8 139.2 L1229.6 137.5 L1225.3 135.9 L1221.1 134.3 L1216.8 132.7 L1212.4 131 L1208.1 129.4 L1203.7 127.8 L1199.3 126.1 L1194.9 124.5 L1190.5 122.9 L1186 121.2 L1181.6 119.6 L1177.1 118 L1172.6 116.4 L1168 114.7 L1163.5 113.1 L1158.9 111.5 L1154.3 109.8 L1149.7 108.2 L1145 106.6 L1140.4 104.9 L1135.7 103.3 L1131 101.7 L1126.3 100.1 L1121.6 98.4 L1116.8 96.8 L1112.1 95.2 L1107.3 93.5 L1102.5 91.9 L1097.7 90.3 L1092.9 88.6 L1088 87 L1083.2 85.4 L1078.3 83.8 L1073.4 82.1 L1068.5 80.5 L1063.6 78.9 L1058.7 77.2 L1053.8 75.6 L1048.9 74 L1043.9 72.3 L1039 70.7 L1034 69.1 L1029 67.5 L1024 65.8 L1019 64.2 L1014 62.6 L1009 60.9 L1004 59.3 L998.9 57.7 L993.9 56 L988.8 54.4 L983.8 52.8 L978.7 51.2 L973.7 49.5 L968.6 47.9 L963.5 46.3 L958.4 44.6 L953.4 43 L948.3 41.4 L943.2 39.7 L938.1 38.1 L933 36.5 L927.9 34.9 L922.8 33.2 L917.7 31.6 L912.6 30 L907.5 28.3"/><path d="M902.4 613.5 L897.2 611.9 L892.1 610.2 L887 608.6 L881.9 607 L876.8 605.4 L871.7 603.7 L866.6 602.1 L861.5 600.5 L856.4 598.8 L851.3 597.2 L846.3 595.6 L841.2 593.9 L836.1 592.3 L831 590.7 L826 589 L820.9 587.4 L815.9 585.8 L810.8 584.2 L805.8 582.5 L800.7 580.9 L795.7 579.3 L790.7 577.6 L785.7 576 L780.7 574.4 L775.7 572.8 L770.7 571.1 L765.7 569.5 L760.8 567.9 L755.8 566.2 L750.9 564.6 L746 563 L741.1 561.3 L736.2 559.7 L731.3 558.1 L726.4 556.5 L721.5 554.8 L716.7 553.2 L711.8 551.6 L707 549.9 L702.2 548.3 L697.4 546.7 L692.6 545 L687.9 543.4 L683.1 541.8 L678.4 540.1 L673.7 538.5 L669 536.9 L664.3 535.3 L659.7 533.6 L655 532 L650.4 530.4 L645.8 528.7 L641.2 527.1 L636.7 525.5 L632.1 523.9 L627.6 522.2 L623.1 520.6 L618.7 519 L614.2 517.3 L609.8 515.7 L605.4 514.1 L601 512.4 L596.6 510.8 L592.3 509.2 L587.9 507.6 L583.6 505.9 L579.4 504.3 L575.1 502.7 L570.9 501 L566.7 499.4 L562.5 497.8 L558.4 496.1 L554.3 494.5 L550.2 492.9 L546.1 491.2 L542.1 489.6 L538.1 488 L534.1 486.4 L530.1 484.7 L526.2 483.1 L522.3 481.5 L518.4 479.8 L514.6 478.2 L510.8 476.6 L507 475 L503.3 473.3 L499.5 471.7 L495.9 470.1 L492.2 468.4 L488.6 466.8 L485 465.2 L481.4 463.5 L477.9 461.9 L474.4 460.3 L470.9 458.6 L467.5 457 L464.1 455.4 L460.7 453.8 L457.4 452.1 L454.1 450.5 L450.8 448.9 L447.6 447.2 L444.4 445.6 L441.2 444 L438.1 442.4 L435 440.7 L432 439.1 L428.9 437.5 L426 435.8 L423 434.2 L420.1 432.6 L417.2 430.9 L414.4 429.3 L411.6 427.7 L408.8 426.1 L406.1 424.4 L403.4 422.8 L400.8 421.2 L398.2 419.5 L395.6 417.9 L393 416.3 L390.5 414.6 L388.1 413 L385.7 411.4 L383.3 409.8 L381 408.1 L378.7 406.5 L376.4 404.9 L374.2 403.2 L372 401.6 L369.9 400 L367.8 398.3 L365.7 396.7 L363.7 395.1 L361.7 393.5 L359.8 391.8 L357.9 390.2 L356 388.6 L354.2 386.9 L352.5 385.3 L350.7 383.7 L349.1 382 L347.4 380.4 L345.8 378.8 L344.3 377.2 L342.7 375.5 L341.3 373.9 L339.8 372.3 L338.5 370.6 L337.1 369 L335.8 367.4 L334.6 365.7 L333.3 364.1 L332.2 362.5 L331.1 360.9 L330 359.2 L328.9 357.6 L327.9 356 L327 354.3 L326.1 352.7 L325.2 351.1 L324.4 349.4 L323.6 347.8 L322.9 346.2 L322.2 344.6 L321.5 342.9 L320.9 341.3 L320.4 339.7 L319.9 338 L319.4 336.4 L319 334.8 L318.6 333.1 L318.3 331.5 L318 329.9 L317.7 328.2 L317.5 326.6 L317.4 325 L317.3 323.4 L317.2 321.7 L317.2 320.1 L317.2 318.5 L317.3 316.8 L317.4 315.2 L317.5 313.6 L317.7 312 L318 310.3 L318.3 308.7 L318.6 307.1 L319 305.4 L319.4 303.8 L319.9 302.2 L320.4 300.5 L320.9 298.9 L321.5 297.3 L322.2 295.7 L322.9 294 L323.6 292.4 L324.4 290.8 L325.2 289.1 L326.1 287.5 L327 285.9 L327.9 284.2 L328.9 282.6 L330 281 L331.1 279.4 L332.2 277.7 L333.3 276.1 L334.6 274.5 L335.8 272.8 L337.1 271.2 L338.5 269.6 L339.8 267.9 L341.3 266.3 L342.7 264.7 L344.3 263.1 L345.8 261.4 L347.4 259.8 L349.1 258.2 L350.7 256.5 L352.5 254.9 L354.2 253.3 L356 251.6 L357.9 250 L359.8 248.4 L361.7 246.8 L363.7 245.1 L365.7 243.5 L367.8 241.9 L369.9 240.2 L372 238.6 L374.2 237 L376.4 235.3 L378.7 233.7 L381 232.1 L383.3 230.5 L385.7 228.8 L388.1 227.2 L390.5 225.6 L393 223.9 L395.6 222.3 L398.2 220.7 L400.8 219 L403.4 217.4 L406.1 215.8 L408.8 214.2 L411.6 212.5 L414.4 210.9 L417.2 209.3 L420.1 207.6 L423 206 L426 204.4 L428.9 202.7 L432 201.1 L435 199.5 L438.1 197.9 L441.2 196.2 L444.4 194.6 L447.6 193 L450.8 191.3 L454.1 189.7 L457.4 188.1 L460.7 186.4 L464.1 184.8 L467.5 183.2 L470.9 181.6 L474.4 179.9 L477.9 178.3 L481.4 176.7 L485 175 L488.6 173.4 L492.2 171.8 L495.9 170.1 L499.5 168.5 L503.3 166.9 L507 165.3 L510.8 163.6 L514.6 162 L518.4 160.4 L522.3 158.7 L526.2 157.1 L530.1 155.5 L534.1 153.8 L538.1 152.2 L542.1 150.6 L546.1 149 L550.2 147.3 L554.3 145.7 L558.4 144.1 L562.5 142.4 L566.7 140.8 L570.9 139.2 L575.1 137.5 L579.4 135.9 L583.6 134.3 L587.9 132.7 L592.3 131 L596.6 129.4 L601 127.8 L605.4 126.1 L609.8 124.5 L614.2 122.9 L618.7 121.2 L623.1 119.6 L627.6 118 L632.1 116.4 L636.7 114.7 L641.2 113.1 L645.8 111.5 L650.4 109.8 L655 108.2 L659.7 106.6 L664.3 104.9 L669 103.3 L673.7 101.7 L678.4 100.1 L683.1 98.4 L687.9 96.8 L692.6 95.2 L697.4 93.5 L702.2 91.9 L707 90.3 L711.8 88.6 L716.7 87 L721.5 85.4 L726.4 83.8 L731.3 82.1 L736.2 80.5 L741.1 78.9 L746 77.2 L750.9 75.6 L755.8 74 L760.8 72.3 L765.7 70.7 L770.7 69.1 L775.7 67.5 L780.7 65.8 L785.7 64.2 L790.7 62.6 L795.7 60.9 L800.7 59.3 L805.8 57.7 L810.8 56 L815.9 54.4 L820.9 52.8 L826 51.2 L831 49.5 L836.1 47.9 L841.2 46.3 L846.3 44.6 L851.3 43 L856.4 41.4 L861.5 39.7 L866.6 38.1 L871.7 36.5 L876.8 34.9 L881.9 33.2 L887 31.6 L892.1 30 L897.2 28.3"/><path d="M1054.2 564.6 H750.5"/><path d="M1195.8 515.7 H609"/><path d="M1317.3 466.8 H487.4"/><path d="M1410.5 417.9 H394.2"/><path d="M1469.2 369 H335.5"/><path d="M1489.2 320.1 H315.6"/><path d="M1469.2 271.2 H335.5"/><path d="M1410.5 222.3 H394.2"/><path d="M1317.3 173.4 H487.4"/><path d="M1195.8 124.5 H609"/><path d="M1054.2 75.6 H750.5"/></g><g fill="#888888" font-family="Liberation Sans, sans-serif" font-size="11" text-anchor="middle"><text x="900.1" y="25">+90</text><rect x="912.5" y="16.8" width="2" height="2"/><text x="900.1" y="123.5">+60</text><rect x="912.5" y="115.3" width="2" height="2"/><text x="900.1" y="221">+30</text><rect x="912.5" y="212.8" width="2" height="2"/><text x="900.1" y="428">−30</text><rect x="912.5" y="419.8" width="2" height="2"/><text x="900.1" y="526">−60</text><rect x="912.5" y="517.8" width="2" height="2"/><text x="900.1" y="624">−90</text><rect x="912.5" y="615.8" width="2" height="2"/><text x="1487" y="330">+180</text><rect x="1502.4" y="321.8" width="2" height="2"/><text x="1389.1" y="330">+210</text><rect x="1404.6" y="321.8" width="2" height="2"/><text x="1291.3" y="330">+240</text><rect x="1306.8" y="321.8" width="2" height="2"/><text x="1193.5" y="330">+270</text><rect x="1209" y="321.8" width="2" height="2"/><text x="1095.8" y="330">+300</text><rect x="1111.2" y="321.8" width="2" height="2"/><text x="997.9" y="330">+330</text><rect x="1013.4" y="321.8" width="2" height="2"/><text x="900.1" y="330">+0</text><rect x="909.5" y="321.8" width="2" height="2"/><text x="802.4" y="330">+30</text><rect x="814.7" y="321.8" width="2" height="2"/><text x="704.5" y="330">+60</text><rect x="716.9" y="321.8" width="2" height="2"/><text x="606.8" y="330">+90</text><rect x="619.1" y="321.8" width="2" height="2"/><text x="509" y="330">+120</text><rect x="524.4" y="321.8" width="2" height="2"/><text x="411.2" y="330">+150</text><rect x="426.6" y="321.8" width="2" height="2"/><text x="313.4" y="330">+180</text><rect x="328.8" y="321.8" width="2" height="2"/></g><path d="M491.7 259.2L498.3 253.3M504.5 280.5L528 275.5M499.2 309.2L513.3 330M425 324.2L433.3 334.2M457.5 320.8L462.5 325M633.3 298.3L640 295M539.2 230L560.8 231.7M605 231.7L610.8 228.3M446.7 235L447 241.7M1355 260L1363 239M1404 235L1422 248M1445 277L1453 264M1338 223L1342 228M1333 228L1342 229M1398 319L1400 314" fill="none" stroke="#8c8c8c" stroke-width="1.6"/><g fill="none" stroke="#505050" stroke-width="1.2" stroke-dasharray="1.2 2.2"><path d="M633.8 297.7 635.2 296.6 636.7 295.6 638.2 294.6 639.7 293.6 641.2 292.6 642.7 291.6 644.2 290.6 645.7 289.6 647.2 288.6 648.7 287.6 650.3 286.6 651.8 285.6 653.3 284.6 654.9 283.7 656.5 282.7 658 281.7 659.6 280.7 661.2 279.7 662.8 278.7 664.3 277.8 665.9 276.8 667.5 275.8 669.2 274.8 670.8 273.9 672.4 272.9 674 271.9 675.6 271 677.3 270 678.9 269.1 680.6 268.1 682.2 267.1 683.9 266.2 685.5 265.3 687.2 264.3 688.9 263.4 690.5 262.4 692.2 261.5 693.9 260.6 695.6 259.6 697.3 258.7 698.9 257.8 700.6 256.9 702.3 256 704 255 705.8 254.1 707.5 253.2 709.2 252.3 710.9 251.4 712.6 250.5 714.3 249.6 716.1 248.8 717.8 247.9 719.5 247 721.2 246.1 723 245.3 724.7 244.4 726.4 243.5 728.2 242.7 729.9 241.8 731.7 241 733.4 240.1 735.2 239.3 736.9 238.5 738.7 237.6 740.4 236.8 742.2 236 743.9 235.2 745.7 234.4 747.4 233.6 749.2 232.8 750.9 232 752.7 231.2 754.4 230.4 756.2 229.7 757.9 228.9 759.7 228.1 761.4 227.4 763.2 226.6 765 225.9 766.7 225.1 768.5 224.4 770.2 223.7 772 223 773.7 222.3 775.5 221.6 777.2 220.9 779 220.2 780.7 219.5 782.5 218.8 784.2 218.1 786 217.5 787.7 216.8 789.4 216.2 791.2 215.5 792.9 214.9 794.7 214.3 796.4 213.7 798.1 213 799.9 212.4 801.6 211.9 803.3 211.3 805 210.7 806.8 210.1 808.5 209.6 810.2 209 811.9 208.5 813.6 207.9 815.4 207.4 817.1 206.9 818.8 206.4 820.5 205.9 822.2 205.4 823.9 204.9 825.6 204.4 827.3 204 829 203.5 830.7 203.1 832.4 202.6 834.1 202.2 835.8 201.8 837.4 201.4 839.1 201 840.8 200.6 842.5 200.2 844.2 199.9 845.8 199.5 847.5 199.2 849.2 198.8 850.8 198.5 852.5 198.2 854.2 197.9 855.8 197.6 857.5 197.3 859.1 197 860.8 196.8 862.5 196.5 864.1 196.3 865.8 196.1 867.4 195.8 869.1 195.6 870.7 195.4 872.3 195.3 874 195.1 875.6 194.9 877.3 194.8 878.9 194.6 880.6 194.5 882.2 194.4 883.8 194.3 885.5 194.2 887.1 194.1 888.7 194 890.4 194 892 193.9 893.6 193.9 895.3 193.9 896.9 193.8 898.5 193.8 900.2 193.9 901.8 193.9 903.4 193.9 905.1 193.9 906.7 194 908.3 194.1 909.9 194.1 911.6 194.2 913.2 194.3 914.8 194.4 916.5 194.6 918.1 194.7 919.7 194.8 921.4 195 923 195.2 924.7 195.3 926.3 195.5 927.9 195.7 929.6 195.9 931.2 196.2 932.9 196.4 934.5 196.6 936.2 196.9 937.8 197.2 939.4 197.4 941.1 197.7 942.8 198 944.4 198.3 946.1 198.6 947.7 199 949.4 199.3 951 199.7 952.7 200 954.4 200.4 956 200.8 957.7 201.2 959.4 201.6 961 202 962.7 202.4 964.4 202.8 966.1 203.3 967.7 203.7 969.4 204.2 971.1 204.6 972.8 205.1 974.5 205.6 976.2 206.1 977.9 206.6 979.6 207.1 981.3 207.6 983 208.2 984.7 208.7 986.4 209.2 988.1 209.8 989.8 210.4 991.5 210.9 993.2 211.5 994.9 212.1 996.6 212.7 998.3 213.3 1000 213.9"/><path d="M673.2 261.2 674.9 261.3 676.5 261.3 678.1 261.3 679.8 261.3 681.4 261.4 683 261.4 684.6 261.4 686.2 261.5 687.8 261.5 689.5 261.6 691.1 261.6 692.7 261.7 694.3 261.8 695.9 261.8 697.5 261.9 699.1 262 700.7 262.1 702.3 262.2 703.9 262.3 705.5 262.4 707.1 262.5 708.7 262.6 710.3 262.7 711.9 262.8 713.5 262.9 715.1 263.1 716.7 263.2 718.3 263.3 719.8 263.5 721.4 263.6 723 263.8 724.6 263.9 726.2 264.1 727.8 264.2 729.3 264.4 730.9 264.6 732.5 264.8 734.1 264.9 735.6 265.1 737.2 265.3 738.8 265.5 740.4 265.7 741.9 265.9 743.5 266.1 745.1 266.3 746.6 266.5 748.2 266.7 749.8 267 751.3 267.2 752.9 267.4 754.5 267.7 756 267.9 757.6 268.1 759.1 268.4 760.7 268.6 762.3 268.9 763.8 269.1 765.4 269.4 767 269.7 768.5 269.9 770.1 270.2 771.6 270.5 773.2 270.8 774.7 271.1 776.3 271.3 777.9 271.6 779.4 271.9 781 272.2 782.5 272.5 784.1 272.8 785.6 273.2 787.2 273.5 788.7 273.8 790.3 274.1 791.9 274.4 793.4 274.8 795 275.1 796.5 275.4 798.1 275.8 799.6 276.1 801.2 276.4 802.7 276.8 804.3 277.1 805.8 277.5 807.4 277.9 808.9 278.2 810.5 278.6 812 279 813.6 279.3 815.2 279.7 816.7 280.1 818.3 280.4 819.8 280.8 821.4 281.2 822.9 281.6 824.5 282 826 282.4 827.6 282.8 829.1 283.2 830.7 283.6 832.2 284 833.8 284.4 835.4 284.8 836.9 285.2 838.5 285.6 840 286 841.6 286.5 843.1 286.9 844.7 287.3 846.2 287.7 847.8 288.2 849.4 288.6 850.9 289 852.5 289.5 854 289.9 855.6 290.3 857.1 290.8 858.7 291.2 860.3 291.7 861.8 292.1 863.4 292.6 864.9 293 866.5 293.5 868 293.9 869.6 294.4 871.2 294.9 872.7 295.3 874.3 295.8 875.8 296.2 877.4 296.7 879 297.2 880.5 297.6 882.1 298.1 883.6 298.6 885.2 299.1 886.7 299.5 888.3 300 889.9 300.5 891.4 301 893 301.5 894.5 301.9 896.1 302.4 897.7 302.9 899.2 303.4 900.8 303.9 902.3 304.4 903.9 304.9 905.5 305.4 907 305.8 908.6 306.3 910.1 306.8 911.7 307.3 913.3 307.8 914.8 308.3 916.4 308.8 917.9 309.3 919.5 309.8 921.1 310.3 922.6 310.8 924.2 311.3 925.7 311.8 927.3 312.3 928.9 312.8 930.4 313.3 932 313.8 933.5 314.3 935.1 314.8 936.7 315.3 938.2 315.9 939.8 316.4 941.3 316.9 942.9 317.4"/><path d="M619.4 263.2 621.1 263.1 622.8 263 624.4 262.9 626.1 262.8 627.8 262.7 629.5 262.6 631.2 262.5 632.9 262.4 634.5 262.3 636.2 262.3 637.9 262.2 639.5 262.1 641.2 262.1 642.9 262 644.5 262 646.2 261.9 647.9 261.9 649.5 261.8 651.2 261.8 652.8 261.8 654.5 261.7 656.1 261.7 657.8 261.7 659.4 261.7 661.1 261.7 662.7 261.7 664.4 261.7 666 261.7 667.6 261.7 669.3 261.7 670.9 261.7 672.5 261.7 674.2 261.8 675.8 261.8 677.4 261.9 679 261.9 680.7 261.9 682.3 262 683.9 262.1 685.5 262.1 687.1 262.2 688.7 262.3 690.3 262.3 692 262.4 693.6 262.5 695.2 262.6 696.8 262.7 698.4 262.8 700 262.9 701.6 263 703.2 263.1 704.8 263.2 706.4 263.3 708 263.5 709.6 263.6 711.2 263.7 712.7 263.9 714.3 264 715.9 264.2 717.5 264.3 719.1 264.5 720.7 264.6 722.3 264.8 723.8 265 725.4 265.2 727 265.3 728.6 265.5 730.2 265.7 731.7 265.9 733.3 266.1 734.9 266.3 736.5 266.5 738 266.7 739.6 266.9 741.2 267.1 742.8 267.4 744.3 267.6 745.9 267.8 747.5 268.1 749 268.3 750.6 268.5 752.2 268.8 753.7 269 755.3 269.3 756.9 269.5 758.4 269.8 760 270.1 761.5 270.3 763.1 270.6 764.7 270.9 766.2 271.2 767.8 271.4 769.4 271.7"/><path d="M622.8 206.8 624.1 207.1 625.3 207.4 626.5 207.8 627.8 208.2 629 208.5 630.2 208.9 631.4 209.3 632.6 209.7 633.8 210.1 635 210.5 636.2 210.9 637.3 211.4 638.5 211.8 639.7 212.3 640.8 212.7 641.9 213.2 643.1 213.7 644.2 214.2 645.3 214.7 646.5 215.2 647.6 215.7 648.7 216.2 649.8 216.7 650.9 217.3 652 217.8 653.1 218.3 654.2 218.9 655.3 219.5 656.4 220 657.4 220.6 658.5 221.2 659.6 221.8 660.6 222.4 661.7 223 662.8 223.6 663.8 224.3 664.9 224.9 666 225.5 667 226.2 668.1 226.8 669.1 227.5 670.2 228.1 671.2 228.8 672.3 229.5 673.3 230.2 674.4 230.9 675.4 231.6 676.4 232.3 677.5 233 678.5 233.7 679.6 234.4 680.6 235.1 681.7 235.8 682.7 236.6 683.8 237.3 684.8 238.1 685.8 238.8 686.9 239.6 687.9 240.3 689 241.1 690 241.9 691.1 242.7 692.1 243.4 693.2 244.2 694.2 245 695.3 245.8 696.3 246.6 697.4 247.4 698.5 248.2 699.5 249 700.6 249.9 701.7 250.7 702.7 251.5 703.8 252.3 704.9 253.2 706 254 707 254.9 708.1 255.7 709.2 256.6 710.3 257.4 711.4 258.3 712.5 259.1 713.6 260 714.7 260.9 715.8 261.7 716.9 262.6 718 263.5 719.1 264.4 720.2 265.3 721.3 266.1 722.4 267 723.5 267.9 724.7 268.8 725.8 269.7 726.9 270.6 728.1 271.5 729.2 272.4 730.3 273.3 731.5 274.3 732.6 275.2 733.8 276.1 735 277 736.1 277.9 737.3 278.9 738.4 279.8 739.6 280.7 740.8 281.6 742 282.6 743.2 283.5 744.3 284.4 745.5 285.4 746.7 286.3 747.9 287.3 749.1 288.2 750.3 289.2 751.5 290.1 752.7 291 754 292 755.2 292.9 756.4 293.9 757.6 294.9 758.9 295.8 760.1 296.8 761.3 297.7 762.6 298.7 763.8 299.6 765.1 300.6 766.3 301.6 767.6 302.5 768.8 303.5 770.1 304.5 771.4 305.4 772.6 306.4 773.9 307.4 775.2 308.3 776.5 309.3 777.7 310.3 779 311.2 780.3 312.2 781.6 313.2 782.9 314.1 784.2 315.1 785.5 316.1 786.8 317.1 788.1 318 789.4 319 790.7 320 792.1 320.9 793.4 321.9 794.7 322.9 796 323.8 797.4 324.8 798.7 325.8 800 326.8 801.4 327.7 802.7 328.7 804 329.7 805.4 330.6 806.7 331.6 808.1 332.6 809.4 333.5 810.8 334.5 812.2 335.5 813.5 336.4 814.9 337.4 816.2 338.4 817.6 339.3 819 340.3 820.4 341.3 821.7 342.2 823.1 343.2 824.5 344.1 825.9 345.1 827.2 346 828.6 347 830 347.9 831.4 348.9 832.8 349.8 834.2 350.8 835.6 351.7"/><path d="M771 159 771.1 160.2 771.2 161.5 771.3 162.7 771.4 164 771.5 165.2 771.6 166.5 771.7 167.8 771.8 169.1 771.9 170.4 772 171.7 772.1 173 772.2 174.3 772.3 175.6 772.4 176.9 772.6 178.2 772.7 179.5 772.8 180.9 772.9 182.2 773.1 183.6 773.2 184.9 773.3 186.3 773.5 187.6 773.6 189 773.8 190.3 774 191.7 774.1 193.1 774.3 194.4 774.5 195.8 774.6 197.2 774.8 198.6 775 200 775.2 201.4 775.4 202.8 775.6 204.2 775.8 205.6 776 207 776.3 208.4 776.5 209.8 776.7 211.2 777 212.6 777.2 214 777.4 215.4 777.7 216.9 778 218.3 778.2 219.7 778.5 221.1 778.8 222.6 779.1 224 779.4 225.4 779.7 226.9 780 228.3 780.3 229.8 780.6 231.2 781 232.7 781.3 234.1 781.7 235.5 782 237"/><path d="M465.8 301.3 467.1 302 468.5 302.7 469.8 303.3 471.2 304 472.6 304.7 473.9 305.4 475.3 306 476.7 306.7 478.1 307.4 479.5 308.1 480.9 308.8 482.3 309.4 483.7 310.1 485.1 310.8 486.5 311.5 488 312.2 489.4 312.9 490.8 313.5 492.3 314.2 493.7 314.9 495.2 315.6 496.6 316.3 498.1 317 499.6 317.7 501 318.4 502.5 319 504 319.7 505.5 320.4 507 321.1 508.5 321.8 510 322.5 511.5 323.2 513 323.9 514.6 324.5 516.1 325.2 517.6 325.9 519.2 326.6 520.7 327.3 522.3 328 523.8 328.7 525.4 329.3 526.9 330 528.5 330.7 530.1 331.4 531.7 332.1 533.2 332.8 534.8 333.4 536.4 334.1 538 334.8 539.6 335.5 541.2 336.2 542.8 336.8 544.5 337.5 546.1 338.2 547.7 338.8 549.3 339.5 551 340.2 552.6 340.9 554.3 341.5 555.9 342.2 557.5 342.9 559.2 343.5 560.9 344.2 562.5 344.8 564.2 345.5 565.9 346.2 567.5 346.8 569.2 347.5 570.9 348.1 572.6 348.8 574.3 349.4 576 350.1 577.7 350.7 579.4 351.3 581.1 352 582.8 352.6 584.5 353.3 586.2 353.9 587.9 354.5 589.6 355.1 591.3 355.8 593.1 356.4 594.8 357 596.5 357.6 598.2 358.2 600 358.9"/><path d="M515.2 331.4 516.4 332.7 517.7 333.9 518.9 335.1 520.2 336.4 521.5 337.6 522.9 338.8 524.2 340 525.6 341.3 526.9 342.5 528.3 343.7 529.7 344.9 531.2 346.2 532.6 347.4 534 348.6 535.5 349.8 537 351 538.5 352.3 540 353.5 541.5 354.7 543.1 355.9 544.6 357.1 546.2 358.3 547.8 359.5 549.4 360.7 551 361.9 552.6 363.2 554.3 364.4 555.9 365.6 557.6 366.8 559.3 368 561 369.2 562.7 370.4 564.4 371.5 566.2 372.7 567.9 373.9 569.7 375.1 571.4 376.3 573.2 377.5 575 378.7 576.8 379.8 578.7 381 580.5 382.2 582.3 383.4 584.2 384.5 586.1 385.7 587.9 386.9 589.8 388 591.7 389.2 593.6 390.4 595.5 391.5 597.5 392.7 599.4 393.8 601.4 394.9 603.3 396.1 605.3 397.2 607.3 398.4 609.2 399.5 611.2 400.6 613.2 401.8 615.2 402.9 617.2 404 619.3 405.1 621.3 406.2 623.3 407.3 625.4 408.4 627.4 409.5 629.5 410.6 631.5 411.7 633.6 412.8 635.7 413.9 637.8 415 639.8 416 641.9 417.1 644 418.2 646.1 419.2 648.2 420.3 650.3 421.3 652.4 422.4 654.5 423.4 656.7 424.4"/><path d="M743.3 300 744.7 300.8 746.1 301.5 747.4 302.3 748.8 303 750.2 303.8 751.6 304.6 753 305.3 754.4 306.1 755.8 306.9 757.2 307.6 758.6 308.4 760 309.2 761.4 309.9 762.8 310.7 764.2 311.5 765.6 312.2 767 313 768.5 313.8 769.9 314.5 771.3 315.3 772.7 316.1 774.1 316.9 775.6 317.6 777 318.4 778.4 319.2 779.9 319.9 781.3 320.7 782.8 321.5 784.2 322.3 785.6 323 787.1 323.8 788.5 324.6 790 325.4 791.4 326.1 792.9 326.9 794.3 327.7 795.8 328.4 797.3 329.2 798.7 330 800.2 330.7 801.6 331.5 803.1 332.3 804.6 333 806 333.8 807.5 334.6 809 335.3 810.5 336.1 811.9 336.9 813.4 337.6 814.9 338.4 816.4 339.1 817.8 339.9 819.3 340.7 820.8 341.4 822.3 342.2 823.8 342.9 825.3 343.7 826.8 344.4 828.2 345.2 829.7 345.9 831.2 346.7 832.7 347.4 834.2 348.1 835.7 348.9 837.2 349.6 838.7 350.4 840.2 351.1 841.7 351.8 843.2 352.6 844.7 353.3 846.2 354 847.7 354.7 849.2 355.5 850.7 356.2 852.2 356.9 853.7 357.6 855.2 358.3 856.7 359 858.2 359.8 859.7 360.5 861.2 361.2 862.7 361.9 864.2 362.6 865.8 363.3 867.3 364 868.8 364.6 870.3 365.3 871.8 366 873.3 366.7"/><path d="M600 401.7 602.1 402.8 604.2 404 606.3 405.1 608.5 406.2 610.6 407.3 612.7 408.5 614.9 409.6 617 410.7 619.2 411.8 621.4 412.9 623.6 414 625.7 415.1 627.9 416.2 630.1 417.2 632.3 418.3 634.5 419.4 636.7 420.4 638.9 421.5 641.1 422.5 643.3 423.6 645.6 424.6 647.8 425.7 650 426.7"/><path d="M1404.2 234 1406.6 235.6 1409 237.2 1411.3 238.8 1413.6 240.4 1415.9 242.1 1418.1 243.7 1420.3 245.3 1422.4 246.9 1424.5 248.6 1426.6 250.2 1428.6 251.8 1430.6 253.4 1432.5 255 1434.4 256.7 1436.3 258.3 1438.1 259.9 1439.9 261.5 1441.7 263.2 1443.4 264.8 1445 266.4 1446.6 268 1448.2 269.7 1449.8 271.3 1451.3 272.9 1452.7 274.5 1454.1 276.2 1455.5 277.8 1456.8 279.4 1458.1 281 1459.4 282.7 1460.6 284.3 1461.7 285.9 1462.9 287.5 1463.9 289.1 1465 290.8 1466 292.4 1466.9 294 1467.8 295.6 1468.7 297.3 1469.5 298.9 1470.3 300.5 1471 302.1 1471.7 303.8 1472.4 305.4 1473 307 1473.6 308.6 1474.1 310.3 1474.6 311.9 1475 313.5 1475.4 315.2 1475.7 316.8 1476 318.4 1476.3 320 1476.5 321.7 1476.7 323.3 1476.8 324.9 1476.9 326.5 1477 328.2 1477 329.8 1476.9 331.4 1476.8 333 1476.7 334.7 1476.5 336.3 1476.3 337.9 1476 339.5 1475.7 341.2 1475.4 342.8 1475 344.4 1474.6 346 1474.1 347.7 1473.6 349.3 1473 350.9 1472.4 352.5 1471.8 354.2 1471.1 355.8 1470.3 357.4 1469.5 359 1468.7 360.7 1467.9 362.3 1467 363.9 1466 365.5 1465 367.1 1464 368.8 1462.9 370.4 1461.8 372 1460.6 373.6 1459.4 375.3 1458.2 376.9 1456.9 378.5 1455.5 380.1 1454.2 381.8 1452.8 383.4 1451.3 385 1449.8 386.6"/><path d="M1397.5 217.5 1398.2 218.6 1398.8 219.8 1399.5 221 1400.2 222.1 1400.8 223.3 1401.4 224.5 1402 225.7 1402.6 226.8 1403.2 228 1403.8 229.2 1404.4 230.4 1404.9 231.6 1405.4 232.8 1405.9 234 1406.4 235.2 1406.9 236.5 1407.3 237.7 1407.8 238.9 1408.2 240.1 1408.6 241.3 1409 242.6 1409.4 243.8 1409.7 245 1410 246.3 1410.3 247.5 1410.6 248.8 1410.9 250 1411.1 251.3 1411.4 252.5 1411.6 253.8 1411.8 255 1411.9 256.3 1412.1 257.5 1412.2 258.8 1412.3 260.1 1412.4 261.3 1412.4 262.6 1412.5 263.9 1412.5 265.1 1412.5 266.4 1412.5 267.7 1412.4 268.9 1412.3 270.2 1412.2 271.5 1412.1 272.8 1412 274.1 1411.8 275.4 1411.6 276.6 1411.4 277.9 1411.2 279.2 1410.9 280.5 1410.6 281.8 1410.3 283.1 1410 284.4 1409.6 285.7 1409.3 287 1408.9 288.3 1408.4 289.6 1408 290.9 1407.5 292.2 1407 293.5 1406.5 294.8 1406 296.1 1405.4 297.4 1404.8 298.7 1404.2 300 1403.5 301.3 1402.9 302.6 1402.2 303.9 1401.5 305.2 1400.7 306.5 1400 307.8 1399.2 309.1 1398.4 310.4 1397.5 311.7 1396.7 313 1395.8 314.3 1394.9 315.6 1393.9 316.9"/><path d="M1198 152.6 1201 153.4 1204.1 154.2 1207.2 155.1 1210.3 155.9 1213.4 156.8 1216.6 157.7 1219.7 158.6 1222.9 159.5 1226.1 160.4 1229.3 161.3 1232.6 162.3 1235.8 163.2 1239.1 164.2 1242.3 165.1 1245.6 166.1 1248.9 167.1 1252.2 168.1 1255.5 169.1 1258.8 170.2 1262.1 171.2 1265.4 172.2 1268.8 173.3 1272.1 174.3 1275.4 175.4 1278.8 176.5 1282.1 177.6 1285.5 178.6 1288.8 179.7 1292.2 180.8 1295.6 182 1298.9 183.1 1302.3 184.2 1305.6 185.3 1309 186.5 1312.3 187.6 1315.7 188.8 1319 189.9 1322.3 191.1 1325.7 192.3 1329 193.5 1332.3 194.6 1335.6 195.8 1338.9 197 1342.2 198.2 1345.5 199.4 1348.8 200.6 1352 201.8 1355.3 203.1 1358.5 204.3 1361.8 205.5 1365 206.7 1368.2 208 1371.4 209.2 1374.6 210.5 1377.7 211.7 1380.9 213 1384 214.2 1387.1 215.5 1390.2 216.8 1393.3 218 1396.4 219.3 1399.4 220.6 1402.5 221.9 1405.5 223.1 1408.5 224.4 1411.5 225.7 1414.4 227 1417.4 228.3 1420.3 229.6 1423.2 230.9M380 232.2 379.2 233.5 378.3 234.8 377.5 236.1 376.8 237.5 376 238.8"/><path d="M416.3 209.2 419.3 208.2 422.3 207.3 425.3 206.3 428.3 205.4 431.3 204.5 434.3 203.6 437.3 202.7 440.3 201.8 443.3 200.9 446.3 200 449.3 199.1 452.3 198.3 455.3 197.4 458.3 196.6 461.3 195.7 464.2 194.9 467.2 194.1 470.1 193.3 473.1 192.4 476 191.7 478.9 190.9 481.9 190.1 484.8 189.3 487.6 188.6 490.5 187.8 493.4 187.1 496.3 186.3 499.1 185.6 501.9 184.9 504.7 184.2 507.5 183.5 510.3 182.8 513.1 182.2 515.8 181.5 518.6 180.9 521.3 180.2 524 179.6 526.7 179 529.4 178.4 532 177.8 534.6 177.2 537.2 176.7 539.8 176.1 542.4 175.6 544.9 175.1"/><path d="M398 222 397.8 223 397.6 224 397.3 225 397.1 226 396.9 227 396.8 228 396.6 229.1 396.4 230.1 396.2 231.1 396.1 232.2 395.9 233.2 395.8 234.2 395.7 235.3 395.6 236.3 395.5 237.4 395.4 238.5 395.3 239.5 395.2 240.6 395.1 241.7 395.1 242.8 395.1 243.8 395 244.9 395 246 395 247.1 395.1 248.2 395.1 249.3 395.1 250.4 395.2 251.5 395.3 252.6 395.4 253.7 395.5 254.9 395.6 256 395.7 257.1 395.9 258.2 396.1 259.3 396.2 260.5 396.5 261.6 396.7 262.7 396.9 263.9 397.2 265 397.4 266.1 397.7 267.3 398 268.4 398.3 269.6 398.7 270.7 399 271.9 399.4 273 399.8 274.2 400.2 275.4 400.6 276.5 401.1 277.7 401.5 278.8 402 280"/><path d="M362.9 255.5 365.1 254 367.3 252.4 369.5 250.8 371.8 249.2 374.1 247.7 376.5 246.1 378.8 244.5 381.3 242.9 383.7 241.4 386.2 239.8 388.7 238.2 391.3 236.7 393.9 235.1 396.5 233.5 399.2 231.9 401.9 230.4 404.6 228.8 407.4 227.2 410.2 225.7 413 224.1 415.9 222.6 418.8 221 421.8 219.4 424.7 217.9 427.7 216.3 430.8 214.7 433.8 213.2 436.9 211.6 440 210.1 443.2 208.5 446.4 207 449.6 205.4 452.8 203.9 456.1 202.3 459.4 200.8 462.7 199.2 466.1 197.7 469.4 196.1 472.9 194.6 476.3 193.1 479.8 191.5"/><path d="M576.7 236.7 578.2 236.9 579.7 237 581.2 237.2 582.7 237.4 584.1 237.5 585.6 237.7 587.1 237.9 588.5 238.1 590 238.3 591.5 238.6 592.9 238.8 594.3 239 595.8 239.2 597.2 239.5 598.6 239.7 600.1 240 601.5 240.2 602.9 240.5 604.3 240.8 605.7 241.1 607.1 241.4 608.5 241.6 609.9 241.9 611.3 242.2 612.7 242.6 614.1 242.9 615.5 243.2 616.9 243.5 618.3 243.9 619.6 244.2 621 244.6 622.4 244.9 623.8 245.3 625.1 245.6 626.5 246 627.8 246.4 629.2 246.8 630.6 247.1 631.9 247.5 633.3 247.9 634.6 248.3 636 248.7 637.3 249.2 638.7 249.6 640 250"/><path d="M950 199.8 951.7 200.2 953.4 200.5 955 200.9 956.7 201.3 958.4 201.7 960.1 202.1 961.8 202.5 963.5 202.9 965.1 203.3 966.8 203.8 968.5 204.2 970.2 204.7 971.9 205.1 973.6 205.6 975.3 206.1 977 206.6 978.7 207.1 980.5 207.6 982.2 208.1 983.9 208.6 985.6 209.2 987.3 209.7 989 210.3 990.7 210.8 992.5 211.4 994.2 212 995.9 212.6 997.6 213.2 999.4 213.8 1001.1 214.4 1002.8 215 1004.6 215.7 1006.3 216.3 1008 216.9 1009.8 217.6 1011.5 218.2 1013.3 218.9 1015 219.6 1016.7 220.3 1018.5 221 1020.2 221.7 1022 222.4 1023.7 223.1 1025.5 223.8 1027.2 224.5 1029 225.2 1030.7 226 1032.5 226.7 1034.2 227.5 1036 228.2 1037.7 229 1039.5 229.7 1041.2 230.5 1043 231.3 1044.7 232.1 1046.5 232.9 1048.2 233.7 1050 234.5 1051.7 235.3 1053.5 236.1 1055.2 236.9 1056.9 237.7 1058.7 238.5 1060.4 239.4 1062.2 240.2 1063.9 241.1 1065.7 241.9 1067.4 242.8 1069.1 243.6 1070.9 244.5 1072.6 245.3 1074.3 246.2 1076.1 247.1 1077.8 248 1079.5 248.8 1081.2 249.7 1082.9 250.6 1084.7 251.5 1086.4 252.4 1088.1 253.3 1089.8 254.2 1091.5 255.1 1093.2 256 1094.9 257 1096.6 257.9 1098.3 258.8 1100 259.7 1101.7 260.7 1103.3 261.6"/><path d="M950 128.3 951.6 129.5 953.2 130.8 954.8 132.1 956.3 133.4 957.9 134.7 959.5 136 961.1 137.3 962.7 138.7 964.3 140 965.9 141.3 967.4 142.7 969 144 970.6 145.4 972.2 146.8 973.8 148.1 975.4 149.5 976.9 150.9 978.5 152.3 980.1 153.7 981.7 155.1 983.2 156.5 984.8 157.9 986.4 159.3 987.9 160.7 989.5 162.1 991.1 163.6 992.6 165 994.2 166.4 995.7 167.9 997.3 169.3 998.8 170.7 1000.4 172.2 1001.9 173.6 1003.4 175.1 1005 176.5 1006.5 178 1008 179.5 1009.5 180.9 1011 182.4 1012.5 183.9 1014 185.3 1015.5 186.8 1017 188.3 1018.5 189.8 1019.9 191.2 1021.4 192.7 1022.9 194.2 1024.3 195.7 1025.8 197.2 1027.2 198.7 1028.6 200.2 1030.1 201.7"/><path d="M1081.3 199.8 1081.8 198.7 1082.4 197.7 1082.9 196.7 1083.4 195.7 1083.9 194.6 1084.5 193.6 1085 192.7 1085.5 191.7 1086 190.7 1086.6 189.7 1087.1 188.8 1087.6 187.8 1088.1 186.9 1088.7 185.9 1089.2 185 1089.8 184.1 1090.3 183.2 1090.8 182.2 1091.4 181.4 1092 180.5 1092.5 179.6 1093.1 178.7 1093.7 177.9 1094.2 177 1094.8 176.2 1095.4 175.4 1096 174.6 1096.6 173.8 1097.2 173 1097.8 172.2 1098.5 171.4 1099.1 170.6 1099.8 169.9 1100.4 169.2 1101.1 168.4 1101.8 167.7 1102.5 167 1103.2 166.4 1103.9 165.7 1104.6 165 1105.3 164.4 1106.1 163.7 1106.9 163.1 1107.6 162.5 1108.4 161.9 1109.3 161.4 1110.1 160.8 1110.9 160.2 1111.8 159.7 1112.7 159.2 1113.6 158.7 1114.5 158.2 1115.4 157.7 1116.4 157.3 1117.4 156.8 1118.4 156.4 1119.4 156 1120.5 155.6 1121.5 155.2 1122.6 154.9 1123.7 154.5 1124.9 154.2 1126 153.9 1127.2 153.6 1128.4 153.4 1129.7 153.1 1130.9 152.9 1132.2 152.6 1133.5 152.4 1134.9 152.3 1136.3 152.1 1137.7 151.9 1139.1 151.8 1140.5 151.7 1142 151.6 1143.5 151.5 1145.1 151.5 1146.7 151.4 1148.3 151.4 1149.9 151.4 1151.6 151.4 1153.3 151.5 1155 151.5 1156.8 151.6 1158.6 151.7 1160.4 151.8 1162.3 151.9 1164.1 152.1 1166.1 152.2 1168 152.4 1170 152.6 1172 152.8 1174.1 153 1176.1 153.3 1178.2 153.6 1180.4 153.8 1182.6 154.1 1184.8 154.5 1187 154.8 1189.2 155.2 1191.5 155.5 1193.9 155.9 1196.2 156.3 1198.6 156.7 1201 157.2 1203.4 157.6 1205.9 158.1 1208.4 158.6 1210.9 159.1 1213.5 159.6 1216.1 160.1 1218.7 160.7 1221.3 161.2 1223.9 161.8 1226.6 162.4 1229.3 163 1232.1 163.6 1234.8 164.2 1237.6 164.9 1240.4 165.5 1243.2 166.2 1246 166.9 1248.9 167.6"/><path d="M1149.4 207.3 1149.7 206.2 1149.9 205.2 1150.1 204.1 1150.4 203 1150.6 202 1150.8 200.9 1151 199.8 1151.3 198.8 1151.5 197.8 1151.7 196.7 1151.9 195.7 1152.1 194.7 1152.4 193.7 1152.6 192.7 1152.8 191.7 1153 190.7 1153.3 189.7 1153.5 188.7 1153.7 187.8 1153.9 186.8 1154.2 185.9 1154.4 184.9 1154.7 184 1154.9 183.1 1155.2 182.2 1155.4 181.3 1155.7 180.4 1155.9 179.5 1156.2 178.6 1156.5 177.7 1156.8 176.9 1157.1 176 1157.4 175.2 1157.7 174.4 1158.1 173.6 1158.4 172.8 1158.7 172 1159.1 171.2 1159.5 170.4 1159.9 169.7 1160.3 168.9 1160.7 168.2 1161.1 167.5 1161.5 166.8 1162 166.1 1162.5 165.4 1162.9 164.7 1163.4 164.1 1164 163.4 1164.5 162.8 1165.1 162.2 1165.6 161.6 1166.2 161 1166.9 160.4 1167.5 159.9 1168.2 159.3 1168.9 158.8 1169.6 158.3 1170.3 157.8 1171.1 157.3 1171.9 156.9 1172.7 156.4 1173.5 156 1174.4 155.6 1175.3 155.2 1176.2 154.8 1177.1 154.4 1178.1 154.1 1179.1 153.8 1180.2 153.4 1181.2 153.1 1182.4 152.9 1183.5 152.6 1184.7 152.4"/><path d="M1155.3 213.5 1156.1 212.8 1157 212.1 1157.9 211.4 1158.8 210.7 1159.7 210.1 1160.5 209.4 1161.4 208.8 1162.3 208.1 1163.2 207.5 1164.2 206.8 1165.1 206.2 1166 205.6 1166.9 205 1167.8 204.4 1168.8 203.8 1169.7 203.3 1170.7 202.7 1171.6 202.1 1172.6 201.6 1173.6 201.1 1174.6 200.5 1175.5 200 1176.5 199.5 1177.6 199 1178.6 198.5 1179.6 198 1180.6 197.6 1181.7 197.1 1182.7 196.6 1183.8 196.2 1184.9 195.8 1186 195.4 1187.1 195 1188.2 194.6 1189.3 194.2 1190.4 193.8 1191.6 193.4 1192.8 193.1 1193.9 192.7 1195.1 192.4 1196.3 192.1 1197.5 191.8 1198.8 191.5 1200 191.2 1201.3 190.9 1202.5 190.7 1203.8 190.4 1205.1 190.2 1206.4 190 1207.8 189.7 1209.1 189.5 1210.5 189.4 1211.9 189.2 1213.3 189 1214.7 188.9 1216.1 188.7 1217.6 188.6 1219 188.5 1220.5 188.4 1222 188.3 1223.6 188.2 1225.1 188.1 1226.6 188.1 1228.2 188 1229.8 188 1231.4 188 1233.1 188 1234.7 188 1236.4 188 1238.1 188 1239.8 188.1 1241.5 188.1 1243.2 188.2 1245 188.2 1246.8 188.3 1248.6 188.4 1250.4 188.6"/><path d="M475.4 217.9 477.8 217.2 480.2 216.6 482.6 216 485 215.4 487.3 214.8 489.7 214.2 492 213.6 494.3 213 496.7 212.5 499 211.9 501.3 211.4 503.6 210.8 505.9 210.3 508.2 209.8 510.5 209.2 512.8 208.7 515 208.2 517.3 207.7 519.5 207.3 521.7 206.8 524 206.3 526.2 205.9 528.4 205.4 530.6 205 532.7 204.6 534.9 204.1 537.1 203.7 539.2 203.3 541.3 202.9 543.5 202.6 545.6 202.2 547.7 201.8 549.7 201.5 551.8 201.2 553.9 200.8 555.9 200.5 557.9 200.2 559.9 199.9 561.9 199.6 563.9 199.3 565.9 199.1 567.9 198.8 569.8 198.6 571.7 198.3 573.7 198.1 575.6 197.9 577.5 197.7 579.3 197.5 581.2 197.3 583.1 197.1 584.9 197 586.7 196.8 588.5 196.7 590.3 196.6 592.1 196.5 593.8 196.4 595.6 196.3 597.3 196.2 599.1 196.1 600.8 196.1 602.5 196 604.1 196 605.8 195.9 607.4 195.9 609.1 195.9 610.7 195.9 612.3 195.9 613.9 196 615.5 196 617.1 196.1 618.6 196.1 620.2 196.2 621.7 196.3 623.2 196.4 624.7 196.5 626.2 196.6 627.7 196.7 629.2 196.9 630.6 197 632 197.2 633.5 197.4 634.9 197.6 636.3 197.8 637.7 198 639.1 198.2 640.5 198.4 641.8 198.6 643.2 198.9 644.5 199.1 645.8 199.4 647.2 199.7 648.5 200 649.8 200.3 651.1 200.6 652.3 200.9 653.6 201.3 654.9 201.6 656.1 201.9 657.4 202.3 658.6 202.7 659.8 203.1 661 203.5 662.3 203.9 663.5 204.3 664.7 204.7 665.8 205.1 667 205.6 668.2 206 669.4 206.5 670.5 206.9 671.7 207.4 672.8 207.9 674 208.4 675.1 208.9 676.2 209.4 677.4 209.9 678.5 210.4 679.6 211 680.7 211.5 681.8 212.1 682.9 212.6 684 213.2 685.1 213.8 686.2 214.4 687.3 215 688.4 215.6 689.5 216.2 690.5 216.8 691.6 217.4 692.7 218 693.7 218.7 694.8 219.3 695.9 220 696.9 220.6 698 221.3 699.1 222 700.1 222.7 701.2 223.4 702.2 224.1 703.3 224.8 704.3 225.5 705.4 226.2 706.4 226.9 707.5 227.6 708.5 228.4 709.6 229.1 710.6 229.8 711.7 230.6 712.7 231.4 713.8 232.1 714.8 232.9 715.9 233.7 716.9 234.4 718 235.2 719 236 720.1 236.8 721.1 237.6 722.2 238.4 723.2 239.2 724.3 240 725.3 240.9 726.4 241.7 727.4 242.5 728.5 243.4 729.6 244.2 730.6 245 731.7 245.9 732.8 246.7 733.8 247.6 734.9 248.5 736 249.3 737.1 250.2 738.1 251.1 739.2 251.9 740.3 252.8 741.4 253.7"/><path d="M624.7 178.5 626.1 178.7 627.5 178.8 628.8 179.1 630.1 179.3 631.4 179.5 632.7 179.8 634 180 635.2 180.3 636.5 180.6 637.7 180.9 638.9 181.2 640.1 181.5 641.2 181.8 642.4 182.2 643.5 182.6 644.7 182.9 645.8 183.3 646.9 183.7 647.9 184.1 649 184.5 650.1 185 651.1 185.4 652.1 185.9 653.2 186.4 654.2 186.8 655.2 187.3 656.2 187.8 657.1 188.3 658.1 188.9 659.1 189.4 660 190 660.9 190.5 661.9 191.1 662.8 191.7 663.7 192.2 664.6 192.8 665.5 193.5 666.4 194.1 667.3 194.7 668.1 195.3 669 196 669.9 196.6 670.7 197.3 671.6 198 672.4 198.7 673.2 199.4 674.1 200.1 674.9 200.8 675.7 201.5 676.5 202.2 677.3 203 678.2 203.7 679 204.5 679.8 205.2 680.6 206 681.4 206.8 682.2 207.6 683 208.4 683.7 209.2 684.5 210 685.3 210.8 686.1 211.6 686.9 212.4 687.7 213.3 688.5 214.1 689.2 215 690 215.8 690.8 216.7 691.6 217.5 692.4 218.4 693.2 219.3 693.9 220.2 694.7 221.1 695.5 222 696.3 222.9 697.1 223.8 697.9 224.7 698.7 225.6 699.5 226.6 700.3 227.5 701.1 228.4 701.9 229.4 702.7 230.3 703.5 231.3 704.3 232.2 705.1 233.2 705.9 234.2 706.7 235.1 707.5 236.1 708.3 237.1 709.2 238.1 710 239.1 710.8 240 711.7 241 712.5 242 713.3 243.1 714.2 244.1 715 245.1 715.9 246.1 716.8 247.1 717.6 248.1 718.5 249.2 719.3 250.2 720.2 251.2"/><path d="M674 202.5 675.4 202.8 676.8 203.1 678.2 203.3 679.6 203.6 680.9 203.9 682.3 204.2 683.6 204.5 685 204.8 686.3 205.1 687.7 205.5 689 205.8 690.3 206.2 691.6 206.5 692.9 206.9 694.2 207.3 695.5 207.7 696.8 208.1 698 208.5 699.3 208.9 700.6 209.3 701.8 209.8 703.1 210.2 704.3 210.7 705.6 211.1 706.8 211.6 708 212.1 709.3 212.6 710.5 213.1 711.7 213.6 712.9 214.1 714.1 214.6 715.4 215.2 716.6 215.7 717.8 216.3 719 216.8 720.2 217.4 721.4 217.9 722.5 218.5 723.7 219.1 724.9 219.7 726.1 220.3 727.3 220.9 728.5 221.5 729.6 222.2 730.8 222.8 732 223.4 733.2 224.1 734.3 224.7 735.5 225.4 736.7 226 737.8 226.7 739 227.4 740.2 228.1 741.3 228.8 742.5 229.5 743.6 230.2 744.8 230.9 746 231.6 747.1 232.3 748.3 233 749.5 233.8 750.6 234.5 751.8 235.2 752.9 236 754.1 236.7 755.3 237.5 756.4 238.3 757.6 239 758.8 239.8 759.9 240.6 761.1 241.4 762.3 242.2 763.4 243 764.6 243.8 765.8 244.6 766.9 245.4 768.1 246.2 769.3 247 770.4 247.8 771.6 248.7 772.8 249.5 774 250.3 775.2 251.2 776.3 252 777.5 252.9"/><path d="M696.3 246 698.1 245.2 699.9 244.3 701.7 243.4 703.6 242.6 705.4 241.7 707.2 240.9 709 240 710.8 239.2 712.7 238.3 714.5 237.5 716.3 236.7 718.1 235.8 720 235 721.8 234.2 723.6 233.4 725.4 232.6 727.3 231.8 729.1 231 730.9 230.2 732.8 229.5 734.6 228.7 736.4 227.9 738.3 227.2 740.1 226.4 741.9 225.7 743.8 224.9 745.6 224.2 747.4 223.5 749.2 222.7 751.1 222 752.9 221.3 754.7 220.6 756.5 219.9 758.4 219.2 760.2 218.6 762 217.9 763.8 217.2 765.6 216.6 767.4 215.9 769.3 215.3 771.1 214.6 772.9 214 774.7 213.4 776.5 212.8 778.3 212.2 780.1 211.6"/></g><path d="M365.2 287.2 366.5 285.6 367.8 284.1 369.2 282.5 370.6 280.9 372 279.4 373.5 277.8 375 276.3 376.6 274.7 378.2 273.1 379.8 271.6 381.5 270 383.2 268.5 384.9 266.9 386.7 265.3 388.5 263.8 390.3 262.2 392.2 260.7 394.1 259.1 396.1 257.6 398.1 256 400.1 254.4 402.1 252.9 404.2 251.3 406.4 249.8 408.5 248.2 410.7 246.7 412.9 245.1 415.2 243.6 417.5 242 419.8 240.5 422.1 238.9 424.5 237.4 426.9 235.8 429.4 234.3 431.9 232.7 434.4 231.2 436.9 229.6 439.5 228.1 442.1 226.6 444.7 225 447.4 223.5 450.1 221.9 452.8 220.4 455.6 218.8 458.4 217.3 461.2 215.8 464 214.2 466.9 212.7 469.8 211.2 472.7 209.6 475.6 208.1 478.6 206.6 481.6 205 484.6 203.5 487.7 202 490.8 200.5 493.9 198.9 497 197.4 500.2 195.9 503.3 194.4 506.5 192.9 509.8 191.3 513 189.8 516.3 188.3 519.6 186.8 522.9 185.3 526.2 183.8 529.6 182.3 533 180.8 536.4 179.3 539.8 177.8 543.2 176.3 546.7 174.8 550.2 173.3 553.6 171.8 557.2 170.3 560.7 168.8 564.2 167.3 567.8 165.9 571.4 164.4 574.9 162.9 578.6 161.4 582.2 160 585.8 158.5 589.4 157 593.1 155.6 596.8 154.1 600.5 152.7 604.1 151.2 607.8 149.8 611.6 148.3 615.3 146.9 619 145.5 622.7 144.1 626.5 142.6 630.2 141.2 634 139.8 637.7 138.4 641.5 137 645.2 135.6 649 134.2 652.8 132.8 656.5 131.5 660.3 130.1 664 128.7 667.8 127.4 671.6 126 675.3 124.7 679.1 123.4 682.8 122 686.5 120.7 690.2 119.4 694 118.1 697.7 116.8 701.3 115.6 705 114.3 708.7 113 712.3 111.8 715.9 110.6 719.5 109.4 723.1 108.2 726.7 107 730.2 105.8 733.7 104.6 737.2 103.5 740.7 102.4 744.1 101.3 747.5 100.2 750.9 99.1 754.2 98.1 757.5 97.1 760.7 96.1 763.9 95.1 767.1 94.1 770.2 93.2 773.3 92.3 776.3 91.4 779.3 90.6 782.2 89.8 785.1 89 787.9 88.2 790.6 87.5 793.3 86.8 796 86.2 798.5 85.5 801 85 803.5 84.4 805.8 83.9 808.2 83.5 810.4 83.1 812.6 82.7 814.7 82.4 816.7 82.1 818.7 81.9 820.6 81.7 822.4 81.5 824.2 81.4 825.9 81.4 827.5 81.4 829.1 81.4 830.6 81.5 832 81.7 833.4 81.9 834.7 82.1 836 82.4 837.3 82.7 838.4 83.1 839.6 83.5 840.7 83.9 841.7 84.4 842.7 85 843.7 85.6 844.6 86.2 845.5 86.8 846.4 87.5 847.2 88.2 848 89 848.8 89.8 849.5 90.6 850.3 91.4 851 92.3 851.7 93.2 852.4 94.1 853 95.1 853.7 96.1 854.3 97.1 854.9 98.1 855.5 99.2 856.1 100.2 856.7 101.3 857.3 102.4 857.8 103.5 858.4 104.7 858.9 105.8 859.5 107 860 108.2 860.6 109.4 861.1 110.6 861.6 111.8 862.1 113.1 862.6 114.3 863.2 115.6 863.7 116.9" fill="none" stroke="#2ab07f" stroke-width="1.4" stroke-dasharray="1.4 2.3"/><path d="M486.7 330 487.4 328.6 488.2 327.2 488.9 325.8 489.7 324.5 490.5 323.1 491.3 321.7 492.1 320.3 493 318.9 493.9 317.5 494.8 316.1 495.7 314.7 496.7 313.3 497.6 311.9 498.6 310.5 499.7 309.1 500.7 307.7 501.8 306.3 502.8 304.9 503.9 303.6 505.1 302.2 506.2 300.8 507.4 299.4 508.6 298 509.8 296.6 511.1 295.2 512.3 293.8 513.6 292.4 514.9 291 516.2 289.7 517.6 288.3 518.9 286.9 520.3 285.5 521.7 284.1 523.2 282.7 524.6 281.3 526.1 280 527.6 278.6 529.1 277.2 530.6 275.8 532.2 274.4 533.7 273.1 535.3 271.7 536.9 270.3 538.6 268.9 540.2 267.6 541.9 266.2 543.6 264.8 545.3 263.5 547 262.1 548.7 260.7 550.5 259.4 552.2 258 554 256.6 555.8 255.3 557.7 253.9 559.5 252.6 561.4 251.2 563.3 249.8 565.1 248.5 567.1 247.1 569 245.8 570.9 244.5 572.9 243.1 574.9 241.8 576.8 240.4 578.9 239.1 580.9 237.8 582.9 236.4 585 235.1 587 233.8 589.1 232.4 591.2 231.1 593.3 229.8 595.4 228.5 597.5 227.2 599.7 225.8 601.8 224.5 604 223.2 606.2 221.9 608.4 220.6 610.6 219.3 612.8 218 615 216.7 617.2 215.4 619.5 214.2 621.7 212.9 624 211.6 626.3 210.3 628.5 209 630.8 207.8 633.1 206.5 635.4 205.3 637.8 204 640.1 202.7 642.4 201.5 644.8 200.3 647.1 199 649.5 197.8 651.8 196.6 654.2 195.3 656.5 194.1 658.9 192.9 661.3 191.7 663.7 190.5 666.1 189.3 668.4 188.1 670.8 186.9 673.2 185.7 675.6 184.6 678 183.4 680.4 182.2 682.8 181.1 685.3 179.9 687.7 178.8 690.1 177.7 692.5 176.5 694.9 175.4 697.3 174.3 699.7 173.2 702.1 172.1 704.5 171 706.9 169.9 709.3 168.8 711.7 167.8 714.1 166.7 716.5 165.7 718.8 164.6 721.2 163.6 723.6 162.6 726 161.6 728.3 160.6 730.7 159.6 733 158.6 735.4 157.6 737.7 156.7 740 155.7 742.4 154.8 744.7 153.9 747 153 749.3 152.1 751.6 151.2 753.8 150.3 756.1 149.5 758.3 148.6 760.6 147.8 762.8 147 765 146.2 767.2 145.4 769.4 144.6 771.6 143.9 773.8 143.1 775.9 142.4 778.1 141.7 780.2 141 782.3 140.3 784.4 139.7 786.5 139 788.6 138.4 790.6 137.8 792.7 137.2 794.7 136.6 796.7 136.1 798.7 135.6 800.7 135 802.7 134.5 804.6 134.1 806.5 133.6 808.5 133.2 810.4 132.8 812.2 132.4 814.1 132 816 131.7 817.8 131.4 819.6 131.1 821.4 130.8 823.2 130.5 825 130.3 826.8 130.1 828.5 129.9 830.2 129.7 831.9 129.6 833.6 129.4 835.3 129.3 837 129.3 838.7 129.2 840.3 129.2 842 129.2 843.6 129.2 845.2 129.2 846.8 129.3 848.4 129.4 850 129.5 851.5 129.6 853.1 129.8 854.6 130 856.2 130.2 857.7 130.4" fill="none" stroke="#2ab07f" stroke-width="1.4" stroke-dasharray="1.4 2.3"/><path d="M483.6 295.1 485 293.8 486.4 292.5 487.8 291.1 489.3 289.8 490.7 288.5 492.2 287.2 493.7 285.9 495.2 284.6 496.8 283.3 498.4 282 499.9 280.7 501.5 279.4 503.2 278.1 504.8 276.8 506.5 275.5 508.1 274.2 509.8 272.9 511.5 271.7 513.3 270.4 515 269.1 516.8 267.8 518.6 266.5 520.4 265.2 522.2 263.9 524 262.7 525.9 261.4 527.7 260.1 529.6 258.8 531.5 257.6 533.4 256.3 535.3 255 537.3 253.8 539.3 252.5 541.2 251.2 543.2 250 545.2 248.7 547.2 247.5 549.3 246.2 551.3 244.9 553.4 243.7 555.5 242.5 557.5 241.2 559.6 240 561.8 238.7 563.9 237.5 566 236.3 568.2 235 570.3 233.8 572.5 232.6 574.7 231.4 576.9 230.2 579.1 228.9 581.3 227.7 583.5 226.5 585.8 225.3 588 224.1 590.3 222.9 592.5 221.7 594.8 220.6 597.1 219.4 599.4 218.2 601.7 217 604 215.9 606.3 214.7 608.6 213.5 611 212.4 613.3 211.2 615.6 210.1 618 208.9 620.3 207.8 622.7 206.7 625 205.5 627.4 204.4 629.8 203.3 632.1 202.2 634.5 201.1 636.9 200 639.3 198.9 641.7 197.8 644 196.7 646.4 195.6 648.8 194.6 651.2 193.5 653.6 192.5 656 191.4 658.4 190.4 660.8 189.3 663.2 188.3 665.6 187.3 668 186.3 670.4 185.3 672.7 184.3 675.1 183.3 677.5 182.3 679.9 181.3 682.3 180.4 684.6 179.4 687 178.5 689.4 177.5 691.7 176.6 694.1 175.7 696.4 174.8 698.8 173.9 701.1 173 703.4 172.1 705.7 171.2 708.1 170.4 710.4 169.5 712.7 168.7 715 167.9 717.2 167.1 719.5 166.3 721.8 165.5 724 164.7 726.3 163.9 728.5 163.2 730.7 162.4 733 161.7 735.2 161 737.3 160.3 739.5 159.6 741.7 158.9 743.9 158.3 746 157.6 748.1 157 750.3 156.4 752.4 155.8 754.5 155.2 756.5 154.6 758.6 154.1 760.7 153.5 762.7 153 764.7 152.5 766.7 152 768.7 151.5 770.7 151.1 772.7 150.6 774.6 150.2 776.6 149.8 778.5 149.4 780.4 149 782.3 148.7 784.2 148.3 786.1 148 787.9 147.7 789.8 147.4 791.6 147.2 793.4 146.9 795.2 146.7 797 146.5 798.7 146.3 800.5 146.1 802.2 146 803.9 145.8 805.7 145.7 807.4 145.6 809 145.5 810.7 145.5 812.4 145.5 814 145.4 815.6 145.4 817.3 145.5 818.9 145.5 820.5 145.6 822.1 145.6 823.6 145.7 825.2 145.9 826.8 146 828.3 146.2 829.8 146.3 831.4 146.5 832.9 146.7 834.4 147 835.9 147.2 837.4 147.5 838.8 147.8 840.3 148.1 841.8 148.4 843.2 148.8 844.7 149.1 846.1 149.5" fill="none" stroke="#2ab07f" stroke-width="1.4" stroke-dasharray="1.4 2.3"/><path d="M1397 251.1 1395.4 249.4 1393.8 247.8 1392.1 246.2 1390.4 244.6 1388.7 242.9 1387 241.3 1385.2 239.7 1383.4 238.1 1381.5 236.4 1379.6 234.8 1377.7 233.2 1375.7 231.5 1373.7 229.9 1371.6 228.3 1369.5 226.7 1367.4 225 1365.3 223.4 1363.1 221.8 1360.9 220.2 1358.6 218.5 1356.3 216.9 1354 215.3 1351.7 213.7 1349.3 212 1346.8 210.4 1344.4 208.8 1341.9 207.2 1339.4 205.5 1336.8 203.9 1334.2 202.3 1331.6 200.7 1328.9 199 1326.2 197.4 1323.5 195.8 1320.8 194.2 1318 192.5 1315.2 190.9 1312.3 189.3 1309.4 187.7 1306.5 186 1303.6 184.4 1300.6 182.8 1297.6 181.2 1294.6 179.5 1291.5 177.9 1288.5 176.3 1285.3 174.7 1282.2 173.1 1279 171.4 1275.8 169.8 1272.6 168.2 1269.3 166.6 1266.1 164.9 1262.8 163.3 1259.4 161.7 1256.1 160.1 1252.7 158.5 1249.2 156.8 1245.8 155.2 1242.3 153.6 1238.8 152 1235.3 150.3 1231.8 148.7 1228.2 147.1 1224.6 145.5 1221 143.9 1217.4 142.2 1213.7 140.6 1210 139 1206.3 137.4 1202.6 135.8 1198.9 134.1 1195.1 132.5 1191.3 130.9 1187.5 129.3 1183.6 127.7 1179.8 126.1 1175.9 124.4 1172 122.8 1168.1 121.2 1164.2 119.6 1160.2 118 1156.3 116.4 1152.3 114.8 1148.3 113.1 1144.3 111.5 1140.2 109.9 1136.2 108.3 1132.1 106.7 1128.1 105.1 1124 103.5 1119.9 101.9 1115.7 100.3 1111.6 98.7 1107.5 97.1 1103.3 95.5 1099.1 93.9 1095 92.3 1090.8 90.7 1086.6 89.1 1082.4 87.5 1078.1 85.9 1073.9 84.3 1069.7 82.7 1065.5 81.1 1061.2 79.5 1057 77.9 1052.7 76.4 1048.5 74.8 1044.3 73.2 1040 71.7 1035.8 70.1 1031.6 68.5 1027.3 67 1023.1 65.4M786.7 63.9 791.9 62.4 797.2 60.9 802.4 59.3 807.5 57.9 812.7 56.4 817.8 54.9 822.8 53.5 827.8 52 832.7 50.6 837.5 49.3 842.3 47.9 846.9 46.6 851.3 45.4 855.6 44.2 859.7 43.1 863.5 42.1 867.1 41.2 870.3 40.5 873.2 39.9 875.6 39.5 877.6 39.3 879.3 39.3 880.5 39.5 881.4 39.9 882 40.5 882.4 41.3 882.6 42.2 882.7 43.2 882.6 44.2 882.5 45.4 882.3 46.7 882 47.9 881.7 49.3 881.4 50.6 881 52.1 880.6 53.5 880.2 54.9 879.8 56.4 879.4 57.9 879 59.4 878.5 60.9 878.1 62.4 877.6 63.9 877.2 65.5 876.7 67 876.3 68.6 875.8 70.1 875.3 71.7 874.9 73.3 874.4 74.8 874 76.4 873.5 78 873 79.6 872.6 81.1 872.1 82.7 871.7 84.3 871.2 85.9 870.7 87.5 870.3 89.1 869.8 90.7 869.4 92.3 868.9 93.9 868.5 95.5 868 97.1 867.6 98.7 867.1 100.3 866.7 101.9 866.3 103.5 865.8 105.1 865.4 106.7 865 108.3 864.5 110 864.1 111.6 863.7 113.2" fill="none" stroke="#2ab07f" stroke-width="1.4" stroke-dasharray="1.4 2.3"/><path d="M419.1 260 420 258.4 421 256.9 422 255.3 423 253.7 424 252.1 425.1 250.6 426.3 249 427.4 247.4 428.6 245.8 429.8 244.3 431.1 242.7 432.4 241.1 433.7 239.5 435.1 238 436.5 236.4 437.9 234.8 439.3 233.2 440.8 231.7 442.3 230.1 443.9 228.5 445.5 227 447.1 225.4 448.7 223.8 450.4 222.3 452.1 220.7 453.8 219.1 455.6 217.6 457.4 216 459.2 214.4 461.1 212.9 463 211.3 464.9 209.8 466.8 208.2 468.8 206.6 470.8 205.1 472.8 203.5 474.9 202 477 200.4 479.1 198.9 481.2 197.3 483.4 195.8 485.6 194.2 487.8 192.7 490 191.1 492.3 189.6 494.6 188 496.9 186.5 499.3 185 501.6 183.4 504 181.9 506.5 180.3 508.9 178.8 511.4 177.3 513.8 175.7 516.4 174.2 518.9 172.7 521.4 171.2 524 169.6 526.6 168.1 529.2 166.6 531.8 165.1 534.5 163.6 537.2 162.1 539.9 160.6 542.6 159.1 545.3 157.6 548 156.1 550.8 154.6 553.6 153.1 556.3 151.6 559.1 150.1 562 148.6 564.8 147.1 567.6 145.7 570.5 144.2 573.3 142.7 576.2 141.2 579.1 139.8 582 138.3 584.9 136.9 587.8 135.4 590.7 134 593.6 132.6 596.5 131.1 599.4 129.7 602.4 128.3 605.3 126.9 608.2 125.5 611.1 124.1 614.1 122.7M1186.2 121.3 1181.5 119.9 1176.9 118.5 1172.2 117.2 1167.6 115.8 1162.9 114.5 1158.3 113.1 1153.7 111.8 1149.1 110.5 1144.5 109.2 1140 107.9 1135.4 106.6" fill="none" stroke="#80d34d" stroke-width="1.4" stroke-dasharray="1.4 2.3"/><path d="M463.5 294.7 463.6 293.2 463.6 291.6 463.7 290 463.9 288.5 464 286.9 464.2 285.4 464.4 283.8 464.7 282.2 464.9 280.7 465.2 279.1 465.6 277.6 466 276 466.4 274.5 466.8 272.9 467.2 271.3 467.7 269.8 468.3 268.2 468.8 266.7 469.4 265.1 470 263.6 470.6 262 471.3 260.5 472 258.9 472.7 257.4 473.5 255.8 474.3 254.3 475.1 252.7 475.9 251.2 476.8 249.6 477.7 248.1 478.6 246.5 479.6 245 480.6 243.4 481.6 241.9 482.6 240.3 483.7 238.8 484.8 237.2 485.9 235.7 487.1 234.1 488.2 232.6 489.5 231.1 490.7 229.5 492 228 493.2 226.4 494.6 224.9 495.9 223.4 497.3 221.8 498.7 220.3 500.1 218.8 501.5 217.2 503 215.7 504.5 214.2 506 212.6 507.6 211.1 509.2 209.6 510.8 208 512.4 206.5 514 205 515.7 203.5 517.4 202 519.1 200.4 520.9 198.9 522.6 197.4 524.4 195.9 526.2 194.4 528 192.9 529.9 191.3 531.8 189.8 533.7 188.3 535.6 186.8 537.5 185.3 539.5 183.8 541.5 182.3 543.5 180.8 545.5 179.3 547.5 177.8 549.6 176.3 551.6 174.8 553.7 173.4 555.8 171.9 558 170.4 560.1 168.9 562.3 167.4 564.4 166 566.6 164.5 568.8 163 571.1 161.6 573.3 160.1 575.5 158.6 577.8 157.2 580.1 155.7 582.4 154.3 584.7 152.8 587 151.4 589.3 150 591.6 148.5 593.9 147.1 596.3 145.7 598.6 144.2 601 142.8 603.3 141.4 605.7 140 608.1 138.6 610.5 137.2 612.8 135.8 615.2 134.5 617.6 133.1 620 131.7 622.4 130.4 624.7 129 627.1 127.7 629.5 126.3 631.8 125 634.2 123.7 636.5 122.3 638.9 121 641.2 119.7 643.5 118.5 645.8 117.2 648.1 115.9 650.4 114.7 652.6 113.4 654.8 112.2 657 111 659.2 109.8 661.4 108.6 663.5 107.4 665.6 106.2 667.6 105.1 669.6 104 671.6 102.9 673.5 101.8M1128.2 100.7 1123.9 99.6 1119.7 98.6 1115.5 97.6 1111.4 96.6 1107.3 95.6 1103.3 94.7 1099.4 93.8 1095.5 92.9" fill="none" stroke="#80d34d" stroke-width="1.4" stroke-dasharray="1.4 2.3"/><path d="M518.4 295.4 518.1 293.9 517.9 292.5 517.6 291 517.4 289.5 517.3 288 517.1 286.5 517 285.1 516.9 283.6 516.8 282.1 516.7 280.6 516.7 279.1 516.7 277.7 516.7 276.2 516.7 274.7 516.8 273.2 516.9 271.7 517 270.3 517.1 268.8 517.3 267.3 517.5 265.9 517.7 264.4 517.9 262.9 518.1 261.4 518.4 260 518.7 258.5 519 257 519.4 255.6 519.7 254.1 520.1 252.6 520.5 251.2 520.9 249.7 521.4 248.3 521.9 246.8 522.4 245.3 522.9 243.9 523.4 242.4 524 241 524.6 239.5 525.2 238.1 525.8 236.6 526.5 235.2 527.1 233.7 527.8 232.3 528.5 230.8 529.3 229.4 530 227.9 530.8 226.5 531.6 225.1 532.4 223.6 533.2 222.2 534.1 220.8 535 219.3 535.9 217.9 536.8 216.5 537.7 215.1 538.6 213.6 539.6 212.2 540.6 210.8 541.6 209.4 542.6 208 543.6 206.6 544.7 205.2 545.8 203.8 546.9 202.4 548 201 549.1 199.6 550.2 198.2 551.4 196.8 552.5 195.4 553.7 194 554.9 192.6 556.1 191.3 557.3 189.9 558.5 188.5 559.8 187.2 561 185.8 562.3 184.4 563.6 183.1 564.9 181.7 566.2 180.4 567.5 179 568.8 177.7 570.1 176.4 571.5 175.1 572.8 173.7 574.2 172.4 575.5 171.1 576.9 169.8 578.3 168.5 579.7 167.2 581 165.9 582.4 164.6 583.8 163.3 585.2 162.1 586.6 160.8 588 159.6 589.4 158.3 590.8 157.1 592.2 155.8 593.6 154.6 595 153.4 596.4 152.2 597.8 151 599.2 149.8 600.5 148.6 601.9 147.4 603.3 146.2 604.6 145.1 606 143.9 607.3 142.8 608.6 141.6 609.9 140.5 611.2 139.4 612.5 138.3 613.8 137.2 615 136.1 616.2 135.1 617.4 134 618.6 133 619.8 132 620.9 131 622 130 623.1 129 624.1 128 625.1 127.1 626.1 126.2 627 125.2 628 124.4 628.8 123.5 629.7 122.6 630.4 121.8 631.2 120.9 631.9 120.1 632.5 119.4 633.1 118.6 633.7 117.8 634.2 117.1 634.6 116.4 635 115.7 635.3 115.1M1166.9 114.5 1163.7 113.9 1160.6 113.3 1157.5 112.7 1154.5 112.2 1151.6 111.7 1148.7 111.2 1145.9 110.8 1143.2 110.3" fill="none" stroke="#80d34d" stroke-width="1.4" stroke-dasharray="1.4 2.3"/><path d="M685.6 323.3 685.2 321.8 684.7 320.2 684.3 318.6 683.9 317 683.5 315.5 683.1 313.9 682.8 312.3 682.4 310.7 682.1 309.2 681.8 307.6 681.5 306 681.2 304.4 680.9 302.9 680.7 301.3 680.4 299.7 680.2 298.1 680 296.5 679.8 295 679.6 293.4 679.5 291.8 679.3 290.2 679.2 288.7 679.1 287.1 679 285.5 678.9 283.9 678.9 282.4 678.8 280.8 678.8 279.2 678.8 277.7 678.8 276.1 678.8 274.5 678.8 272.9 678.9 271.4 678.9 269.8 679 268.2 679.1 266.6 679.2 265.1 679.3 263.5 679.5 261.9 679.6 260.4 679.8 258.8 680 257.2 680.2 255.7 680.4 254.1 680.6 252.5 680.9 250.9 681.2 249.4 681.4 247.8 681.7 246.2 682 244.7 682.4 243.1 682.7 241.6 683.1 240 683.4 238.4 683.8 236.9 684.2 235.3 684.6 233.7 685.1 232.2 685.5 230.6 686 229.1 686.5 227.5 687 225.9 687.5 224.4 688 222.8 688.5 221.3 689.1 219.7 689.6 218.2 690.2 216.6 690.8 215 691.4 213.5 692 211.9 692.6 210.4 693.3 208.8 694 207.3 694.6 205.7 695.3 204.2 696 202.7 696.7 201.1 697.4 199.6 698.2 198 698.9 196.5 699.7 194.9 700.5 193.4 701.3 191.9 702.1 190.3 702.9 188.8 703.7 187.3 704.6 185.7 705.4 184.2 706.3 182.7 707.1 181.1 708 179.6 708.9 178.1 709.8 176.6 710.8 175.1 711.7 173.5 712.6 172 713.6 170.5 714.5 169 715.5 167.5 716.5 166 717.5 164.5 718.5 163 719.5 161.5 720.5 160 721.5 158.5 722.6 157 723.6 155.5 724.7 154 725.7 152.5 726.8 151.1 727.8 149.6 728.9 148.1 730 146.6 731.1 145.2 732.2 143.7 733.3 142.3 734.4 140.8 735.5 139.4 736.6 137.9 737.7 136.5 738.9 135 740 133.6 741.1 132.2 742.3 130.8 743.4 129.4 744.5 128 745.6 126.6 746.8 125.2 747.9 123.8 749 122.4 750.2 121 751.3 119.7 752.4 118.3 753.5 116.9 754.6 115.6 755.7 114.3 756.8 113 757.9 111.6 759 110.3 760 109.1 761.1 107.8 762.1 106.5 763.2 105.3 764.2 104 765.2 102.8 766.1 101.6 767.1 100.4 768 99.2 768.9 98.1 769.8 96.9 770.6 95.8 771.5 94.7 772.2 93.6 773 92.5 773.7 91.5 774.4 90.5 775 89.5 775.5 88.5 776.1 87.6 776.5 86.7 776.9 85.8 777.3 85 777.6 84.1 777.8 83.4 777.9 82.6 778 81.9 777.9 81.3 777.8 80.6 777.6 80 777.3 79.5 776.9 79 776.4 78.5 775.8 78.1 775.1 77.8 774.2 77.5 773.2 77.2 772.1 77 770.9 76.9 769.6 76.7 768.1 76.7 766.4 76.7 764.7 76.7 762.8 76.8 760.7 77 758.5 77.2 756.2 77.5 753.7 77.8 751.1 78.1 748.4 78.5 745.5 79 742.5 79.5 739.3 80 736.1 80.6M1070.4 81.2 1070.8 81.9 1071.4 82.6 1072.1 83.3 1072.9 84.1" fill="none" stroke="#80d34d" stroke-width="1.4" stroke-dasharray="1.4 2.3"/><path d="M482.6 289.2 484.3 288.9 486 288.5 487.8 288.2 489.5 287.9 491.2 287.5 493 287.2 494.7 286.9 496.4 286.6 498.1 286.3 499.9 286 501.6 285.6 503.3 285.3 505.1 285 506.8 284.7 508.5 284.4 510.3 284.1 512 283.8 513.7 283.5 515.4 283.3 517.2 283 518.9 282.7 520.6 282.4 522.4 282.1 524.1 281.9 525.8 281.6 527.5 281.3 529.3 281 531 280.8 532.7 280.5 534.5 280.3 536.2 280 537.9 279.8 539.6 279.5 541.3 279.3 543.1 279 544.8 278.8 546.5 278.5 548.2 278.3 550 278.1 551.7 277.9 553.4 277.6 555.1 277.4 556.8 277.2 558.5 277 560.2 276.8 562 276.6 563.7 276.4 565.4 276.2 567.1 276 568.8 275.8 570.5 275.6 572.2 275.4 573.9 275.2 575.6 275 577.3 274.9 579 274.7 580.7 274.5 582.4 274.4 584.1 274.2 585.8 274 587.5 273.9 589.2 273.7 590.9 273.6 592.6 273.4 594.3 273.3 596 273.2 597.6 273 599.3 272.9" fill="none" stroke="#bddf26" stroke-width="1.4" stroke-dasharray="1.4 2.3"/><path d="M522.8 273.2 524 273.7 525.3 274.3 526.6 274.8 527.9 275.3 529.1 275.9 530.4 276.4 531.7 277 533 277.5 534.3 278.1 535.6 278.6 536.8 279.2 538.1 279.8 539.4 280.3 540.7 280.9 542 281.5 543.3 282 544.6 282.6 545.9 283.2 547.2 283.8 548.5 284.3 549.8 284.9 551.1 285.5 552.5 286.1 553.8 286.7 555.1 287.3 556.4 287.9 557.8 288.5 559.1 289.1 560.4 289.7 561.8 290.3 563.1 290.9 564.4 291.5 565.8 292.1 567.1 292.7 568.5 293.3 569.8 293.9 571.2 294.6 572.6 295.2 573.9 295.8 575.3 296.4 576.7 297 578 297.7 579.4 298.3 580.8 298.9 582.2 299.6 583.6 300.2 584.9 300.8 586.3 301.5 587.7 302.1" fill="none" stroke="#bddf26" stroke-width="1.4" stroke-dasharray="1.4 2.3"/><path d="M1342.7 233.4 1344.4 233.4 1346.1 233.5 1347.8 233.5 1349.5 233.6 1351.2 233.6 1352.9 233.7 1354.6 233.8 1356.4 233.9 1358.1 234 1359.9 234.1 1361.6 234.2 1363.4 234.3 1365.2 234.4 1367 234.6 1368.8 234.7 1370.6 234.8 1372.4 235 1374.2 235.1 1376 235.3 1377.9 235.5 1379.7 235.7 1381.6 235.8 1383.4 236 1385.3 236.2 1387.2 236.4 1389.1 236.7 1391 236.9 1392.9 237.1 1394.8 237.3 1396.7 237.6 1398.6 237.8 1400.5 238.1 1402.5 238.3 1404.4 238.6 1406.4 238.9 1408.3 239.1 1410.3 239.4 1412.3 239.7 1414.2 240 1416.2 240.3 1418.2 240.6 1420.2 240.9 1422.2 241.3 1424.2 241.6 1426.2 241.9 1428.3 242.3 1430.3 242.6 1432.3 243 1434.4 243.3 1436.4 243.7 1438.5 244.1 1440.5 244.4M363 244.8 364.1 245.2 365.2 245.6 366.3 246 367.4 246.4 368.5 246.8 369.6 247.2 370.7 247.7 371.8 248.1 372.9 248.5 373.9 248.9 375 249.4 376.1 249.8 377.2 250.3 378.2 250.8 379.3 251.2 380.3 251.7 381.4 252.2 382.5 252.6 383.5 253.1 384.6 253.6 385.6 254.1 386.7 254.6 387.7 255.1 388.8 255.6 389.8 256.1 390.9 256.6 391.9 257.2 392.9 257.7 394 258.2 395 258.8 396.1 259.3 397.1 259.8 398.2 260.4 399.2 260.9 400.3 261.5 401.3 262.1 402.4 262.6 403.4 263.2 404.5 263.8 405.5 264.3 406.6 264.9 407.6 265.5 408.7 266.1 409.8 266.7 410.8 267.3 411.9 267.9 413 268.5 414 269.1 415.1 269.7 416.2 270.3 417.3 270.9 418.3 271.5 419.4 272.2 420.5 272.8 421.6 273.4 422.7 274 423.8 274.7 424.9 275.3 426 275.9 427.1 276.6 428.2 277.2 429.4 277.9 430.5 278.5 431.6 279.2 432.7 279.9 433.9 280.5 435 281.2 436.2 281.8 437.3 282.5 438.5 283.2 439.6 283.8 440.8 284.5 441.9 285.2 443.1 285.9 444.3 286.6 445.5 287.2 446.7 287.9 447.9 288.6 449.1 289.3 450.3 290 451.5 290.7 452.7 291.4 453.9 292.1 455.1 292.8 456.4 293.5 457.6 294.2 458.8 294.9 460.1 295.6 461.4 296.3 462.6 297 463.9 297.7 465.2 298.4 466.4 299.1 467.7 299.9 469 300.6 470.3 301.3 471.6 302 472.9 302.7 474.2 303.4 475.6 304.2 476.9 304.9 478.2 305.6 479.6 306.3 480.9 307.1 482.3 307.8 483.6 308.5 485 309.2 486.4 310 487.7 310.7 489.1 311.4 490.5 312.2 491.9 312.9 493.3 313.6 494.7 314.3 496.1 315.1 497.6 315.8 499 316.5 500.4 317.3 501.9 318" fill="none" stroke="#25858e" stroke-width="1.4" stroke-dasharray="1.4 2.3"/><path d="M364.2 306.7L375 290.8" fill="none" stroke="#2ab07f" stroke-width="1.8" stroke-linecap="round"/><path d="M484.2 334.2L486.7 330" fill="none" stroke="#2ab07f" stroke-width="1.8" stroke-linecap="round"/><path d="M480.8 296.7L482.5 294" fill="none" stroke="#2ab07f" stroke-width="1.8" stroke-linecap="round"/><path d="M1404 260L1396 251" fill="none" stroke="#2ab07f" stroke-width="1.8" stroke-linecap="round"/><path d="M415 265.8L419.2 260" fill="none" stroke="#80d34d" stroke-width="1.8" stroke-linecap="round"/><path d="M465 317.5L462.5 295" fill="none" stroke="#80d34d" stroke-width="1.8" stroke-linecap="round"/><path d="M520 305.8L517.5 295.8" fill="none" stroke="#80d34d" stroke-width="1.8" stroke-linecap="round"/><path d="M690 336.7L685.8 323.3" fill="none" stroke="#80d34d" stroke-width="1.8" stroke-linecap="round"/><path d="M472.8 292L482.5 289.7" fill="none" stroke="#bddf26" stroke-width="1.8" stroke-linecap="round"/><path d="M521 272L522.7 273.3" fill="none" stroke="#bddf26" stroke-width="1.8" stroke-linecap="round"/><path d="M1332 235L1344 234.5" fill="none" stroke="#25858e" stroke-width="1.8" stroke-linecap="round"/><g fill="#ff6b3d"><circle cx="364.2" cy="306.7" r="1.2"/><circle cx="484.2" cy="334.2" r="1.2"/><circle cx="480.8" cy="296.7" r="1.2"/><circle cx="1404" cy="260" r="1.2"/><circle cx="415" cy="265.8" r="1.2"/><circle cx="465" cy="317.5" r="1.2"/><circle cx="520" cy="305.8" r="1.2"/><circle cx="690" cy="336.7" r="1.2"/><circle cx="472.8" cy="292" r="1.2"/><circle cx="521" cy="272" r="1.2"/><circle cx="1332" cy="235" r="1.2"/></g><path d="M1080.9 95.2 1079.8 94.8 1078.6 94.4 1077.5 94 1076.4 93.6 1075.2 93.2 1074.1 92.8 1073 92.4 1071.8 92 1070.7 91.6 1069.6 91.2 1068.5 90.7 1067.4 90.3 1066.2 89.9 1065.1 89.5 1064 89 1062.9 88.6 1061.8 88.2 1060.7 87.8 1059.7 87.4 1058.6 86.9 1057.5 86.5 1056.4 86.1 1055.4 85.7 1054.3 85.2 1053.3 84.8 1052.2 84.4 1051.2 84 1050.2 83.5 1049.2 83.1 1048.2 82.7 1047.2 82.3 1046.2 81.8 1045.2 81.4 1044.3 81 1043.3 80.6 1042.4 80.2 1041.4 79.8 1040.5 79.4 1039.6 79 1038.7 78.6 1037.8 78.2 1037 77.8 1036.1 77.4 1035.3 77 1034.5 76.6 1033.7 76.2 1032.9 75.8 1032.1 75.5 1031.4 75.1 1030.6 74.7 1029.9 74.4 1029.2 74 1028.5 73.7 1027.9 73.3 1027.3 73 1026.6 72.6 1026.1 72.3 1025.5 72 1024.9 71.7 1024.4 71.4 1023.9 71.1 1023.4 70.8 1023 70.5 1022.6 70.2 1022.2 70 1021.8 69.7 1021.4 69.5 1021.1 69.2 1020.8 69 1020.6 68.8 1020.4 68.5 1020.2 68.3 1020 68.1 1019.9 68 1019.8 67.8 1019.7 67.6 1019.6 67.5 1019.6 67.3 1019.7 67.2 1019.7 67.1 1019.8 66.9 1019.9 66.8 1020.1 66.8 1020.3 66.7 1020.5 66.6 1020.8 66.6 1021.1 66.5 1021.4 66.5 1021.8 66.5 1022.2 66.5 1022.7 66.5 1023.1 66.5 1023.7 66.5 1024.2 66.6 1024.8 66.6 1025.4 66.7 1026.1 66.8 1026.7 66.8 1027.5 66.9M776.6 67.1 776.6 67.2 776.6 67.3 776.6 67.5 776.5 67.6 776.4 67.8 776.3 68 776.1 68.1 775.9 68.3 775.7 68.5 775.4 68.8 775.1 69 774.7 69.2 774.4 69.5 774 69.7 773.6 70 773.1 70.2 772.6 70.5 772.1 70.8 771.6 71.1 771 71.4 770.4 71.7 769.8 72 769.2 72.3 768.5 72.6 767.8 73 767.1 73.3 766.4 73.7 765.7 74 764.9 74.4 764.1 74.7 763.3 75.1 762.5 75.5 761.6 75.8 760.8 76.2 759.9 76.6 759 77 758.1 77.4 757.2 77.8 756.2 78.2 755.3 78.6 754.3 79 753.3 79.4 752.3 79.8 751.3 80.2 750.3 80.6 749.2 81 748.2 81.4 747.1 81.8 746.1 82.3 745 82.7 743.9 83.1 742.8 83.5 741.7 84 740.6 84.4 739.5 84.8 738.3 85.2 737.2 85.7 736 86.1 734.9 86.5 733.7 86.9 732.6 87.4 731.4 87.8 730.2 88.2 729 88.6 727.9 89 726.7 89.5 725.5 89.9 724.3 90.3 723.1 90.7 721.9 91.2 720.7 91.6 719.5 92 718.3 92.4 717 92.8 715.8 93.2 714.6 93.6 713.4 94 712.2 94.4 711 94.8 709.7 95.2 708.5 95.6 707.3 96 706.1 96.4 704.9 96.8 703.7 97.2 702.4 97.6 701.2 98 700 98.4 698.8 98.7 697.6 99.1 696.4 99.5 695.2 99.9 694 100.2 692.8 100.6 691.6 100.9 690.4 101.3 689.2 101.7 688 102 686.9 102.4 685.7 102.7 684.5 103 683.4 103.4 682.2 103.7 681 104 679.9 104.4 678.7 104.7 677.6 105 676.5 105.3 675.4 105.6 674.2 105.9 673.1 106.2 672 106.5 670.9 106.8 669.8 107.1 668.7 107.4 667.7 107.6 666.6 107.9 665.5 108.2 664.5 108.5 663.4 108.7 662.4 109 661.4 109.2 660.3 109.5 659.3 109.7 658.3 110 657.3 110.2 656.3 110.4 655.4 110.6 654.4 110.9 653.5 111.1 652.5 111.3 651.6 111.5 650.6 111.7 649.7 111.9 648.8 112.1 647.9 112.2 647.1 112.4 646.2 112.6 645.3 112.8 644.5 112.9 643.7 113.1 642.8 113.2 642 113.4 641.2 113.5 640.4 113.7 639.7 113.8 638.9 113.9 638.1 114.1M1167.1 114.2 1167 114.3 1166.9 114.4 1166.8 114.5 1166.6 114.6 1166.5 114.7 1166.3 114.8 1166.1 114.8 1165.9 114.9 1165.6 115 1165.4 115 1165.1 115.1 1164.9 115.2 1164.6 115.2 1164.2 115.2 1163.9 115.3 1163.6 115.3 1163.2 115.3 1162.8 115.3 1162.5 115.4 1162.1 115.4 1161.6 115.4 1161.2 115.4 1160.8 115.4 1160.3 115.3 1159.8 115.3 1159.3 115.3 1158.8 115.3 1158.3 115.2 1157.8 115.2 1157.2 115.2 1156.7 115.1 1156.1 115 1155.5 115 1154.9 114.9 1154.3 114.8 1153.7 114.8 1153 114.7 1152.4 114.6 1151.7 114.5 1151 114.4 1150.3 114.3 1149.6 114.2 1148.9 114.1 1148.2 113.9 1147.5 113.8 1146.7 113.7 1145.9 113.5 1145.2 113.4 1144.4 113.2 1143.6 113.1 1142.8 112.9 1142 112.8 1141.1 112.6 1140.3 112.4 1139.5 112.2 1138.6 112.1 1137.7 111.9 1136.9 111.7 1136 111.5 1135.1 111.3 1134.2 111.1 1133.3 110.9 1132.3 110.6 1131.4 110.4 1130.5 110.2 1129.5 110 1128.6 109.7 1127.6 109.5 1126.6 109.2 1125.6 109 1124.6 108.7 1123.6 108.5 1122.6 108.2 1121.6 107.9 1120.6 107.6 1119.6 107.4 1118.6 107.1 1117.5 106.8 1116.5 106.5 1115.4 106.2 1114.4 105.9 1113.3 105.6 1112.2 105.3 1111.2 105 1110.1 104.7 1109 104.4 1107.9 104 1106.8 103.7 1105.7 103.4 1104.6 103 1103.5 102.7 1102.4 102.4 1101.3 102 1100.2 101.7 1099.1 101.3 1098 100.9 1096.8 100.6 1095.7 100.2 1094.6 99.9 1093.4 99.5 1092.3 99.1 1091.2 98.7 1090 98.4 1088.9 98 1087.8 97.6 1086.6 97.2 1085.5 96.8 1084.3 96.4 1083.2 96 1082.1 95.6 1080.9 95.2" fill="none" stroke="#80d34d" stroke-width="2.6" stroke-linecap="round"/><path d="M835.1 132 835.4 131.1 835.7 130.3 836.1 129.4 836.5 128.6 837 127.8 837.4 126.9 837.9 126.1 838.5 125.2 839 124.4 839.6 123.5 840.3 122.7 840.9 121.8 841.6 121 842.3 120.2 843 119.4 843.8 118.6 844.5 117.8 845.3 117 846.1 116.2 847 115.5 847.8 114.7 848.7 114 849.6 113.3 850.5 112.6 851.4 112 852.3 111.3 853.2 110.7 854.1 110.1 855.1 109.6 856 109 857 108.5 857.9 108.1 858.9 107.6 859.8 107.2 860.8 106.8 861.7 106.5 862.7 106.1 863.6 105.9 864.5 105.6 865.4 105.4 866.4 105.2 867.2 105.1 868.1 105 869 105 869.9 104.9 870.7 105 871.5 105 872.3 105.1 873.1 105.2 873.9 105.4 874.7 105.6 875.4 105.9 876.1 106.1 876.8 106.5 877.5 106.8 878.1 107.2 878.8 107.6 879.4 108.1 880 108.5 880.5 109 881 109.6 881.5 110.1 882 110.7 882.5 111.3 882.9 112 883.3 112.6 883.7 113.3 884 114 884.3 114.7 884.6 115.5 884.9 116.2 885.1 117 885.3 117.8 885.5 118.6 885.6 119.4 885.8 120.2 885.9 121 885.9 121.8 885.9 122.7 885.9 123.5 885.9 124.4 885.8 125.2 885.8 126.1 885.6 126.9 885.5 127.8 885.3 128.6 885.1 129.4 884.9 130.3 884.6 131.1 884.3 132 884 132.8 883.6 133.6 883.3 134.4 882.9 135.2 882.5 136 882 136.8 881.5 137.6 881 138.4 880.5 139.1 880 139.9 879.4 140.6 878.8 141.3 878.2 142 877.6 142.7 876.9 143.3 876.2 144 875.5 144.6 874.8 145.2 874.1 145.8 873.4 146.4 872.6 147 871.8 147.5 871 148 870.2 148.5 869.4 149 868.6 149.5 867.8 149.9 866.9 150.3 866.1 150.7 865.2 151.1 864.3 151.5 863.5 151.8 862.6 152.1 861.7 152.4 860.8 152.6 860 152.8 859.1 153.1 858.2 153.2 857.3 153.4 856.4 153.5 855.5 153.6 854.7 153.7 853.8 153.8 852.9 153.8 852.1 153.8 851.2 153.8 850.4 153.8 849.6 153.7 848.8 153.6 848 153.5 847.2 153.4 846.4 153.2 845.6 153.1 844.9 152.8 844.1 152.6 843.4 152.4 842.7 152.1 842.1 151.8 841.4 151.5 840.8 151.1 840.2 150.7 839.6 150.3 839 149.9 838.5 149.5 838 149 837.5 148.5 837 148 836.6 147.5 836.2 147 835.8 146.4 835.5 145.8 835.2 145.2 834.9 144.6 834.6 144 834.4 143.3 834.2 142.7 834.1 142 833.9 141.3 833.8 140.6 833.8 139.9 833.8 139.1 833.8 138.4 833.8 137.6 833.9 136.8 834 136 834.1 135.2 834.3 134.4 834.5 133.6 834.8 132.8 835.1 132" fill="none" stroke="#2ab07f" stroke-width="2.6" stroke-linecap="round"/><path d="M569.2 289.1 569.5 288.2 569.8 287.4 570.1 286.5 570.5 285.7 570.9 284.8 571.3 284 571.8 283.2 572.3 282.3 572.8 281.5 573.4 280.7 573.9 279.9 574.6 279.1 575.2 278.3 575.9 277.6 576.6 276.8 577.3 276.1 578.1 275.3 578.9 274.6 579.6 273.9 580.5 273.3 581.3 272.6 582.1 272 583 271.4 583.9 270.8 584.8 270.2 585.7 269.7 586.6 269.1 587.5 268.6 588.5 268.2 589.4 267.7 590.4 267.3 591.3 266.9 592.3 266.5 593.2 266.2 594.1 265.9 595.1 265.6 596 265.3 597 265.1 597.9 264.9 598.8 264.7 599.7 264.6 600.6 264.5 601.5 264.4 602.4 264.4 603.2 264.4 604.1 264.4 604.9 264.4 605.7 264.5 606.5 264.6 607.3 264.7 608 264.9 608.8 265.1 609.5 265.3 610.2 265.6 610.8 265.9 611.5 266.2 612.1 266.5 612.7 266.9 613.3 267.3 613.8 267.7 614.3 268.2 614.8 268.6 615.3 269.1 615.8 269.7 616.2 270.2 616.6 270.8 616.9 271.4 617.3 272 617.6 272.6 617.9 273.3 618.1 273.9 618.4 274.6 618.6 275.3 618.8 276.1 618.9 276.8 619 277.6 619.1 278.3 619.2 279.1 619.3 279.9 619.3 280.7 619.3 281.5 619.3 282.3 619.2 283.2 619.1 284 619 284.8 618.9 285.7 618.8 286.5 618.6 287.4 618.4 288.2 618.1 289.1 617.9 289.9 617.6 290.8 617.3 291.6 617 292.5 616.7 293.3 616.3 294.1 615.9 295 615.5 295.8 615.1 296.6 614.7 297.4 614.2 298.2 613.7 298.9 613.2 299.7 612.7 300.5 612.1 301.2 611.6 301.9 611 302.6 610.4 303.3 609.8 304 609.2 304.7 608.5 305.3 607.9 305.9 607.2 306.5 606.5 307.1 605.8 307.6 605.1 308.2 604.3 308.7 603.6 309.1 602.8 309.6 602 310 601.3 310.4 600.5 310.8 599.7 311.2 598.9 311.5 598 311.8 597.2 312.1 596.4 312.3 595.5 312.5 594.7 312.7 593.9 312.9 593 313 592.2 313.1 591.3 313.2 590.5 313.2 589.6 313.3 588.8 313.2 587.9 313.2 587.1 313.1 586.2 313 585.4 312.9 584.6 312.7 583.7 312.5 582.9 312.3 582.1 312.1 581.4 311.8 580.6 311.5 579.8 311.2 579.1 310.8 578.4 310.4 577.6 310 577 309.6 576.3 309.1 575.6 308.7 575 308.2 574.4 307.6 573.8 307.1 573.3 306.5 572.7 305.9 572.2 305.3 571.8 304.7 571.3 304 570.9 303.3 570.5 302.6 570.2 301.9 569.8 301.2 569.5 300.5 569.3 299.7 569.1 298.9 568.9 298.2 568.7 297.4 568.6 296.6 568.5 295.8 568.5 295 568.5 294.1 568.5 293.3 568.6 292.5 568.7 291.6 568.8 290.8 569 289.9 569.2 289.1" fill="none" stroke="#bddf26" stroke-width="2.6" stroke-linecap="round"/><path d="M483.6 306.2 483.7 305.4 483.9 304.5 484.1 303.7 484.4 302.8 484.7 302 485 301.1 485.4 300.3 485.8 299.5 486.3 298.7 486.7 297.8 487.3 297 487.8 296.3 488.4 295.5 489 294.7 489.6 294 490.3 293.2 491 292.5 491.7 291.8 492.4 291.1 493.2 290.5 494 289.8 494.8 289.2 495.6 288.6 496.4 288 497.3 287.4 498.1 286.9 499 286.4 499.9 285.9 500.8 285.4 501.7 285 502.6 284.5 503.5 284.1 504.4 283.8 505.4 283.4 506.3 283.1 507.2 282.8 508.1 282.6 509.1 282.4 510 282.2 510.9 282 511.8 281.9 512.7 281.8 513.5 281.7 514.4 281.6 515.3 281.6 516.1 281.6 516.9 281.7 517.8 281.8 518.6 281.9 519.3 282 520.1 282.2 520.9 282.4 521.6 282.6 522.3 282.8 523 283.1 523.6 283.4 524.3 283.8 524.9 284.1 525.5 284.5 526.1 285 526.6 285.4 527.2 285.9 527.7 286.4 528.2 286.9 528.6 287.4 529.1 288 529.5 288.6 529.9 289.2 530.2 289.8 530.6 290.5 530.9 291.1 531.2 291.8 531.5 292.5 531.7 293.2 531.9 294 532.1 294.7 532.3 295.5 532.5 296.3 532.6 297 532.7 297.8 532.8 298.7 532.8 299.5 532.9 300.3 532.9 301.1 532.9 302 532.8 302.8 532.8 303.7 532.7 304.5 532.6 305.4 532.5 306.2 532.3 307.1 532.1 307.9 532 308.7 531.7 309.6 531.5 310.4 531.3 311.3 531 312.1 530.7 312.9 530.4 313.7 530.1 314.5 529.7 315.3 529.3 316.1 528.9 316.9 528.5 317.6 528.1 318.4 527.6 319.1 527.2 319.8 526.7 320.5 526.2 321.2 525.6 321.8 525.1 322.5 524.5 323.1 523.9 323.7 523.3 324.3 522.7 324.8 522.1 325.4 521.4 325.9 520.8 326.4 520.1 326.8 519.4 327.3 518.7 327.7 518 328.1 517.2 328.4 516.5 328.8 515.7 329.1 514.9 329.3 514.1 329.6 513.3 329.8 512.5 330 511.7 330.2 510.9 330.3 510.1 330.4 509.2 330.5 508.4 330.5 507.5 330.5 506.7 330.5 505.8 330.5 505 330.4 504.1 330.3 503.3 330.2 502.4 330 501.5 329.8 500.7 329.6 499.9 329.3 499 329.1 498.2 328.8 497.4 328.4 496.6 328.1 495.8 327.7 495 327.3 494.2 326.8 493.5 326.4 492.8 325.9 492 325.4 491.3 324.8 490.7 324.3 490 323.7 489.4 323.1 488.8 322.5 488.2 321.8 487.7 321.2 487.2 320.5 486.7 319.8 486.2 319.1 485.8 318.4 485.4 317.6 485 316.9 484.7 316.1 484.4 315.3 484.1 314.5 483.9 313.7 483.7 312.9 483.6 312.1 483.4 311.3 483.4 310.4 483.3 309.6 483.3 308.7 483.4 307.9 483.4 307.1 483.6 306.2" fill="none" stroke="#25858e" stroke-width="2.6" stroke-linecap="round"/><path d="M866 112.5h7M869.5 109v7M857.8 118.3h7M861.3 114.8v7M854 130.8h7M857.5 127.3v7M842.8 149.2h7M846.3 145.7v7M1069.8 84.2h7M1073.3 80.7v7M1092.3 93h7M1095.8 89.5v7M1134 108h7M1137.5 104.5v7M595.7 273.3h7M599.2 269.8v7M584 302.5h7M587.5 299v7M498.2 318.3h7M501.7 314.8v7" stroke="#ff0000" stroke-width="1.4" fill="none"/><g font-family="Liberation Sans, sans-serif" font-size="10.4" fill="#fff" text-anchor="middle"><text x="1093.8" y="94.2">DKD</text><text x="860.7" y="132.5">DPC</text><text x="594" y="292.5">MON</text><text x="507.5" y="309.2">HYD</text></g><g fill="#fff" font-family="Liberation Mono, monospace" font-size="13.93"><text x="316.1" y="29.8" xml:space="preserve">UK000J</text><text x="316.1" y="43.1" xml:space="preserve">Beg: 20251202 22:39:09 (sol = 250.65°)</text><text x="316.1" y="56.9" xml:space="preserve">End: 20251203 06:39:17 (sol = 250.99°)</text><text x="316.1" y="70.2" xml:space="preserve">--------------------------------------</text><text x="316.1" y="82" xml:space="preserve">...: 18</text><text x="316.1" y="94.8" xml:space="preserve">DKD: 4</text><text x="316.1" y="107.8" xml:space="preserve">DPC: 4</text><text x="316.1" y="121.5" xml:space="preserve">MON: 2</text><text x="316.1" y="134.8" xml:space="preserve">HYD: 1</text></g><g font-family="Liberation Sans, sans-serif" font-size="29.3" fill="#595959"><text transform="translate(148.9 642.3) rotate(-90) scale(0.913 1)" text-anchor="end">APR</text><text transform="translate(294.7 643.8) rotate(-90) scale(0.913 1)" text-anchor="end">MAY</text><text transform="translate(436 640.6) rotate(-90) scale(0.913 1)" text-anchor="end">JUN</text><text transform="translate(577.3 641.3) rotate(-90) scale(0.913 1)" text-anchor="end">JUL</text><text transform="translate(724 643) rotate(-90) scale(0.913 1)" text-anchor="end">AUG</text><text transform="translate(872 643) rotate(-90) scale(0.913 1)" text-anchor="end">SEP</text><text transform="translate(1017.3 642.6) rotate(-90) scale(0.913 1)" text-anchor="end">OCT</text><text transform="translate(1170.7 644.8) rotate(-90) scale(0.913 1)" text-anchor="end">NOV</text><text transform="translate(1320 644.3) rotate(-90) scale(0.913 1)" text-anchor="end">DEC</text><text transform="translate(1469.3 640.1) rotate(-90) scale(0.913 1)" text-anchor="end">JAN</text><text transform="translate(1628 645.6) rotate(-90) scale(0.913 1)" text-anchor="end">FEB</text><text transform="translate(1766.1 643.8) rotate(-90) scale(0.913 1)" text-anchor="end">MAR</text></g><path d="M75 642V842M219 642V842M365 642V842M506 642V842M651 642V842M796.5 642V842M940 642V842M1091 642V842M1239 642V842M1394 642V842M1548 642V842M1687 642V842" stroke="#5c5c5c" stroke-width="2" stroke-dasharray="2.08 3.44" fill="none"/><g><rect x="106" y="832" width="24" height="4" fill="#bddf26"/><rect x="165" y="832" width="180" height="4" fill="#bddf26"/><rect x="366" y="832" width="259" height="4" fill="#bddf26"/><rect x="636" y="832" width="150.7" height="4" fill="#bddf26"/><rect x="807" y="832" width="93" height="4" fill="#bddf26"/><rect x="920" y="832" width="52.8" height="4" fill="#bddf26"/><rect x="984" y="832" width="81.7" height="4" fill="#bddf26"/><rect x="1082" y="832" width="122.2" height="4" fill="#bddf26"/><rect x="1244" y="832" width="82" height="4" fill="#bddf26"/><rect x="1337.4" y="832" width="18.4" height="4" fill="#bddf26"/><rect x="1381.1" y="832" width="62.8" height="4" fill="#bddf26"/><rect x="1458.9" y="832" width="53.1" height="4" fill="#bddf26"/><rect x="1523" y="832" width="24" height="4" fill="#bddf26"/><rect x="1724" y="832" width="24" height="4" fill="#bddf26"/><rect x="1758" y="832" width="24" height="4" fill="#bddf26"/><rect x="165" y="815.7" width="23.8" height="4" fill="#80d34d"/><rect x="224.2" y="815.7" width="62.8" height="4" fill="#80d34d"/><rect x="312" y="815.7" width="28.8" height="4" fill="#80d34d"/><rect x="366" y="815.7" width="126.9" height="4" fill="#80d34d"/><rect x="508" y="815.7" width="145.9" height="4" fill="#80d34d"/><rect x="704" y="815.7" width="33.9" height="4" fill="#80d34d"/><rect x="773" y="815.7" width="72.8" height="4" fill="#80d34d"/><rect x="871" y="815.7" width="116.7" height="4" fill="#80d34d"/><rect x="1003.3" y="815.7" width="13.4" height="4" fill="#80d34d"/><rect x="1062.2" y="815.7" width="150.7" height="4" fill="#80d34d"/><rect x="1244" y="815.7" width="23" height="4" fill="#80d34d"/><rect x="1293.2" y="815.7" width="22.8" height="4" fill="#80d34d"/><rect x="1342.2" y="815.7" width="22.8" height="4" fill="#80d34d"/><rect x="1386" y="815.7" width="43" height="4" fill="#80d34d"/><rect x="1458.9" y="815.7" width="23.9" height="4" fill="#80d34d"/><rect x="1548" y="815.7" width="22.9" height="4" fill="#80d34d"/><rect x="165" y="799.3" width="23.8" height="4" fill="#4fc369"/><rect x="258" y="799.3" width="230" height="4" fill="#4fc369"/><rect x="508" y="799.3" width="107" height="4" fill="#4fc369"/><rect x="626" y="799.3" width="92" height="4" fill="#4fc369"/><rect x="729.1" y="799.3" width="96.9" height="4" fill="#4fc369"/><rect x="949" y="799.3" width="200.7" height="4" fill="#4fc369"/><rect x="1160" y="799.3" width="87.9" height="4" fill="#4fc369"/><rect x="1258" y="799.3" width="185.9" height="4" fill="#4fc369"/><rect x="1458.9" y="799.3" width="23.9" height="4" fill="#4fc369"/><rect x="1553.2" y="799.3" width="22.7" height="4" fill="#4fc369"/><rect x="194.2" y="783" width="23.8" height="4" fill="#2ab07f"/><rect x="322" y="783" width="185" height="4" fill="#2ab07f"/><rect x="518.2" y="783" width="23.8" height="4" fill="#2ab07f"/><rect x="557" y="783" width="127" height="4" fill="#2ab07f"/><rect x="807" y="783" width="23.8" height="4" fill="#2ab07f"/><rect x="953.9" y="783" width="18.9" height="4" fill="#2ab07f"/><rect x="989" y="783" width="135.8" height="4" fill="#2ab07f"/><rect x="1155.2" y="783" width="62.6" height="4" fill="#2ab07f"/><rect x="1244" y="783" width="23" height="4" fill="#2ab07f"/><rect x="1317" y="783" width="23.9" height="4" fill="#2ab07f"/><rect x="1396" y="783" width="23" height="4" fill="#2ab07f"/><rect x="1464.1" y="783" width="185.9" height="4" fill="#2ab07f"/><rect x="341.2" y="766.6" width="28.8" height="4" fill="#1f9b8a"/><rect x="410" y="766.6" width="38.2" height="4" fill="#1f9b8a"/><rect x="469.2" y="766.6" width="23.8" height="4" fill="#1f9b8a"/><rect x="528" y="766.6" width="18" height="4" fill="#1f9b8a"/><rect x="562.1" y="766.6" width="28.9" height="4" fill="#1f9b8a"/><rect x="616.2" y="766.6" width="32.8" height="4" fill="#1f9b8a"/><rect x="959.2" y="766.6" width="28.8" height="4" fill="#1f9b8a"/><rect x="1062.2" y="766.6" width="23.8" height="4" fill="#1f9b8a"/><rect x="1101" y="766.6" width="23.8" height="4" fill="#1f9b8a"/><rect x="1160" y="766.6" width="34" height="4" fill="#1f9b8a"/><rect x="1249.3" y="766.6" width="22.5" height="4" fill="#1f9b8a"/><rect x="1425" y="766.6" width="87" height="4" fill="#1f9b8a"/><rect x="420" y="750.3" width="24" height="4" fill="#25858e"/><rect x="533" y="750.3" width="22.9" height="4" fill="#25858e"/><rect x="567" y="750.3" width="24" height="4" fill="#25858e"/><rect x="621" y="750.3" width="122" height="4" fill="#25858e"/><rect x="969.3" y="750.3" width="165.4" height="4" fill="#25858e"/><rect x="1185.1" y="750.3" width="160.6" height="4" fill="#25858e"/><rect x="1469.2" y="750.3" width="23.7" height="4" fill="#25858e"/><rect x="429.9" y="734" width="23.1" height="4" fill="#2d708e"/><rect x="577" y="734" width="156" height="4" fill="#2d708e"/><rect x="994.2" y="734" width="110.8" height="4" fill="#2d708e"/><rect x="1116.3" y="734" width="106.7" height="4" fill="#2d708e"/><rect x="1263" y="734" width="28.9" height="4" fill="#2d708e"/><rect x="1489" y="734" width="23" height="4" fill="#2d708e"/><rect x="592" y="717.6" width="23" height="4" fill="#385a8c"/><rect x="655" y="717.6" width="117" height="4" fill="#385a8c"/><rect x="1072" y="717.6" width="170.7" height="4" fill="#385a8c"/><rect x="1263" y="717.6" width="23.8" height="4" fill="#385a8c"/><rect x="596.1" y="701.3" width="136.9" height="4" fill="#424186"/><rect x="1092" y="701.3" width="28" height="4" fill="#424186"/><rect x="1199.9" y="701.3" width="23.1" height="4" fill="#424186"/><rect x="1273.2" y="701.3" width="52.8" height="4" fill="#424186"/><rect x="1110.8" y="684.9" width="23.9" height="4" fill="#482475"/></g><path d="M114 834h8M118 830v8M240.7 834h8M244.7 830v8M511 834h8M515 830v8M706.7 834h8M710.7 830v8M833.6 834h8M837.6 830v8M962 834h8M966 830v8M986.7 834h8M990.7 830v8M1116.5 834h8M1120.5 830v8M1295.4 834h8M1299.4 830v8M1341.7 834h8M1345.7 830v8M1413 834h8M1417 830v8M1481.7 834h8M1485.7 830v8M1530.7 834h8M1534.7 830v8M1732 834h8M1736 830v8M1766 834h8M1770 830v8M172.7 817.7h8M176.7 813.7v8M255.7 817.7h8M259.7 813.7v8M323.8 817.7h8M327.8 813.7v8M437.9 817.7h8M441.9 813.7v8M599 817.7h8M603 813.7v8M716.8 817.7h8M720.8 813.7v8M793.8 817.7h8M797.8 813.7v8M939.6 817.7h8M943.6 813.7v8M1005.7 817.7h8M1009.7 813.7v8M1153 817.7h8M1157 813.7v8M1250.7 817.7h8M1254.7 813.7v8M1299.7 817.7h8M1303.7 813.7v8M1349.5 817.7h8M1353.5 813.7v8M1403 817.7h8M1407 813.7v8M1467 817.7h8M1471 813.7v8M1554.6 817.7h8M1558.6 813.7v8M174.8 801.3h8M178.8 797.3v8M379 801.3h8M383 797.3v8M544.9 801.3h8M548.9 797.3v8M682.7 801.3h8M686.7 797.3v8M741.9 801.3h8M745.9 797.3v8M1074.7 801.3h8M1078.7 797.3v8M1216.9 801.3h8M1220.9 797.3v8M1304.8 801.3h8M1308.8 797.3v8M1467 801.3h8M1471 797.3v8M1559.9 801.3h8M1563.9 797.3v8M201.8 785h8M205.8 781v8M400.6 785h8M404.6 781v8M525.8 785h8M529.8 781v8M638.8 785h8M642.8 781v8M814.8 785h8M818.8 781v8M959.8 785h8M963.8 781v8M1040.7 785h8M1044.7 781v8M1187.7 785h8M1191.7 781v8M1250.7 785h8M1254.7 781v8M1324.6 785h8M1328.6 781v8M1403 785h8M1407 781v8M1545.3 785h8M1549.3 781v8M356 768.6h8M360 764.6v8M426.9 768.6h8M430.9 764.6v8M476.8 768.6h8M480.8 764.6v8M535.7 768.6h8M539.7 764.6v8M570.7 768.6h8M574.7 764.6v8M631 768.6h8M635 764.6v8M973.6 768.6h8M977.6 764.6v8M1069.9 768.6h8M1073.9 764.6v8M1108.8 768.6h8M1112.8 764.6v8M1177.8 768.6h8M1181.8 764.6v8M1255.8 768.6h8M1259.8 764.6v8M1467 768.6h8M1471 764.6v8M427.6 752.3h8M431.6 748.3v8M539.6 752.3h8M543.6 748.3v8M574.6 752.3h8M578.6 748.3v8M703.7 752.3h8M707.7 748.3v8M1094.8 752.3h8M1098.8 748.3v8M1270.7 752.3h8M1274.7 748.3v8M1476.9 752.3h8M1480.9 748.3v8M438 736h8M442 732v8M631 736h8M635 732v8M1038.8 736h8M1042.8 732v8M1167.7 736h8M1171.7 732v8M1274.6 736h8M1278.6 732v8M1496.7 736h8M1500.7 732v8M599 719.6h8M603 715.6v8M726.9 719.6h8M730.9 715.6v8M1187.7 719.6h8M1191.7 715.6v8M1270.7 719.6h8M1274.7 715.6v8M687.8 703.3h8M691.8 699.3v8M1102 703.3h8M1106 699.3v8M1207 703.3h8M1211 699.3v8M1299.7 703.3h8M1303.7 699.3v8M1118.9 686.9h8M1122.9 682.9v8" stroke="#fff" stroke-width="2" fill="none"/><g font-family="Liberation Sans, sans-serif" font-size="10.2" fill="#fff" text-anchor="middle"><text x="118" y="831.8">KSE</text><text x="255" y="831.8">ETA</text><text x="495.5" y="831.8">NZC</text><text x="711.4" y="831.8">NDA</text><text x="853.5" y="831.8">SPE</text><text x="946.4" y="831.8">ARD</text><text x="1024.8" y="831.8">EGE</text><text x="1143.1" y="831.8">NTA</text><text x="1285" y="831.8">MON</text><text x="1346.6" y="831.8">URS</text><text x="1412.5" y="831.8">AHY</text><text x="1485.5" y="831.8">GUM</text><text x="1535" y="831.8">OHY</text><text x="1736" y="831.8">XHE</text><text x="1770" y="831.8">EVI</text><text x="176.9" y="815.5">AVB</text><text x="255.6" y="815.5">ELY</text><text x="326.4" y="815.5">CAM</text><text x="429.4" y="815.5">SSG</text><text x="581" y="815.5">PCA</text><text x="721" y="815.5">AUD</text><text x="809.4" y="815.5">AUR</text><text x="929.4" y="815.5">DSX</text><text x="1010" y="815.5">OCU</text><text x="1137.6" y="815.5">OER</text><text x="1255.5" y="815.5">DKD</text><text x="1304.6" y="815.5">DSV</text><text x="1353.6" y="815.5">ALY</text><text x="1407.5" y="815.5">JLE</text><text x="1470.8" y="815.5">SCC</text><text x="1559.5" y="815.5">FEV</text><text x="176.9" y="799.1">LYR</text><text x="373" y="799.1">JMC</text><text x="561.5" y="799.1">JPE</text><text x="672" y="799.1">PAU</text><text x="777.5" y="799.1">NIA</text><text x="1049.3" y="799.1">STA</text><text x="1204" y="799.1">NOO</text><text x="1351" y="799.1">COM</text><text x="1470.8" y="799.1">NCC</text><text x="1564.6" y="799.1">FED</text><text x="206.1" y="782.8">HVI</text><text x="414.5" y="782.8">ARI</text><text x="530.1" y="782.8">SZC</text><text x="620.5" y="782.8">CAP</text><text x="818.9" y="782.8">NUE</text><text x="963.3" y="782.8">OCT</text><text x="1056.9" y="782.8">ORI</text><text x="1186.5" y="782.8">AMO</text><text x="1255.5" y="782.8">DPC</text><text x="1329" y="782.8">XVI</text><text x="1407.5" y="782.8">QUA</text><text x="1557" y="782.8">AAN</text><text x="355.6" y="766.4">TAH</text><text x="429.1" y="766.4">JEA</text><text x="481.1" y="766.4">JIP</text><text x="537" y="766.4">PPS</text><text x="576.5" y="766.4">ZCS</text><text x="632.6" y="766.4">GDR</text><text x="973.6" y="766.4">DRA</text><text x="1074.1" y="766.4">LUM</text><text x="1112.9" y="766.4">RPU</text><text x="1177" y="766.4">THA</text><text x="1260.5" y="766.4">PSU</text><text x="1468.5" y="766.4">XCB</text><text x="432" y="750.1">JRC</text><text x="544.5" y="750.1">CAN</text><text x="579" y="750.1">FAN</text><text x="682" y="750.1">PER</text><text x="1052" y="750.1">CTA</text><text x="1265.4" y="750.1">HYD</text><text x="1481.1" y="750.1">XUM</text><text x="441.4" y="733.8">COR</text><text x="655" y="733.8">SDA</text><text x="1049.6" y="733.8">LMI</text><text x="1169.7" y="733.8">LEO</text><text x="1277.5" y="733.8">EHY</text><text x="1500.5" y="733.8">ECV</text><text x="603.5" y="717.4">JXA</text><text x="713.5" y="717.4">KCG</text><text x="1157.3" y="717.4">AND</text><text x="1274.9" y="717.4">DAD</text><text x="664.5" y="701.1">ERI</text><text x="1106" y="701.1">SLD</text><text x="1211.5" y="701.1">ORS</text><text x="1299.6" y="701.1">GEM</text><text x="1122.8" y="684.7">KUM</text></g><path d="M1249.4 642V842M1251.5 642V842" stroke="#ff0000" stroke-width="1.4" stroke-dasharray="5 2.2" fill="none"/><rect x="20.4" y="641.4" width="1765.2" height="200.9" fill="none" stroke="#fff" stroke-width="1.1"/><path d="M20.4 842.3v5M265.5 842.3v5M510.6 842.3v5M755.7 842.3v5M1000.7 842.3v5M1245.8 842.3v5M1490.9 842.3v5M1736 842.3v5" stroke="#fff" stroke-width="1.1" fill="none"/><g font-family="Liberation Sans, sans-serif" font-size="13.9" fill="#fff" text-anchor="middle"><text x="16" y="862.3" textLength="8.8" lengthAdjust="spacingAndGlyphs" text-anchor="start">0</text><text x="256.6" y="862.3" textLength="17.7" lengthAdjust="spacingAndGlyphs" text-anchor="start">50</text><text x="497.3" y="862.3" textLength="26.5" lengthAdjust="spacingAndGlyphs" text-anchor="start">100</text><text x="742.4" y="862.3" textLength="26.5" lengthAdjust="spacingAndGlyphs" text-anchor="start">150</text><text x="987.5" y="862.3" textLength="26.5" lengthAdjust="spacingAndGlyphs" text-anchor="start">200</text><text x="1232.6" y="862.3" textLength="26.5" lengthAdjust="spacingAndGlyphs" text-anchor="start">250</text><text x="1477.6" y="862.3" textLength="26.5" lengthAdjust="spacingAndGlyphs" text-anchor="start">300</text><text x="1722.7" y="862.3" textLength="26.5" lengthAdjust="spacingAndGlyphs" text-anchor="start">350</text><text x="829.4" y="881.9" textLength="145.9" lengthAdjust="spacingAndGlyphs" text-anchor="start">Solar longitude (deg)</text></g></svg></body></html>
